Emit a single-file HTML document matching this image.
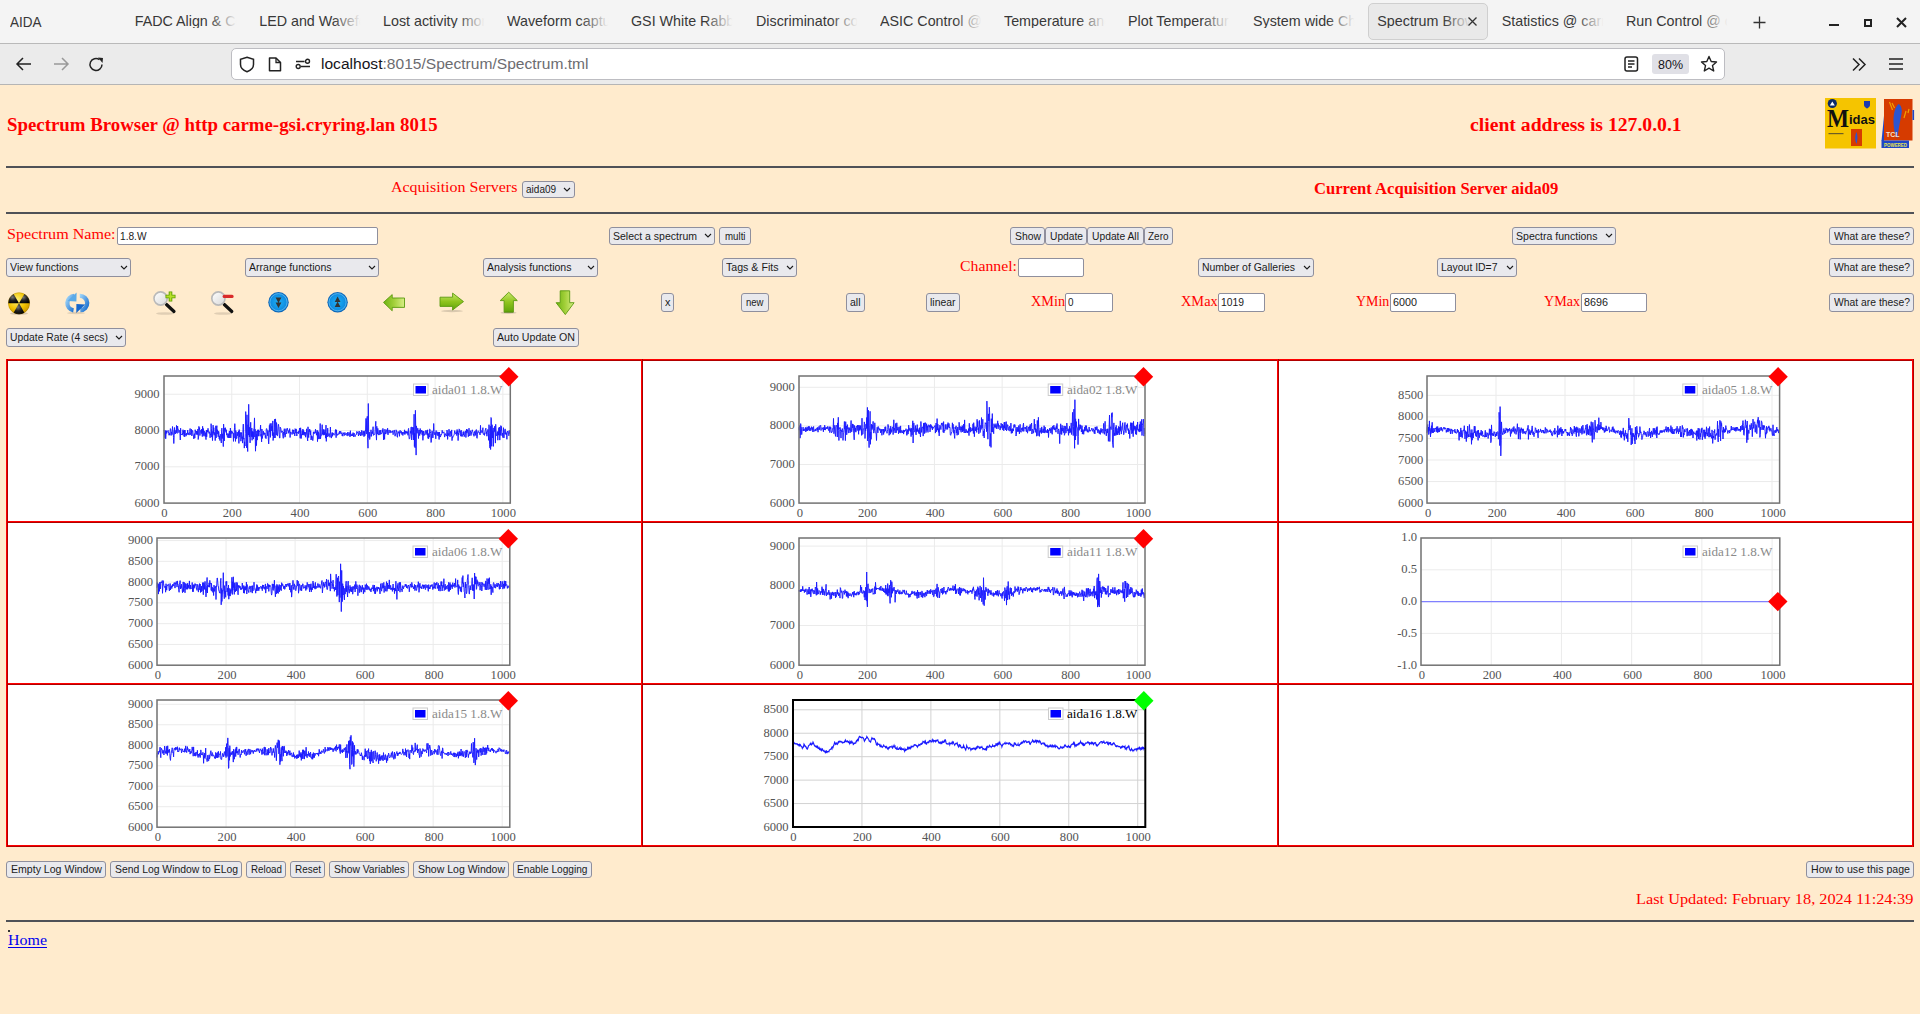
<!DOCTYPE html>
<html><head><meta charset="utf-8"><title>AIDA Spectrum Browser</title>
<style>
html,body{margin:0;padding:0;}
body{width:1920px;height:1014px;overflow:hidden;position:relative;background:#ffebcd;font-family:"Liberation Sans",sans-serif;}
.t{position:absolute;white-space:pre;transform-origin:0 0;}
.a{position:absolute;}
.btn{position:absolute;box-sizing:border-box;background:#e9e9ed;border:1px solid #8f8f9d;border-radius:3px;}
.inp{position:absolute;box-sizing:border-box;background:#fff;border:1px solid #8f8f9d;border-radius:2px;}
.hr{position:absolute;left:6px;width:1908px;height:2px;background:#4f5157;}
svg{position:absolute;overflow:visible;}
</style></head><body>
<div class="a" style="left:0;top:0;width:1920px;height:43px;background:#f4f4f4;"></div>
<div class="a" style="left:0;top:43px;width:1920px;height:1px;background:#b9b9b9;"></div>
<div class="a" style="left:0;top:44px;width:1920px;height:40px;background:#ebebeb;"></div>
<div class="a" style="left:0;top:84px;width:1920px;height:1px;background:#b5b5b5;"></div>
<div class="a" style="left:1368px;top:3px;width:120px;height:37px;box-sizing:border-box;background:#e9e9e9;border:1px solid #cfcfcf;border-radius:5px;"></div>
<div class="t" style="left:10.00px;top:15.39px;font:14.3px/14.3px 'Liberation Sans', sans-serif;color:#383838;transform:scaleX(0.9440);">AIDA</div>
<div class="t" style="left:134.7px;top:14.1px;width:104px;overflow:hidden;font:14.3px/14.3px 'Liberation Sans', sans-serif;color:#383838;">FADC Align &amp; Control</div>
<div class="a" style="left:208.7px;top:8px;width:30px;height:26px;background:linear-gradient(to right,rgba(0,0,0,0),#f4f4f4 92%);"></div>
<div class="t" style="left:259.2px;top:14.1px;width:104px;overflow:hidden;font:14.3px/14.3px 'Liberation Sans', sans-serif;color:#383838;">LED and Waveform</div>
<div class="a" style="left:333.2px;top:8px;width:30px;height:26px;background:linear-gradient(to right,rgba(0,0,0,0),#f4f4f4 92%);"></div>
<div class="t" style="left:383px;top:14.1px;width:104px;overflow:hidden;font:14.3px/14.3px 'Liberation Sans', sans-serif;color:#383838;">Lost activity monitor</div>
<div class="a" style="left:457px;top:8px;width:30px;height:26px;background:linear-gradient(to right,rgba(0,0,0,0),#f4f4f4 92%);"></div>
<div class="t" style="left:507px;top:14.1px;width:104px;overflow:hidden;font:14.3px/14.3px 'Liberation Sans', sans-serif;color:#383838;">Waveform capture</div>
<div class="a" style="left:581px;top:8px;width:30px;height:26px;background:linear-gradient(to right,rgba(0,0,0,0),#f4f4f4 92%);"></div>
<div class="t" style="left:631px;top:14.1px;width:104px;overflow:hidden;font:14.3px/14.3px 'Liberation Sans', sans-serif;color:#383838;">GSI White Rabbit</div>
<div class="a" style="left:705px;top:8px;width:30px;height:26px;background:linear-gradient(to right,rgba(0,0,0,0),#f4f4f4 92%);"></div>
<div class="t" style="left:756px;top:14.1px;width:104px;overflow:hidden;font:14.3px/14.3px 'Liberation Sans', sans-serif;color:#383838;">Discriminator control</div>
<div class="a" style="left:830px;top:8px;width:30px;height:26px;background:linear-gradient(to right,rgba(0,0,0,0),#f4f4f4 92%);"></div>
<div class="t" style="left:880px;top:14.1px;width:104px;overflow:hidden;font:14.3px/14.3px 'Liberation Sans', sans-serif;color:#383838;">ASIC Control @ carme</div>
<div class="a" style="left:954px;top:8px;width:30px;height:26px;background:linear-gradient(to right,rgba(0,0,0,0),#f4f4f4 92%);"></div>
<div class="t" style="left:1004px;top:14.1px;width:104px;overflow:hidden;font:14.3px/14.3px 'Liberation Sans', sans-serif;color:#383838;">Temperature and</div>
<div class="a" style="left:1078px;top:8px;width:30px;height:26px;background:linear-gradient(to right,rgba(0,0,0,0),#f4f4f4 92%);"></div>
<div class="t" style="left:1128px;top:14.1px;width:104px;overflow:hidden;font:14.3px/14.3px 'Liberation Sans', sans-serif;color:#383838;">Plot Temperature</div>
<div class="a" style="left:1202px;top:8px;width:30px;height:26px;background:linear-gradient(to right,rgba(0,0,0,0),#f4f4f4 92%);"></div>
<div class="t" style="left:1253px;top:14.1px;width:104px;overflow:hidden;font:14.3px/14.3px 'Liberation Sans', sans-serif;color:#383838;">System wide Checks</div>
<div class="a" style="left:1327px;top:8px;width:30px;height:26px;background:linear-gradient(to right,rgba(0,0,0,0),#f4f4f4 92%);"></div>
<div class="t" style="left:1377.3px;top:14.1px;width:96px;overflow:hidden;font:14.3px/14.3px 'Liberation Sans', sans-serif;color:#383838;">Spectrum Browser</div>
<div class="a" style="left:1443.3px;top:8px;width:30px;height:26px;background:linear-gradient(to right,rgba(0,0,0,0),#e9e9e9 92%);"></div>
<div class="t" style="left:1501.7px;top:14.1px;width:104px;overflow:hidden;font:14.3px/14.3px 'Liberation Sans', sans-serif;color:#383838;">Statistics @ carme</div>
<div class="a" style="left:1575.7px;top:8px;width:30px;height:26px;background:linear-gradient(to right,rgba(0,0,0,0),#f4f4f4 92%);"></div>
<div class="t" style="left:1626px;top:14.1px;width:104px;overflow:hidden;font:14.3px/14.3px 'Liberation Sans', sans-serif;color:#383838;">Run Control @ carme</div>
<div class="a" style="left:1700px;top:8px;width:30px;height:26px;background:linear-gradient(to right,rgba(0,0,0,0),#f4f4f4 92%);"></div>
<svg style="left:1467px;top:16px" width="11" height="11"><path d="M1.5 1.5L9.5 9.5M9.5 1.5L1.5 9.5" stroke="#333" stroke-width="1.3" fill="none"/></svg>
<svg style="left:1752px;top:15px" width="15" height="15"><path d="M7.5 1.5V13.5M1.5 7.5H13.5" stroke="#333" stroke-width="1.3" fill="none"/></svg>
<div class="a" style="left:1829px;top:24px;width:10px;height:2px;background:#222;"></div>
<div class="a" style="left:1864px;top:18.5px;width:8px;height:8px;box-sizing:border-box;border:2.4px solid #222;"></div>
<svg style="left:1896px;top:17px" width="11" height="11"><path d="M1 1L10 10M10 1L1 10" stroke="#222" stroke-width="2" fill="none"/></svg>
<svg style="left:15px;top:56px" width="18" height="16"><path d="M2 8H16M8 2L2 8L8 14" stroke="#222" stroke-width="1.5" fill="none"/></svg>
<svg style="left:52px;top:56px" width="18" height="16"><path d="M2 8H16M10 2L16 8L10 14" stroke="#999" stroke-width="1.5" fill="none"/></svg>
<svg style="left:88px;top:56px" width="17" height="17"><path d="M14 8.5A6 6 0 1 1 11.5 3.6" stroke="#222" stroke-width="1.5" fill="none"/><path d="M10 1.5L15 2L14.5 7Z" fill="#222"/></svg>
<div class="a" style="left:231px;top:48px;width:1494px;height:32px;box-sizing:border-box;background:#fff;border:1px solid #bdbdc2;border-radius:5px;"></div>
<svg style="left:239px;top:56px" width="16" height="17"><path d="M8 1.2L14.5 3.2V8.5C14.5 12 11.5 14.5 8 15.8C4.5 14.5 1.5 12 1.5 8.5V3.2Z" stroke="#222" stroke-width="1.5" fill="none"/></svg>
<svg style="left:268px;top:57px" width="14" height="15"><path d="M1.5 1H8L12.5 5.5V13.8H1.5Z" stroke="#222" stroke-width="1.5" fill="none" stroke-linejoin="round"/><path d="M8 1V5.5H12.5" stroke="#222" stroke-width="1.3" fill="none"/></svg>
<svg style="left:295px;top:58px" width="16" height="12"><path d="M6 8.5H15M1 3.5H9.5" stroke="#222" stroke-width="1.5"/><circle cx="3.2" cy="8.5" r="2" stroke="#222" stroke-width="1.4" fill="none"/><circle cx="12.5" cy="3.3" r="2" stroke="#222" stroke-width="1.4" fill="none"/></svg>
<div class="t" style="left:321.00px;top:55.88px;font:15.5px/15.5px 'Liberation Sans', sans-serif;color:#15141a;transform:scaleX(1.0049);">localhost<span style="color:#6c6c70">:8015/Spectrum/Spectrum.tml</span></div>
<svg style="left:1624px;top:56px" width="15" height="16"><rect x="1" y="1" width="12.5" height="14" rx="2" stroke="#222" stroke-width="1.5" fill="none"/><path d="M4 5H10.5M4 8H10.5M4 11H8" stroke="#222" stroke-width="1.3"/></svg>
<div class="a" style="left:1652px;top:54px;width:37px;height:20px;background:#e0e0e6;border-radius:3px;"></div>
<div class="t" style="left:1658.00px;top:57.99px;font:13px/13px 'Liberation Sans', sans-serif;color:#15141a;transform:scaleX(0.9608);">80%</div>
<svg style="left:1700px;top:55px" width="18" height="18"><path d="M9 1.5L11.2 6.5L16.5 7L12.5 10.6L13.7 16L9 13.2L4.3 16L5.5 10.6L1.5 7L6.8 6.5Z" stroke="#222" stroke-width="1.4" fill="none" stroke-linejoin="round"/></svg>
<svg style="left:1851px;top:57px" width="16" height="15"><path d="M2 1.5L8 7.5L2 13.5M8 1.5L14 7.5L8 13.5" stroke="#222" stroke-width="1.5" fill="none"/></svg>
<svg style="left:1888px;top:57px" width="16" height="14"><path d="M1 2H15M1 7H15M1 12H15" stroke="#222" stroke-width="1.5"/></svg>
<div class="t" style="left:7.00px;top:115.15px;font:bold 19.4px/19.4px 'Liberation Serif', serif;color:#f00;transform:scaleX(0.9715);">Spectrum Browser @ http carme-gsi.cryring.lan 8015</div>
<div class="t" style="left:1470.00px;top:115.15px;font:bold 19.4px/19.4px 'Liberation Serif', serif;color:#f00;transform:scaleX(1.0147);">client address is 127.0.0.1</div>
<div class="hr" style="top:166px"></div>
<div class="t" style="left:391.10px;top:180.26px;font:15.1px/15.1px 'Liberation Serif', serif;color:#f00;transform:scaleX(1.0580);">Acquisition Servers</div>
<div class="t" style="left:1313.70px;top:181.43px;font:bold 16.8px/16.8px 'Liberation Serif', serif;color:#f00;transform:scaleX(0.9898);">Current Acquisition Server aida09</div>
<div class="hr" style="top:212px"></div>
<div class="btn" style="left:522.1px;top:181.1px;width:52.69999999999993px;height:17.30000000000001px;"></div>
<svg style="left:563.3px;top:187.25px" width="8" height="5"><path d="M1 1L4 4L7 1" stroke="#1b1b1b" stroke-width="1.1" fill="none"/></svg>
<div class="t" style="left:526.40px;top:184.30px;font:11.2px/11.2px 'Liberation Sans', sans-serif;color:#1b1b1b;transform:scaleX(0.8960);">aida09</div>
<div class="t" style="left:7.00px;top:227.16px;font:15.1px/15.1px 'Liberation Serif', serif;color:#f00;transform:scaleX(1.0662);">Spectrum Name:</div>
<div class="inp" style="left:117px;top:227.3px;width:261px;height:17.299999999999983px;"></div>
<div class="t" style="left:120.00px;top:230.50px;font:11.2px/11.2px 'Liberation Sans', sans-serif;color:#1b1b1b;transform:scaleX(0.9069);">1.8.W</div>
<div class="btn" style="left:609px;top:227.3px;width:106px;height:17.299999999999983px;"></div>
<svg style="left:703.5px;top:233.45px" width="8" height="5"><path d="M1 1L4 4L7 1" stroke="#1b1b1b" stroke-width="1.1" fill="none"/></svg>
<div class="t" style="left:612.60px;top:230.50px;font:11.2px/11.2px 'Liberation Sans', sans-serif;color:#1b1b1b;transform:scaleX(0.9381);">Select a spectrum</div>
<div class="btn" style="left:719px;top:227.3px;width:32px;height:17.299999999999983px;"></div>
<div class="t" style="left:724.75px;top:230.50px;font:11.2px/11.2px 'Liberation Sans', sans-serif;color:#1b1b1b;transform:scaleX(0.8679);">multi</div>
<div class="btn" style="left:1010px;top:227.3px;width:35px;height:17.299999999999983px;"></div>
<div class="t" style="left:1014.50px;top:230.50px;font:11.2px/11.2px 'Liberation Sans', sans-serif;color:#1b1b1b;transform:scaleX(0.9291);">Show</div>
<div class="btn" style="left:1045px;top:227.3px;width:42px;height:17.299999999999983px;"></div>
<div class="t" style="left:1049.50px;top:230.50px;font:11.2px/11.2px 'Liberation Sans', sans-serif;color:#1b1b1b;transform:scaleX(0.9148);">Update</div>
<div class="btn" style="left:1087px;top:227.3px;width:57px;height:17.299999999999983px;"></div>
<div class="t" style="left:1091.75px;top:230.50px;font:11.2px/11.2px 'Liberation Sans', sans-serif;color:#1b1b1b;transform:scaleX(0.9202);">Update All</div>
<div class="btn" style="left:1144px;top:227.3px;width:29px;height:17.299999999999983px;"></div>
<div class="t" style="left:1148.25px;top:230.50px;font:11.2px/11.2px 'Liberation Sans', sans-serif;color:#1b1b1b;transform:scaleX(0.8912);">Zero</div>
<div class="btn" style="left:1512px;top:227.3px;width:104px;height:17.299999999999983px;"></div>
<svg style="left:1604.5px;top:233.45px" width="8" height="5"><path d="M1 1L4 4L7 1" stroke="#1b1b1b" stroke-width="1.1" fill="none"/></svg>
<div class="t" style="left:1515.60px;top:230.50px;font:11.2px/11.2px 'Liberation Sans', sans-serif;color:#1b1b1b;transform:scaleX(0.9428);">Spectra functions</div>
<div class="btn" style="left:1829px;top:227.3px;width:85px;height:17.299999999999983px;"></div>
<div class="t" style="left:1833.50px;top:230.50px;font:11.2px/11.2px 'Liberation Sans', sans-serif;color:#1b1b1b;transform:scaleX(0.9258);">What are these?</div>
<div class="btn" style="left:6px;top:258.3px;width:125px;height:18.399999999999977px;"></div>
<svg style="left:119.5px;top:265.0px" width="8" height="5"><path d="M1 1L4 4L7 1" stroke="#1b1b1b" stroke-width="1.1" fill="none"/></svg>
<div class="t" style="left:9.60px;top:262.05px;font:11.2px/11.2px 'Liberation Sans', sans-serif;color:#1b1b1b;transform:scaleX(0.9523);">View functions</div>
<div class="btn" style="left:245px;top:258.3px;width:134px;height:18.399999999999977px;"></div>
<svg style="left:367.5px;top:265.0px" width="8" height="5"><path d="M1 1L4 4L7 1" stroke="#1b1b1b" stroke-width="1.1" fill="none"/></svg>
<div class="t" style="left:248.60px;top:262.05px;font:11.2px/11.2px 'Liberation Sans', sans-serif;color:#1b1b1b;transform:scaleX(0.9409);">Arrange functions</div>
<div class="btn" style="left:483px;top:258.3px;width:115px;height:18.399999999999977px;"></div>
<svg style="left:586.5px;top:265.0px" width="8" height="5"><path d="M1 1L4 4L7 1" stroke="#1b1b1b" stroke-width="1.1" fill="none"/></svg>
<div class="t" style="left:486.60px;top:262.05px;font:11.2px/11.2px 'Liberation Sans', sans-serif;color:#1b1b1b;transform:scaleX(0.9437);">Analysis functions</div>
<div class="btn" style="left:722px;top:258.3px;width:75px;height:18.399999999999977px;"></div>
<svg style="left:785.5px;top:265.0px" width="8" height="5"><path d="M1 1L4 4L7 1" stroke="#1b1b1b" stroke-width="1.1" fill="none"/></svg>
<div class="t" style="left:725.60px;top:262.05px;font:11.2px/11.2px 'Liberation Sans', sans-serif;color:#1b1b1b;transform:scaleX(0.9489);">Tags &amp; Fits</div>
<div class="t" style="left:960.00px;top:259.16px;font:15.1px/15.1px 'Liberation Serif', serif;color:#f00;transform:scaleX(1.0460);">Channel:</div>
<div class="inp" style="left:1018px;top:258.3px;width:66px;height:18.399999999999977px;"></div>
<div class="btn" style="left:1198px;top:258.3px;width:116px;height:18.399999999999977px;"></div>
<svg style="left:1302.5px;top:265.0px" width="8" height="5"><path d="M1 1L4 4L7 1" stroke="#1b1b1b" stroke-width="1.1" fill="none"/></svg>
<div class="t" style="left:1201.60px;top:262.05px;font:11.2px/11.2px 'Liberation Sans', sans-serif;color:#1b1b1b;transform:scaleX(0.9349);">Number of Galleries</div>
<div class="btn" style="left:1437px;top:258.3px;width:80px;height:18.399999999999977px;"></div>
<svg style="left:1505.5px;top:265.0px" width="8" height="5"><path d="M1 1L4 4L7 1" stroke="#1b1b1b" stroke-width="1.1" fill="none"/></svg>
<div class="t" style="left:1440.60px;top:262.05px;font:11.2px/11.2px 'Liberation Sans', sans-serif;color:#1b1b1b;transform:scaleX(0.9317);">Layout ID=7</div>
<div class="btn" style="left:1829px;top:258.3px;width:85px;height:18.399999999999977px;"></div>
<div class="t" style="left:1833.50px;top:262.05px;font:11.2px/11.2px 'Liberation Sans', sans-serif;color:#1b1b1b;transform:scaleX(0.9258);">What are these?</div>
<div class="btn" style="left:661px;top:293.3px;width:13px;height:18.399999999999977px;"></div>
<div class="t" style="left:664.75px;top:297.05px;font:11.2px/11.2px 'Liberation Sans', sans-serif;color:#1b1b1b;transform:scaleX(0.9832);">x</div>
<div class="btn" style="left:741px;top:293.3px;width:28px;height:18.399999999999977px;"></div>
<div class="t" style="left:746.25px;top:297.05px;font:11.2px/11.2px 'Liberation Sans', sans-serif;color:#1b1b1b;transform:scaleX(0.8527);">new</div>
<div class="btn" style="left:846px;top:293.3px;width:19px;height:18.399999999999977px;"></div>
<div class="t" style="left:850.25px;top:297.05px;font:11.2px/11.2px 'Liberation Sans', sans-serif;color:#1b1b1b;transform:scaleX(0.9381);">all</div>
<div class="btn" style="left:926px;top:293.3px;width:34px;height:18.399999999999977px;"></div>
<div class="t" style="left:930.25px;top:297.05px;font:11.2px/11.2px 'Liberation Sans', sans-serif;color:#1b1b1b;transform:scaleX(0.9319);">linear</div>
<div class="t" style="left:1030.80px;top:293.66px;font:15.1px/15.1px 'Liberation Serif', serif;color:#f00;transform:scaleX(0.9428);">XMin</div>
<div class="inp" style="left:1065px;top:293.3px;width:48px;height:18.399999999999977px;"></div>
<div class="t" style="left:1068.00px;top:297.05px;font:11.2px/11.2px 'Liberation Sans', sans-serif;color:#1b1b1b;transform:scaleX(0.8840);">0</div>
<div class="t" style="left:1180.80px;top:293.66px;font:15.1px/15.1px 'Liberation Serif', serif;color:#f00;transform:scaleX(0.9516);">XMax</div>
<div class="inp" style="left:1218px;top:293.3px;width:47px;height:18.399999999999977px;"></div>
<div class="t" style="left:1221.00px;top:297.05px;font:11.2px/11.2px 'Liberation Sans', sans-serif;color:#1b1b1b;transform:scaleX(0.9241);">1019</div>
<div class="t" style="left:1356.40px;top:293.66px;font:15.1px/15.1px 'Liberation Serif', serif;color:#f00;transform:scaleX(0.9234);">YMin</div>
<div class="inp" style="left:1390px;top:293.3px;width:66px;height:18.399999999999977px;"></div>
<div class="t" style="left:1393.00px;top:297.05px;font:11.2px/11.2px 'Liberation Sans', sans-serif;color:#1b1b1b;transform:scaleX(0.9643);">6000</div>
<div class="t" style="left:1544.30px;top:293.66px;font:15.1px/15.1px 'Liberation Serif', serif;color:#f00;transform:scaleX(0.9386);">YMax</div>
<div class="inp" style="left:1581px;top:293.3px;width:66px;height:18.399999999999977px;"></div>
<div class="t" style="left:1584.00px;top:297.05px;font:11.2px/11.2px 'Liberation Sans', sans-serif;color:#1b1b1b;transform:scaleX(0.9643);">8696</div>
<div class="btn" style="left:1829px;top:293.3px;width:85px;height:18.399999999999977px;"></div>
<div class="t" style="left:1833.50px;top:297.05px;font:11.2px/11.2px 'Liberation Sans', sans-serif;color:#1b1b1b;transform:scaleX(0.9258);">What are these?</div>
<div class="btn" style="left:6px;top:328.3px;width:120px;height:18.30000000000001px;"></div>
<svg style="left:114.5px;top:334.95000000000005px" width="8" height="5"><path d="M1 1L4 4L7 1" stroke="#1b1b1b" stroke-width="1.1" fill="none"/></svg>
<div class="t" style="left:9.60px;top:332.00px;font:11.2px/11.2px 'Liberation Sans', sans-serif;color:#1b1b1b;transform:scaleX(0.9271);">Update Rate (4 secs)</div>
<div class="btn" style="left:493px;top:328.3px;width:86px;height:18.30000000000001px;"></div>
<div class="t" style="left:497.00px;top:332.00px;font:11.2px/11.2px 'Liberation Sans', sans-serif;color:#1b1b1b;transform:scaleX(0.9502);">Auto Update ON</div>
<div class="btn" style="left:6px;top:860.7px;width:100px;height:17.699999999999932px;"></div>
<div class="t" style="left:10.50px;top:864.10px;font:11.2px/11.2px 'Liberation Sans', sans-serif;color:#1b1b1b;transform:scaleX(0.9442);">Empty Log Window</div>
<div class="btn" style="left:110.3px;top:860.7px;width:131.7px;height:17.699999999999932px;"></div>
<div class="t" style="left:114.65px;top:864.10px;font:11.2px/11.2px 'Liberation Sans', sans-serif;color:#1b1b1b;transform:scaleX(0.9285);">Send Log Window to ELog</div>
<div class="btn" style="left:246.3px;top:860.7px;width:39.69999999999999px;height:17.699999999999932px;"></div>
<div class="t" style="left:250.65px;top:864.10px;font:11.2px/11.2px 'Liberation Sans', sans-serif;color:#1b1b1b;transform:scaleX(0.8744);">Reload</div>
<div class="btn" style="left:290.3px;top:860.7px;width:34.69999999999999px;height:17.699999999999932px;"></div>
<div class="t" style="left:294.65px;top:864.10px;font:11.2px/11.2px 'Liberation Sans', sans-serif;color:#1b1b1b;transform:scaleX(0.8896);">Reset</div>
<div class="btn" style="left:329.3px;top:860.7px;width:79.69999999999999px;height:17.699999999999932px;"></div>
<div class="t" style="left:333.65px;top:864.10px;font:11.2px/11.2px 'Liberation Sans', sans-serif;color:#1b1b1b;transform:scaleX(0.9233);">Show Variables</div>
<div class="btn" style="left:413.3px;top:860.7px;width:95.69999999999999px;height:17.699999999999932px;"></div>
<div class="t" style="left:417.65px;top:864.10px;font:11.2px/11.2px 'Liberation Sans', sans-serif;color:#1b1b1b;transform:scaleX(0.9389);">Show Log Window</div>
<div class="btn" style="left:513.3px;top:860.7px;width:78.70000000000005px;height:17.699999999999932px;"></div>
<div class="t" style="left:517.40px;top:864.10px;font:11.2px/11.2px 'Liberation Sans', sans-serif;color:#1b1b1b;transform:scaleX(0.9066);">Enable Logging</div>
<div class="btn" style="left:1806px;top:860.7px;width:108px;height:17.699999999999932px;"></div>
<div class="t" style="left:1810.50px;top:864.10px;font:11.2px/11.2px 'Liberation Sans', sans-serif;color:#1b1b1b;transform:scaleX(0.9476);">How to use this page</div>
<div class="t" style="left:1636.00px;top:892.36px;font:15.1px/15.1px 'Liberation Serif', serif;color:#f00;transform:scaleX(1.0797);">Last Updated: February 18, 2024 11:24:39</div>
<div class="hr" style="top:920px"></div>
<div class="a" style="left:8px;top:930px;width:1.5px;height:1.5px;background:#333;"></div>
<div class="t" style="left:8.00px;top:933.16px;font:15.1px/15.1px 'Liberation Serif', serif;color:#00e;transform:scaleX(1.0573);">Home</div>
<div class="a" style="left:8px;top:947px;width:39px;height:1px;background:#00e;"></div>
<div class="a" style="left:6px;top:359px;width:1908px;height:488px;background:#fff;"></div>
<svg style="left:118.5px;top:364.2px" width="416.3" height="167.10000000000002"><line x1="112.77" y1="12.0" x2="112.77" y2="139.10000000000002" stroke="#ebebeb" stroke-width="1"/><line x1="180.54" y1="12.0" x2="180.54" y2="139.10000000000002" stroke="#ebebeb" stroke-width="1"/><line x1="248.31" y1="12.0" x2="248.31" y2="139.10000000000002" stroke="#ebebeb" stroke-width="1"/><line x1="316.08" y1="12.0" x2="316.08" y2="139.10000000000002" stroke="#ebebeb" stroke-width="1"/><line x1="383.85" y1="12.0" x2="383.85" y2="139.10000000000002" stroke="#ebebeb" stroke-width="1"/><line x1="45.0" y1="102.81" x2="391.3" y2="102.81" stroke="#ebebeb" stroke-width="1"/><line x1="45.0" y1="66.51" x2="391.3" y2="66.51" stroke="#ebebeb" stroke-width="1"/><line x1="45.0" y1="30.22" x2="391.3" y2="30.22" stroke="#ebebeb" stroke-width="1"/><polyline points="45.0,66.0 45.3,67.6 45.7,71.2 46.0,73.9 46.4,66.5 46.7,74.8 47.0,70.1 47.4,66.7 47.7,69.4 48.0,67.8 48.4,67.6 48.7,67.5 49.1,66.4 49.4,67.3 49.7,69.5 50.1,71.3 50.4,69.4 50.8,70.9 51.1,67.3 51.4,64.6 51.8,65.6 52.1,71.5 52.5,67.8 52.8,68.6 53.1,70.6 53.5,62.5 53.8,65.7 54.1,66.9 54.5,73.5 54.8,79.5 55.2,71.6 55.5,63.5 55.8,69.5 56.2,68.7 56.5,69.8 56.9,66.3 57.2,68.6 57.5,61.4 57.9,69.0 58.2,69.4 58.6,62.0 58.9,65.2 59.2,65.2 59.6,66.0 59.9,68.7 60.2,67.4 60.6,66.4 60.9,68.1 61.3,76.0 61.6,64.2 61.9,69.9 62.3,70.5 62.6,70.0 63.0,71.0 63.3,71.0 63.6,68.7 64.0,65.7 64.3,69.5 64.7,66.9 65.0,72.4 65.3,66.1 65.7,72.8 66.0,66.1 66.3,70.6 66.7,70.0 67.0,72.2 67.4,71.4 67.7,69.1 68.0,70.6 68.4,69.1 68.7,66.1 69.1,70.6 69.4,69.5 69.7,68.9 70.1,71.1 70.4,68.8 70.8,67.8 71.1,64.5 71.4,70.7 71.8,69.3 72.1,69.2 72.4,65.2 72.8,71.9 73.1,68.2 73.5,66.4 73.8,66.9 74.1,71.0 74.5,72.1 74.8,74.9 75.2,70.6 75.5,69.7 75.8,74.1 76.2,65.7 76.5,68.3 76.9,69.7 77.2,70.7 77.5,67.1 77.9,69.9 78.2,67.2 78.5,70.6 78.9,65.0 79.2,75.5 79.6,73.0 79.9,62.4 80.2,65.6 80.6,63.7 80.9,71.5 81.3,66.6 81.6,66.2 81.9,66.5 82.3,69.6 82.6,65.2 83.0,68.1 83.3,72.6 83.6,62.3 84.0,68.8 84.3,64.5 84.6,71.3 85.0,72.3 85.3,67.1 85.7,67.2 86.0,71.8 86.3,68.6 86.7,73.3 87.0,75.6 87.4,66.1 87.7,72.8 88.0,67.5 88.4,66.1 88.7,68.1 89.0,64.3 89.4,68.2 89.7,68.4 90.1,69.5 90.4,67.7 90.7,67.9 91.1,73.8 91.4,69.8 91.8,70.9 92.1,59.7 92.4,64.3 92.8,73.1 93.1,67.4 93.5,76.6 93.8,69.5 94.1,61.1 94.5,69.4 94.8,63.7 95.1,71.2 95.5,68.5 95.8,68.7 96.2,76.6 96.5,72.7 96.8,61.8 97.2,73.9 97.5,64.2 97.9,61.7 98.2,70.1 98.5,65.8 98.9,68.2 99.2,72.8 99.6,67.2 99.9,68.0 100.2,74.8 100.6,72.1 100.9,76.5 101.2,71.6 101.6,70.3 101.9,74.8 102.3,79.0 102.6,66.9 102.9,64.1 103.3,74.5 103.6,69.8 104.0,73.4 104.3,82.6 104.6,60.1 105.0,68.8 105.3,76.9 105.7,64.2 106.0,66.8 106.3,63.7 106.7,66.8 107.0,68.4 107.3,65.7 107.7,71.1 108.0,69.3 108.4,73.4 108.7,73.4 109.0,69.8 109.4,69.8 109.7,74.0 110.1,69.4 110.4,67.0 110.7,74.0 111.1,71.4 111.4,64.0 111.8,73.9 112.1,68.1 112.4,66.8 112.8,69.7 113.1,69.6 113.4,67.6 113.8,69.0 114.1,69.6 114.5,77.4 114.8,69.2 115.1,74.1 115.5,63.2 115.8,59.7 116.2,65.3 116.5,77.4 116.8,66.6 117.2,69.9 117.5,74.7 117.9,74.4 118.2,68.1 118.5,71.7 118.9,70.5 119.2,70.1 119.5,67.1 119.9,79.4 120.2,65.6 120.6,73.1 120.9,71.7 121.2,68.4 121.6,69.0 121.9,77.2 122.3,68.4 122.6,70.7 122.9,74.6 123.3,72.7 123.6,79.1 124.0,65.6 124.3,60.1 124.6,75.2 125.0,74.2 125.3,84.1 125.6,77.8 126.0,82.0 126.3,69.8 126.7,47.6 127.0,56.4 127.3,56.3 127.7,83.9 128.0,50.8 128.4,79.4 128.7,87.5 129.0,60.7 129.4,71.1 129.7,40.3 130.1,67.9 130.4,73.0 130.7,63.2 131.1,78.9 131.4,64.3 131.7,58.3 132.1,70.7 132.4,72.7 132.8,64.0 133.1,76.3 133.4,67.4 133.8,73.0 134.1,67.7 134.5,75.1 134.8,65.0 135.1,65.0 135.5,53.9 135.8,73.0 136.1,65.2 136.5,87.2 136.8,77.3 137.2,67.0 137.5,81.6 137.8,70.3 138.2,76.1 138.5,66.2 138.9,65.7 139.2,72.1 139.5,65.9 139.9,72.2 140.2,68.8 140.6,66.8 140.9,66.6 141.2,66.4 141.6,61.1 141.9,72.3 142.2,70.0 142.6,77.9 142.9,65.0 143.3,74.5 143.6,72.0 143.9,71.6 144.3,67.1 144.6,70.4 145.0,70.4 145.3,68.7 145.6,70.4 146.0,69.1 146.3,73.6 146.7,71.4 147.0,74.7 147.3,64.8 147.7,64.5 148.0,65.6 148.3,67.2 148.7,71.8 149.0,66.6 149.4,76.0 149.7,79.9 150.0,74.0 150.4,61.4 150.7,67.7 151.1,59.6 151.4,73.4 151.7,62.5 152.1,59.3 152.4,62.0 152.8,66.9 153.1,62.1 153.4,71.6 153.8,56.9 154.1,76.5 154.4,74.1 154.8,68.5 155.1,74.0 155.5,55.3 155.8,63.4 156.1,74.0 156.5,54.9 156.8,59.7 157.2,71.0 157.5,58.6 157.8,60.7 158.2,71.8 158.5,71.8 158.9,66.8 159.2,62.5 159.5,60.3 159.9,63.3 160.2,70.2 160.5,73.9 160.9,74.1 161.2,63.1 161.6,64.4 161.9,64.4 162.2,68.5 162.6,68.2 162.9,66.9 163.3,67.0 163.6,68.3 163.9,72.2 164.3,74.3 164.6,68.1 165.0,69.0 165.3,64.7 165.6,71.3 166.0,73.2 166.3,72.9 166.6,68.6 167.0,64.7 167.3,69.2 167.7,69.9 168.0,67.7 168.3,64.2 168.7,65.7 169.0,66.6 169.4,66.6 169.7,69.3 170.0,68.4 170.4,67.8 170.7,64.6 171.1,73.5 171.4,69.9 171.7,67.8 172.1,69.1 172.4,68.9 172.7,69.2 173.1,70.5 173.4,67.6 173.8,65.6 174.1,69.6 174.4,67.4 174.8,66.0 175.1,70.1 175.5,68.9 175.8,72.0 176.1,64.7 176.5,65.1 176.8,69.2 177.1,64.9 177.5,67.3 177.8,72.0 178.2,68.0 178.5,68.4 178.8,67.9 179.2,67.7 179.5,69.7 179.9,66.9 180.2,68.3 180.5,64.0 180.9,69.2 181.2,74.3 181.6,63.8 181.9,67.4 182.2,74.5 182.6,70.3 182.9,70.8 183.2,66.7 183.6,71.1 183.9,65.0 184.3,70.7 184.6,66.4 184.9,70.5 185.3,71.4 185.6,67.9 186.0,69.8 186.3,68.3 186.6,73.2 187.0,71.2 187.3,70.1 187.7,64.8 188.0,68.4 188.3,74.0 188.7,76.9 189.0,62.8 189.3,68.3 189.7,73.6 190.0,66.6 190.4,67.5 190.7,65.0 191.0,69.0 191.4,71.0 191.7,66.6 192.1,76.0 192.4,71.7 192.7,74.4 193.1,72.3 193.4,75.1 193.8,76.6 194.1,75.0 194.4,67.8 194.8,69.6 195.1,70.0 195.4,68.2 195.8,67.8 196.1,68.9 196.5,65.2 196.8,69.1 197.1,68.8 197.5,71.2 197.8,67.3 198.2,66.2 198.5,77.6 198.8,66.8 199.2,75.1 199.5,68.3 199.9,69.6 200.2,74.9 200.5,74.7 200.9,71.0 201.2,59.5 201.5,74.9 201.9,72.0 202.2,71.4 202.6,71.4 202.9,64.8 203.2,60.7 203.6,70.3 203.9,68.8 204.3,71.2 204.6,65.4 204.9,70.3 205.3,67.8 205.6,70.8 206.0,65.6 206.3,70.5 206.6,74.2 207.0,61.1 207.3,77.4 207.6,69.5 208.0,71.7 208.3,72.9 208.7,64.1 209.0,69.2 209.3,71.3 209.7,72.3 210.0,69.4 210.4,70.3 210.7,71.2 211.0,73.3 211.4,63.0 211.7,69.6 212.1,70.9 212.4,74.1 212.7,71.8 213.1,68.6 213.4,72.3 213.7,68.8 214.1,70.6 214.4,69.5 214.8,69.6 215.1,71.2 215.4,70.9 215.8,70.5 216.1,69.0 216.5,65.5 216.8,68.2 217.1,73.7 217.5,65.8 217.8,70.5 218.1,71.5 218.5,70.1 218.8,70.4 219.2,69.7 219.5,70.4 219.8,70.3 220.2,68.0 220.5,67.3 220.9,70.1 221.2,67.2 221.5,68.4 221.9,67.6 222.2,69.7 222.6,69.8 222.9,68.8 223.2,71.9 223.6,70.1 223.9,72.2 224.2,68.6 224.6,69.8 224.9,69.1 225.3,70.7 225.6,71.5 225.9,68.4 226.3,70.9 226.6,70.5 227.0,70.0 227.3,69.2 227.6,69.9 228.0,71.9 228.3,71.9 228.7,68.2 229.0,70.5 229.3,70.4 229.7,71.5 230.0,68.3 230.3,69.1 230.7,70.9 231.0,72.9 231.4,66.7 231.7,70.9 232.0,71.9 232.4,70.7 232.7,71.8 233.1,69.8 233.4,70.8 233.7,71.9 234.1,68.6 234.4,71.2 234.8,73.0 235.1,69.1 235.4,70.6 235.8,71.6 236.1,72.6 236.4,70.9 236.8,70.7 237.1,70.4 237.5,70.5 237.8,67.3 238.1,67.7 238.5,69.0 238.8,68.5 239.2,70.3 239.5,72.0 239.8,68.5 240.2,67.0 240.5,70.6 240.9,70.6 241.2,70.6 241.5,71.9 241.9,68.0 242.2,71.5 242.5,66.5 242.9,66.3 243.2,69.1 243.6,69.3 243.9,71.4 244.2,66.9 244.6,69.0 244.9,72.7 245.3,72.2 245.6,67.3 245.9,71.7 246.3,66.2 246.6,66.9 247.0,54.4 247.3,70.1 247.6,56.3 248.0,54.4 248.3,52.3 248.6,73.2 249.0,84.2 249.3,39.5 249.7,70.9 250.0,73.9 250.3,68.1 250.7,75.5 251.0,73.0 251.4,70.5 251.7,69.8 252.0,65.8 252.4,72.4 252.7,69.4 253.1,67.8 253.4,69.7 253.7,66.6 254.1,62.7 254.4,71.4 254.7,70.9 255.1,70.2 255.4,70.6 255.8,70.3 256.1,67.1 256.4,62.3 256.8,57.3 257.1,69.0 257.5,76.1 257.8,62.3 258.1,68.5 258.5,70.2 258.8,64.4 259.2,69.0 259.5,69.5 259.8,71.1 260.2,66.3 260.5,66.5 260.8,70.8 261.2,69.9 261.5,66.2 261.9,70.2 262.2,69.5 262.5,70.0 262.9,69.2 263.2,65.8 263.6,68.3 263.9,64.4 264.2,65.8 264.6,75.9 264.9,68.6 265.2,68.6 265.6,75.3 265.9,65.2 266.3,68.7 266.6,70.1 266.9,67.0 267.3,65.7 267.6,66.7 268.0,69.5 268.3,68.6 268.6,64.2 269.0,70.9 269.3,68.4 269.7,68.5 270.0,65.9 270.3,67.4 270.7,68.2 271.0,69.1 271.3,66.4 271.7,68.4 272.0,68.7 272.4,68.3 272.7,67.4 273.0,68.5 273.4,68.1 273.7,66.7 274.1,70.7 274.4,69.3 274.7,68.4 275.1,66.1 275.4,66.2 275.8,70.2 276.1,72.2 276.4,70.0 276.8,70.4 277.1,65.8 277.4,66.7 277.8,68.5 278.1,72.5 278.5,73.3 278.8,68.4 279.1,67.4 279.5,68.0 279.8,69.3 280.2,67.8 280.5,72.3 280.8,66.9 281.2,66.3 281.5,68.6 281.9,68.5 282.2,69.3 282.5,67.4 282.9,70.6 283.2,70.0 283.5,68.3 283.9,71.5 284.2,68.2 284.6,68.3 284.9,69.1 285.2,70.0 285.6,65.8 285.9,70.6 286.3,68.8 286.6,67.2 286.9,69.2 287.3,67.3 287.6,69.2 288.0,68.8 288.3,69.3 288.6,67.6 289.0,71.3 289.3,65.6 289.6,64.4 290.0,73.2 290.3,75.1 290.7,74.5 291.0,72.6 291.3,67.1 291.7,69.3 292.0,63.1 292.4,63.0 292.7,76.0 293.0,71.1 293.4,70.8 293.7,63.2 294.1,65.5 294.4,63.6 294.7,76.0 295.1,50.2 295.4,82.5 295.7,69.3 296.1,83.8 296.4,46.3 296.8,65.9 297.1,91.1 297.4,61.9 297.8,64.6 298.1,69.3 298.5,65.0 298.8,64.2 299.1,65.4 299.5,74.5 299.8,67.4 300.2,66.0 300.5,71.4 300.8,71.6 301.2,64.5 301.5,68.0 301.8,69.6 302.2,66.2 302.5,67.7 302.9,66.3 303.2,71.1 303.5,67.3 303.9,76.3 304.2,71.7 304.6,67.0 304.9,71.8 305.2,70.4 305.6,70.8 305.9,69.2 306.2,67.4 306.6,66.5 306.9,70.5 307.3,69.5 307.6,68.0 307.9,66.3 308.3,71.2 308.6,65.8 309.0,74.4 309.3,69.5 309.6,74.7 310.0,71.6 310.3,73.1 310.7,65.1 311.0,65.4 311.3,67.5 311.7,69.5 312.0,78.5 312.3,78.2 312.7,69.4 313.0,66.8 313.4,67.9 313.7,73.8 314.0,74.0 314.4,67.7 314.7,59.5 315.1,67.4 315.4,70.5 315.7,70.8 316.1,68.3 316.4,68.8 316.8,74.8 317.1,66.5 317.4,69.1 317.8,69.2 318.1,71.3 318.4,68.2 318.8,67.9 319.1,72.0 319.5,68.3 319.8,71.9 320.1,75.5 320.5,68.0 320.8,73.2 321.2,72.0 321.5,73.0 321.8,70.4 322.2,71.2 322.5,69.9 322.9,69.3 323.2,66.3 323.5,69.0 323.9,68.9 324.2,69.0 324.5,68.3 324.9,67.8 325.2,69.4 325.6,73.1 325.9,72.3 326.2,69.5 326.6,70.9 326.9,71.3 327.3,71.4 327.6,72.1 327.9,66.0 328.3,66.7 328.6,75.4 329.0,69.2 329.3,70.1 329.6,71.6 330.0,65.2 330.3,68.9 330.6,69.8 331.0,72.8 331.3,67.2 331.7,69.3 332.0,69.3 332.3,72.0 332.7,65.9 333.0,76.6 333.4,72.6 333.7,73.6 334.0,72.8 334.4,72.4 334.7,71.5 335.1,70.9 335.4,69.2 335.7,66.6 336.1,68.4 336.4,69.3 336.7,70.1 337.1,68.8 337.4,67.7 337.8,71.6 338.1,65.5 338.4,69.6 338.8,67.1 339.1,76.6 339.5,69.0 339.8,70.8 340.1,64.9 340.5,65.3 340.8,68.4 341.2,66.9 341.5,70.6 341.8,72.2 342.2,66.2 342.5,72.2 342.8,70.6 343.2,72.5 343.5,71.1 343.9,70.0 344.2,67.7 344.5,71.1 344.9,67.6 345.2,72.7 345.6,70.8 345.9,70.7 346.2,68.0 346.6,66.8 346.9,73.5 347.3,68.9 347.6,65.0 347.9,69.0 348.3,65.6 348.6,67.0 348.9,68.4 349.3,72.7 349.6,70.5 350.0,64.2 350.3,71.2 350.6,71.9 351.0,70.0 351.3,66.6 351.7,68.7 352.0,71.6 352.3,70.3 352.7,67.5 353.0,66.5 353.3,65.8 353.7,67.8 354.0,67.9 354.4,71.0 354.7,70.2 355.0,72.3 355.4,69.1 355.7,67.3 356.1,68.6 356.4,71.4 356.7,66.8 357.1,65.7 357.4,65.6 357.8,73.9 358.1,74.3 358.4,70.8 358.8,67.5 359.1,66.7 359.4,67.3 359.8,68.5 360.1,68.1 360.5,69.1 360.8,70.1 361.1,71.0 361.5,61.3 361.8,69.2 362.2,66.8 362.5,66.8 362.8,66.6 363.2,68.7 363.5,66.7 363.9,63.7 364.2,70.2 364.5,70.0 364.9,70.6 365.2,69.3 365.5,71.4 365.9,67.7 366.2,66.6 366.6,64.8 366.9,64.1 367.2,69.9 367.6,67.7 367.9,72.2 368.3,68.2 368.6,68.0 368.9,65.4 369.3,68.9 369.6,76.3 370.0,60.7 370.3,69.7 370.6,80.6 371.0,84.1 371.3,62.2 371.6,85.5 372.0,53.5 372.3,54.2 372.7,82.3 373.0,60.7 373.3,63.3 373.7,74.0 374.0,66.7 374.4,82.4 374.7,64.0 375.0,64.1 375.4,67.6 375.7,62.2 376.1,69.6 376.4,79.1 376.7,60.3 377.1,68.2 377.4,71.8 377.7,71.3 378.1,70.7 378.4,67.5 378.8,76.2 379.1,68.0 379.4,71.1 379.8,63.7 380.1,71.3 380.5,63.0 380.8,76.1 381.1,66.0 381.5,71.3 381.8,61.6 382.2,66.4 382.5,62.5 382.8,71.4 383.2,71.8 383.5,69.1 383.8,73.5 384.2,70.1 384.5,63.7 384.9,74.0 385.2,70.8 385.5,68.8 385.9,65.7 386.2,64.9 386.6,70.3 386.9,70.3 387.2,68.5 387.6,71.2 387.9,75.3 388.3,67.1 388.6,68.1 388.9,68.2 389.3,67.6 389.6,68.6 389.9,71.8 390.3,66.3 390.6,69.5 391.0,68.7" fill="none" stroke="#1a1aff" stroke-width="0.95" stroke-linejoin="miter"/><rect x="45.0" y="12.0" width="346.3" height="127.10000000000002" fill="none" stroke="#727272" stroke-width="1.5"/><rect x="294.50" y="20.00" width="14.5" height="11.5" fill="#fff" stroke="#ccc" stroke-width="1"/><rect x="296.50" y="22.00" width="10.5" height="7.5" fill="#00f"/><path d="M389.80 3.00L399.50 12.70L389.80 22.40L380.10 12.70Z" fill="#f00"/></svg>
<div class="t" style="left:134.41px;top:496.65px;font:12.6px/12.6px 'Liberation Serif', serif;color:#545454;">6000</div>
<div class="t" style="left:134.41px;top:460.36px;font:12.6px/12.6px 'Liberation Serif', serif;color:#545454;">7000</div>
<div class="t" style="left:134.41px;top:424.06px;font:12.6px/12.6px 'Liberation Serif', serif;color:#545454;">8000</div>
<div class="t" style="left:134.41px;top:387.77px;font:12.6px/12.6px 'Liberation Serif', serif;color:#545454;">9000</div>
<div class="t" style="left:161.35px;top:506.95px;font:12.6px/12.6px 'Liberation Serif', serif;color:#545454;">0</div>
<div class="t" style="left:222.82px;top:506.95px;font:12.6px/12.6px 'Liberation Serif', serif;color:#545454;">200</div>
<div class="t" style="left:290.59px;top:506.95px;font:12.6px/12.6px 'Liberation Serif', serif;color:#545454;">400</div>
<div class="t" style="left:358.36px;top:506.95px;font:12.6px/12.6px 'Liberation Serif', serif;color:#545454;">600</div>
<div class="t" style="left:426.13px;top:506.95px;font:12.6px/12.6px 'Liberation Serif', serif;color:#545454;">800</div>
<div class="t" style="left:490.75px;top:506.95px;font:12.6px/12.6px 'Liberation Serif', serif;color:#545454;">1000</div>
<div class="t" style="left:431.50px;top:383.80px;font:12.3px/12.3px 'Liberation Serif', serif;color:#8a8a8a;transform:scaleX(1.0697);">aida01 1.8.W</div>
<svg style="left:753.8px;top:364.2px" width="416.0" height="167.10000000000002"><line x1="112.71" y1="12.0" x2="112.71" y2="139.10000000000002" stroke="#ebebeb" stroke-width="1"/><line x1="180.42" y1="12.0" x2="180.42" y2="139.10000000000002" stroke="#ebebeb" stroke-width="1"/><line x1="248.13" y1="12.0" x2="248.13" y2="139.10000000000002" stroke="#ebebeb" stroke-width="1"/><line x1="315.84" y1="12.0" x2="315.84" y2="139.10000000000002" stroke="#ebebeb" stroke-width="1"/><line x1="383.55" y1="12.0" x2="383.55" y2="139.10000000000002" stroke="#ebebeb" stroke-width="1"/><line x1="45.0" y1="100.49" x2="391.0" y2="100.49" stroke="#ebebeb" stroke-width="1"/><line x1="45.0" y1="61.88" x2="391.0" y2="61.88" stroke="#ebebeb" stroke-width="1"/><line x1="45.0" y1="23.27" x2="391.0" y2="23.27" stroke="#ebebeb" stroke-width="1"/><polyline points="45.0,63.3 45.3,66.2 45.7,61.5 46.0,74.2 46.4,71.4 46.7,59.6 47.0,63.9 47.4,63.4 47.7,70.6 48.0,67.5 48.4,66.5 48.7,65.8 49.1,63.1 49.4,66.8 49.7,65.2 50.1,67.0 50.4,65.9 50.8,64.7 51.1,64.6 51.4,63.4 51.8,68.0 52.1,63.9 52.4,64.5 52.8,67.0 53.1,62.8 53.5,66.8 53.8,66.1 54.1,64.3 54.5,62.5 54.8,66.2 55.2,62.3 55.5,64.4 55.8,66.9 56.2,63.8 56.5,65.2 56.8,66.7 57.2,65.6 57.5,62.7 57.9,64.5 58.2,65.7 58.5,63.6 58.9,68.0 59.2,63.9 59.6,62.5 59.9,67.5 60.2,67.4 60.6,66.9 60.9,65.6 61.3,66.6 61.6,65.2 61.9,67.1 62.3,64.5 62.6,63.9 62.9,64.2 63.3,66.2 63.6,63.4 64.0,68.2 64.3,66.4 64.6,65.2 65.0,62.4 65.3,65.8 65.7,63.8 66.0,61.7 66.3,61.0 66.7,61.5 67.0,66.5 67.3,64.4 67.7,63.9 68.0,63.5 68.4,63.9 68.7,65.2 69.0,64.8 69.4,67.8 69.7,63.3 70.1,64.2 70.4,66.0 70.7,61.2 71.1,64.8 71.4,66.1 71.7,63.6 72.1,63.9 72.4,63.5 72.8,64.9 73.1,63.2 73.4,64.5 73.8,62.3 74.1,64.1 74.5,66.3 74.8,66.7 75.1,63.5 75.5,62.8 75.8,68.6 76.1,62.7 76.5,64.9 76.8,63.5 77.2,67.4 77.5,68.8 77.8,67.6 78.2,67.8 78.5,66.4 78.9,64.0 79.2,64.3 79.5,54.4 79.9,69.7 80.2,67.0 80.5,64.0 80.9,61.2 81.2,70.2 81.6,72.4 81.9,63.2 82.2,62.6 82.6,61.5 82.9,61.1 83.3,73.0 83.6,58.9 83.9,65.3 84.3,53.3 84.6,66.8 84.9,76.5 85.3,65.4 85.6,63.7 86.0,63.2 86.3,63.6 86.6,67.7 87.0,74.1 87.3,65.8 87.7,66.6 88.0,68.0 88.3,64.5 88.7,66.3 89.0,76.4 89.4,68.9 89.7,68.6 90.0,66.1 90.4,57.5 90.7,65.1 91.0,62.2 91.4,76.6 91.7,57.7 92.1,68.1 92.4,62.0 92.7,70.8 93.1,65.2 93.4,60.6 93.8,65.2 94.1,63.7 94.4,69.1 94.8,68.7 95.1,63.5 95.4,66.1 95.8,64.4 96.1,68.8 96.5,67.3 96.8,60.9 97.1,56.5 97.5,67.7 97.8,67.9 98.2,64.7 98.5,59.9 98.8,63.9 99.2,60.4 99.5,66.1 99.8,69.8 100.2,75.8 100.5,61.5 100.9,64.4 101.2,67.4 101.5,64.2 101.9,68.2 102.2,62.4 102.6,62.3 102.9,61.9 103.2,66.6 103.6,61.1 103.9,63.0 104.2,61.2 104.6,70.3 104.9,62.5 105.3,61.3 105.6,66.4 105.9,62.6 106.3,65.1 106.6,61.5 107.0,66.2 107.3,65.3 107.6,71.4 108.0,54.2 108.3,70.0 108.6,70.4 109.0,70.0 109.3,65.1 109.7,65.2 110.0,63.7 110.3,57.9 110.7,60.2 111.0,74.5 111.4,64.3 111.7,66.8 112.0,60.1 112.4,64.5 112.7,53.5 113.0,64.2 113.4,43.4 113.7,76.9 114.1,50.1 114.4,46.2 114.7,75.5 115.1,83.6 115.4,74.2 115.8,61.2 116.1,47.3 116.4,80.3 116.8,68.0 117.1,75.3 117.5,60.2 117.8,64.6 118.1,65.5 118.5,60.9 118.8,64.3 119.1,57.4 119.5,67.4 119.8,69.1 120.2,65.8 120.5,66.0 120.8,58.8 121.2,68.0 121.5,68.7 121.9,69.4 122.2,70.0 122.5,76.5 122.9,65.2 123.2,63.2 123.5,65.0 123.9,68.9 124.2,62.5 124.6,63.4 124.9,65.2 125.2,64.5 125.6,66.3 125.9,65.2 126.3,65.0 126.6,68.9 126.9,67.3 127.3,67.7 127.6,65.3 127.9,71.3 128.3,65.4 128.6,66.2 129.0,66.7 129.3,65.0 129.6,70.5 130.0,65.4 130.3,68.4 130.7,68.0 131.0,62.9 131.3,67.1 131.7,62.7 132.0,66.4 132.3,67.2 132.7,67.4 133.0,69.3 133.4,67.4 133.7,65.8 134.0,60.4 134.4,63.0 134.7,62.7 135.1,71.3 135.4,69.6 135.7,64.8 136.1,64.4 136.4,70.2 136.7,62.2 137.1,68.6 137.4,65.7 137.8,67.6 138.1,64.5 138.4,63.7 138.8,62.8 139.1,70.6 139.5,65.8 139.8,55.8 140.1,66.4 140.5,64.2 140.8,66.0 141.1,68.9 141.5,59.5 141.8,60.5 142.2,68.8 142.5,64.3 142.8,58.8 143.2,64.8 143.5,66.3 143.9,63.2 144.2,63.7 144.5,69.8 144.9,68.5 145.2,62.7 145.5,68.4 145.9,66.8 146.2,68.4 146.6,61.9 146.9,69.1 147.2,66.3 147.6,67.4 147.9,67.2 148.3,69.0 148.6,68.1 148.9,66.9 149.3,65.9 149.6,70.1 150.0,66.2 150.3,68.1 150.6,66.4 151.0,67.2 151.3,66.6 151.6,66.9 152.0,64.7 152.3,66.1 152.7,71.2 153.0,71.4 153.3,69.0 153.7,65.5 154.0,70.1 154.4,68.6 154.7,61.2 155.0,66.7 155.4,66.4 155.7,65.0 156.0,63.8 156.4,67.7 156.7,65.3 157.1,72.6 157.4,64.6 157.7,64.1 158.1,70.9 158.4,61.9 158.8,56.8 159.1,79.0 159.4,66.4 159.8,58.9 160.1,62.8 160.4,67.9 160.8,67.8 161.1,67.4 161.5,61.6 161.8,69.9 162.1,70.9 162.5,64.7 162.8,67.8 163.2,60.6 163.5,67.3 163.8,64.4 164.2,65.5 164.5,68.7 164.8,66.2 165.2,70.0 165.5,63.7 165.9,68.5 166.2,70.1 166.5,73.0 166.9,57.5 167.2,62.5 167.6,68.4 167.9,65.2 168.2,62.8 168.6,63.0 168.9,64.6 169.2,72.1 169.6,59.2 169.9,64.9 170.3,58.9 170.6,69.6 170.9,60.7 171.3,58.6 171.6,60.1 172.0,68.6 172.3,64.9 172.6,59.7 173.0,66.4 173.3,61.8 173.6,64.6 174.0,68.4 174.3,61.1 174.7,60.7 175.0,61.9 175.3,63.2 175.7,61.4 176.0,67.9 176.4,63.9 176.7,60.3 177.0,62.8 177.4,61.5 177.7,64.2 178.1,63.0 178.4,66.0 178.7,62.5 179.1,63.0 179.4,64.3 179.7,63.5 180.1,63.3 180.4,63.0 180.8,61.9 181.1,61.4 181.4,69.1 181.8,62.7 182.1,59.0 182.5,67.7 182.8,64.3 183.1,54.6 183.5,66.1 183.8,60.1 184.1,62.8 184.5,68.3 184.8,64.6 185.2,71.9 185.5,65.0 185.8,61.2 186.2,61.8 186.5,62.8 186.9,65.6 187.2,61.5 187.5,59.1 187.9,60.7 188.2,58.8 188.5,61.9 188.9,61.8 189.2,68.3 189.6,57.6 189.9,68.8 190.2,67.2 190.6,66.1 190.9,66.6 191.3,60.4 191.6,64.9 191.9,65.3 192.3,65.3 192.6,64.2 192.9,60.8 193.3,60.1 193.6,65.4 194.0,58.6 194.3,62.5 194.6,63.3 195.0,59.5 195.3,63.9 195.7,62.9 196.0,63.7 196.3,70.5 196.7,71.3 197.0,70.0 197.3,69.7 197.7,68.0 198.0,67.6 198.4,58.8 198.7,64.5 199.0,60.1 199.4,62.8 199.7,69.2 200.1,66.0 200.4,71.7 200.7,74.4 201.1,63.1 201.4,65.0 201.7,64.6 202.1,61.8 202.4,69.0 202.8,65.4 203.1,71.3 203.4,67.3 203.8,63.0 204.1,70.7 204.5,70.5 204.8,66.5 205.1,58.3 205.5,61.9 205.8,66.0 206.2,62.5 206.5,64.8 206.8,67.3 207.2,68.3 207.5,63.0 207.8,66.0 208.2,61.6 208.5,67.8 208.9,62.5 209.2,67.2 209.5,60.1 209.9,60.9 210.2,69.0 210.6,55.9 210.9,64.0 211.2,68.1 211.6,69.0 211.9,65.3 212.2,65.3 212.6,67.9 212.9,68.6 213.3,66.8 213.6,68.9 213.9,67.7 214.3,67.9 214.6,64.6 215.0,71.6 215.3,59.3 215.6,66.8 216.0,65.7 216.3,68.2 216.6,63.3 217.0,65.8 217.3,66.2 217.7,67.2 218.0,64.1 218.3,64.3 218.7,66.6 219.0,59.8 219.4,69.5 219.7,58.7 220.0,64.3 220.4,72.7 220.7,66.2 221.0,62.6 221.4,67.0 221.7,64.6 222.1,65.4 222.4,63.0 222.7,68.4 223.1,55.3 223.4,63.1 223.8,57.4 224.1,65.9 224.4,63.7 224.8,69.8 225.1,64.5 225.4,56.4 225.8,62.9 226.1,68.6 226.5,67.6 226.8,61.3 227.1,65.4 227.5,53.6 227.8,63.2 228.2,64.2 228.5,60.3 228.8,55.3 229.2,72.1 229.5,66.9 229.8,67.2 230.2,74.0 230.5,65.0 230.9,64.6 231.2,58.7 231.5,59.6 231.9,59.0 232.2,58.9 232.6,67.7 232.9,37.1 233.2,46.9 233.6,67.7 233.9,75.2 234.3,57.4 234.6,49.9 234.9,57.0 235.3,43.2 235.6,48.3 235.9,82.2 236.3,76.0 236.6,69.5 237.0,83.4 237.3,54.7 237.6,68.0 238.0,62.1 238.3,49.6 238.7,68.1 239.0,63.2 239.3,66.3 239.7,69.7 240.0,59.7 240.3,63.3 240.7,63.2 241.0,60.8 241.4,63.5 241.7,61.5 242.0,59.6 242.4,64.8 242.7,61.6 243.1,62.4 243.4,60.0 243.7,56.8 244.1,64.8 244.4,59.6 244.7,62.4 245.1,61.3 245.4,61.8 245.8,62.9 246.1,66.1 246.4,62.5 246.8,64.4 247.1,59.2 247.5,61.3 247.8,63.8 248.1,63.2 248.5,60.1 248.8,65.9 249.1,61.7 249.5,61.7 249.8,66.8 250.2,58.3 250.5,64.2 250.8,58.0 251.2,61.6 251.5,65.9 251.9,63.2 252.2,57.6 252.5,66.9 252.9,65.9 253.2,63.2 253.5,60.7 253.9,60.9 254.2,65.9 254.6,66.4 254.9,63.3 255.2,63.6 255.6,62.3 255.9,67.2 256.3,64.4 256.6,66.5 256.9,59.1 257.3,69.4 257.6,66.4 257.9,65.0 258.3,69.1 258.6,64.6 259.0,65.5 259.3,67.1 259.6,64.5 260.0,60.6 260.3,63.3 260.7,60.6 261.0,60.6 261.3,63.3 261.7,64.6 262.0,72.0 262.4,70.5 262.7,63.2 263.0,63.6 263.4,63.2 263.7,67.7 264.0,65.1 264.4,67.5 264.7,61.6 265.1,63.7 265.4,69.9 265.7,65.7 266.1,60.3 266.4,67.7 266.8,67.5 267.1,68.3 267.4,66.6 267.8,63.9 268.1,65.2 268.4,63.7 268.8,67.3 269.1,61.5 269.5,59.1 269.8,67.4 270.1,63.6 270.5,63.5 270.8,64.0 271.2,64.8 271.5,63.2 271.8,65.4 272.2,67.4 272.5,67.8 272.8,61.9 273.2,66.3 273.5,69.2 273.9,65.9 274.2,65.9 274.5,63.0 274.9,63.0 275.2,67.2 275.6,62.3 275.9,64.0 276.2,60.4 276.6,66.8 276.9,62.5 277.2,61.7 277.6,59.0 277.9,70.0 278.3,65.4 278.6,65.0 278.9,66.1 279.3,69.2 279.6,66.6 280.0,65.1 280.3,55.1 280.6,65.3 281.0,60.0 281.3,68.4 281.6,64.4 282.0,65.8 282.3,65.3 282.7,72.2 283.0,65.7 283.3,56.4 283.7,65.7 284.0,71.7 284.4,53.3 284.7,63.3 285.0,64.0 285.4,72.4 285.7,66.7 286.0,66.5 286.4,66.2 286.7,68.4 287.1,63.9 287.4,69.5 287.7,62.9 288.1,65.7 288.4,66.5 288.8,68.7 289.1,64.9 289.4,64.9 289.8,68.8 290.1,61.7 290.5,66.3 290.8,69.1 291.1,63.0 291.5,67.8 291.8,67.4 292.1,68.5 292.5,67.6 292.8,66.4 293.2,69.0 293.5,65.0 293.8,68.7 294.2,66.0 294.5,73.5 294.9,67.0 295.2,65.9 295.5,64.3 295.9,66.8 296.2,65.4 296.5,64.7 296.9,69.1 297.2,63.4 297.6,64.8 297.9,68.3 298.2,70.3 298.6,62.1 298.9,62.1 299.3,65.2 299.6,62.3 299.9,61.2 300.3,66.1 300.6,63.8 300.9,63.3 301.3,63.7 301.6,66.5 302.0,68.2 302.3,61.8 302.6,64.8 303.0,59.5 303.3,64.1 303.7,65.5 304.0,69.8 304.3,66.2 304.7,64.9 305.0,66.3 305.3,68.6 305.7,79.6 306.0,70.0 306.4,65.2 306.7,59.8 307.0,70.2 307.4,63.9 307.7,70.5 308.1,61.3 308.4,67.1 308.7,65.8 309.1,64.1 309.4,68.7 309.7,68.6 310.1,61.9 310.4,71.3 310.8,69.8 311.1,62.0 311.4,62.4 311.8,69.1 312.1,68.9 312.5,65.4 312.8,59.0 313.1,61.4 313.5,66.7 313.8,66.9 314.1,66.0 314.5,71.3 314.8,64.8 315.2,67.0 315.5,62.3 315.8,69.1 316.2,64.5 316.5,68.1 316.9,68.1 317.2,58.9 317.5,70.5 317.9,66.6 318.2,63.0 318.5,48.4 318.9,62.6 319.2,71.6 319.6,62.3 319.9,45.2 320.2,57.7 320.6,84.3 320.9,35.7 321.3,76.0 321.6,54.8 321.9,72.1 322.3,57.6 322.6,63.0 323.0,62.7 323.3,64.5 323.6,64.3 324.0,80.6 324.3,72.4 324.6,54.9 325.0,65.2 325.3,66.3 325.7,62.5 326.0,60.6 326.3,64.7 326.7,61.0 327.0,63.2 327.4,68.0 327.7,64.9 328.0,61.7 328.4,70.1 328.7,65.5 329.0,68.6 329.4,66.6 329.7,70.3 330.1,65.5 330.4,67.2 330.7,63.1 331.1,66.4 331.4,61.6 331.8,63.4 332.1,67.2 332.4,61.6 332.8,65.5 333.1,64.9 333.4,68.2 333.8,65.9 334.1,67.0 334.5,68.3 334.8,67.9 335.1,63.0 335.5,66.8 335.8,65.8 336.2,67.3 336.5,66.6 336.8,66.8 337.2,66.0 337.5,65.7 337.8,64.0 338.2,65.9 338.5,66.0 338.9,67.5 339.2,64.6 339.5,64.9 339.9,66.4 340.2,69.4 340.6,66.0 340.9,69.9 341.2,62.9 341.6,65.7 341.9,63.3 342.2,66.2 342.6,64.1 342.9,62.5 343.3,64.2 343.6,67.9 343.9,68.9 344.3,66.9 344.6,65.5 345.0,68.2 345.3,69.7 345.6,67.2 346.0,66.3 346.3,70.4 346.6,66.4 347.0,64.3 347.3,68.5 347.7,65.7 348.0,66.3 348.3,65.4 348.7,65.4 349.0,69.3 349.4,64.4 349.7,59.4 350.0,65.0 350.4,70.3 350.7,67.3 351.1,57.3 351.4,67.0 351.7,65.7 352.1,71.2 352.4,71.9 352.7,66.6 353.1,64.9 353.4,68.9 353.8,64.8 354.1,68.5 354.4,77.3 354.8,68.1 355.1,63.0 355.5,51.0 355.8,77.5 356.1,64.2 356.5,63.8 356.8,62.7 357.1,65.6 357.5,49.5 357.8,53.2 358.2,48.6 358.5,78.1 358.8,80.8 359.2,83.6 359.5,65.5 359.9,58.9 360.2,71.7 360.5,68.9 360.9,71.5 361.2,65.4 361.5,63.3 361.9,71.4 362.2,61.4 362.6,70.6 362.9,65.7 363.2,64.5 363.6,70.9 363.9,67.1 364.3,69.2 364.6,62.4 364.9,66.3 365.3,70.9 365.6,63.1 365.9,67.5 366.3,56.9 366.6,66.5 367.0,62.5 367.3,70.1 367.6,66.9 368.0,66.7 368.3,61.0 368.7,58.7 369.0,65.3 369.3,66.6 369.7,70.7 370.0,69.5 370.3,66.5 370.7,60.0 371.0,58.4 371.4,66.1 371.7,67.5 372.0,68.7 372.4,62.6 372.7,60.9 373.1,63.2 373.4,59.6 373.7,65.2 374.1,66.6 374.4,64.7 374.7,70.0 375.1,66.3 375.4,67.8 375.8,74.5 376.1,65.3 376.4,62.4 376.8,58.6 377.1,66.2 377.5,59.2 377.8,69.8 378.1,58.8 378.5,68.8 378.8,65.9 379.2,72.7 379.5,57.4 379.8,66.7 380.2,61.8 380.5,65.3 380.8,64.3 381.2,62.2 381.5,70.2 381.9,63.3 382.2,67.0 382.5,70.6 382.9,60.8 383.2,65.7 383.6,58.0 383.9,64.4 384.2,66.6 384.6,67.2 384.9,64.9 385.2,67.7 385.6,60.5 385.9,68.1 386.3,57.5 386.6,66.9 386.9,65.2 387.3,67.0 387.6,55.4 388.0,71.5 388.3,61.6 388.6,59.6 389.0,58.5 389.3,55.1 389.6,58.0 390.0,72.1 390.3,64.0 390.7,70.0" fill="none" stroke="#1a1aff" stroke-width="0.95" stroke-linejoin="miter"/><rect x="45.0" y="12.0" width="346.0" height="127.10000000000002" fill="none" stroke="#727272" stroke-width="1.5"/><rect x="294.20" y="20.00" width="14.5" height="11.5" fill="#fff" stroke="#ccc" stroke-width="1"/><rect x="296.20" y="22.00" width="10.5" height="7.5" fill="#00f"/><path d="M389.50 3.00L399.20 12.70L389.50 22.40L379.80 12.70Z" fill="#f00"/></svg>
<div class="t" style="left:769.71px;top:496.65px;font:12.6px/12.6px 'Liberation Serif', serif;color:#545454;">6000</div>
<div class="t" style="left:769.71px;top:458.04px;font:12.6px/12.6px 'Liberation Serif', serif;color:#545454;">7000</div>
<div class="t" style="left:769.71px;top:419.43px;font:12.6px/12.6px 'Liberation Serif', serif;color:#545454;">8000</div>
<div class="t" style="left:769.71px;top:380.82px;font:12.6px/12.6px 'Liberation Serif', serif;color:#545454;">9000</div>
<div class="t" style="left:796.65px;top:506.95px;font:12.6px/12.6px 'Liberation Serif', serif;color:#545454;">0</div>
<div class="t" style="left:858.07px;top:506.95px;font:12.6px/12.6px 'Liberation Serif', serif;color:#545454;">200</div>
<div class="t" style="left:925.78px;top:506.95px;font:12.6px/12.6px 'Liberation Serif', serif;color:#545454;">400</div>
<div class="t" style="left:993.49px;top:506.95px;font:12.6px/12.6px 'Liberation Serif', serif;color:#545454;">600</div>
<div class="t" style="left:1061.20px;top:506.95px;font:12.6px/12.6px 'Liberation Serif', serif;color:#545454;">800</div>
<div class="t" style="left:1125.76px;top:506.95px;font:12.6px/12.6px 'Liberation Serif', serif;color:#545454;">1000</div>
<div class="t" style="left:1066.50px;top:383.80px;font:12.3px/12.3px 'Liberation Serif', serif;color:#8a8a8a;transform:scaleX(1.0697);">aida02 1.8.W</div>
<svg style="left:1382.2px;top:364.2px" width="422.5999999999999" height="167.10000000000002"><line x1="114.00" y1="12.0" x2="114.00" y2="139.10000000000002" stroke="#ebebeb" stroke-width="1"/><line x1="183.00" y1="12.0" x2="183.00" y2="139.10000000000002" stroke="#ebebeb" stroke-width="1"/><line x1="252.01" y1="12.0" x2="252.01" y2="139.10000000000002" stroke="#ebebeb" stroke-width="1"/><line x1="321.01" y1="12.0" x2="321.01" y2="139.10000000000002" stroke="#ebebeb" stroke-width="1"/><line x1="390.01" y1="12.0" x2="390.01" y2="139.10000000000002" stroke="#ebebeb" stroke-width="1"/><line x1="45.0" y1="117.55" x2="397.5999999999999" y2="117.55" stroke="#ebebeb" stroke-width="1"/><line x1="45.0" y1="96.00" x2="397.5999999999999" y2="96.00" stroke="#ebebeb" stroke-width="1"/><line x1="45.0" y1="74.45" x2="397.5999999999999" y2="74.45" stroke="#ebebeb" stroke-width="1"/><line x1="45.0" y1="52.90" x2="397.5999999999999" y2="52.90" stroke="#ebebeb" stroke-width="1"/><line x1="45.0" y1="31.35" x2="397.5999999999999" y2="31.35" stroke="#ebebeb" stroke-width="1"/><polyline points="45.0,68.9 45.3,63.4 45.7,60.5 46.0,67.5 46.4,63.0 46.7,70.5 47.1,68.8 47.4,56.9 47.8,66.6 48.1,64.4 48.5,73.0 48.8,66.3 49.1,69.4 49.5,61.7 49.8,67.9 50.2,58.3 50.5,68.7 50.9,65.4 51.2,69.0 51.6,66.5 51.9,64.0 52.2,66.0 52.6,67.8 52.9,65.0 53.3,64.2 53.6,65.0 54.0,63.8 54.3,67.8 54.7,62.7 55.0,64.4 55.4,68.6 55.7,62.5 56.0,66.0 56.4,64.5 56.7,68.2 57.1,66.1 57.4,67.9 57.8,63.8 58.1,65.4 58.5,66.4 58.8,65.6 59.1,63.0 59.5,66.2 59.8,64.0 60.2,66.6 60.5,67.3 60.9,65.4 61.2,65.1 61.6,64.4 61.9,63.1 62.3,65.2 62.6,65.2 62.9,63.6 63.3,64.1 63.6,65.0 64.0,64.6 64.3,68.4 64.7,66.0 65.0,67.7 65.4,65.9 65.7,64.0 66.0,68.1 66.4,64.2 66.7,66.5 67.1,66.1 67.4,66.6 67.8,64.6 68.1,67.0 68.5,69.9 68.8,65.5 69.2,66.6 69.5,65.0 69.8,65.2 70.2,69.8 70.5,66.1 70.9,66.4 71.2,67.0 71.6,66.7 71.9,66.2 72.3,68.3 72.6,67.6 72.9,65.1 73.3,69.0 73.6,67.6 74.0,69.2 74.3,69.4 74.7,68.4 75.0,67.5 75.4,65.1 75.7,68.4 76.1,66.1 76.4,67.0 76.7,68.0 77.1,76.4 77.4,68.1 77.8,68.3 78.1,73.0 78.5,68.2 78.8,63.9 79.2,72.8 79.5,70.6 79.8,66.4 80.2,73.7 80.5,71.7 80.9,68.2 81.2,66.3 81.6,65.8 81.9,66.9 82.3,61.7 82.6,67.9 83.0,74.9 83.3,70.3 83.6,66.7 84.0,67.9 84.3,77.6 84.7,67.9 85.0,73.8 85.4,70.7 85.7,62.0 86.1,70.6 86.4,73.1 86.7,70.4 87.1,73.0 87.4,60.5 87.8,66.2 88.1,65.9 88.5,73.2 88.8,73.1 89.2,69.0 89.5,80.3 89.9,65.5 90.2,76.2 90.5,69.9 90.9,68.8 91.2,74.0 91.6,68.9 91.9,67.4 92.3,62.1 92.6,68.9 93.0,62.3 93.3,68.6 93.6,71.6 94.0,67.3 94.3,72.8 94.7,70.3 95.0,68.5 95.4,66.6 95.7,70.0 96.1,76.4 96.4,66.0 96.8,70.5 97.1,72.1 97.4,73.8 97.8,68.9 98.1,69.7 98.5,68.7 98.8,71.3 99.2,66.1 99.5,71.5 99.9,69.4 100.2,70.0 100.5,67.4 100.9,72.7 101.2,71.5 101.6,71.1 101.9,72.3 102.3,72.4 102.6,73.2 103.0,68.5 103.3,66.3 103.7,73.1 104.0,68.4 104.3,73.0 104.7,71.9 105.0,70.8 105.4,69.7 105.7,68.8 106.1,74.5 106.4,72.7 106.8,69.7 107.1,70.3 107.4,64.8 107.8,70.4 108.1,71.3 108.5,65.4 108.8,78.7 109.2,77.3 109.5,60.9 109.9,70.9 110.2,69.2 110.6,69.9 110.9,71.8 111.2,69.7 111.6,71.8 111.9,67.5 112.3,67.9 112.6,68.0 113.0,70.8 113.3,72.8 113.7,70.0 114.0,71.0 114.3,68.2 114.7,72.0 115.0,70.6 115.4,68.4 115.7,67.6 116.1,68.3 116.4,75.2 116.8,73.9 117.1,48.3 117.5,55.7 117.8,81.6 118.1,42.6 118.5,70.6 118.8,91.9 119.2,76.9 119.5,57.9 119.9,67.7 120.2,68.5 120.6,70.5 120.9,70.9 121.2,67.5 121.6,68.0 121.9,64.5 122.3,69.8 122.6,68.7 123.0,66.1 123.3,66.4 123.7,69.1 124.0,63.9 124.4,66.0 124.7,65.0 125.0,66.6 125.4,64.8 125.7,68.4 126.1,67.8 126.4,65.1 126.8,66.5 127.1,66.5 127.5,64.2 127.8,66.7 128.1,66.1 128.5,72.5 128.8,68.3 129.2,64.8 129.5,69.4 129.9,67.7 130.2,66.2 130.6,67.4 130.9,63.7 131.3,64.8 131.6,67.5 131.9,62.5 132.3,68.3 132.6,69.4 133.0,65.5 133.3,64.6 133.7,67.4 134.0,70.4 134.4,68.8 134.7,66.0 135.0,64.2 135.4,59.7 135.7,67.6 136.1,67.9 136.4,75.1 136.8,63.1 137.1,63.8 137.5,67.1 137.8,69.3 138.2,75.4 138.5,65.4 138.8,68.9 139.2,63.7 139.5,65.8 139.9,64.8 140.2,67.5 140.6,65.1 140.9,69.7 141.3,64.8 141.6,67.4 141.9,69.2 142.3,68.1 142.6,69.3 143.0,67.0 143.3,68.7 143.7,70.2 144.0,68.2 144.4,68.1 144.7,67.1 145.1,66.1 145.4,64.3 145.7,66.3 146.1,61.3 146.4,75.4 146.8,67.8 147.1,65.4 147.5,70.3 147.8,68.1 148.2,67.4 148.5,70.9 148.8,69.1 149.2,66.2 149.5,68.5 149.9,63.8 150.2,61.9 150.6,67.8 150.9,70.7 151.3,67.7 151.6,69.1 152.0,72.7 152.3,69.0 152.6,69.5 153.0,69.0 153.3,63.7 153.7,64.1 154.0,65.9 154.4,68.7 154.7,66.0 155.1,67.3 155.4,66.7 155.7,69.8 156.1,73.9 156.4,65.2 156.8,68.7 157.1,68.1 157.5,67.3 157.8,67.3 158.2,67.7 158.5,64.9 158.9,67.0 159.2,66.7 159.5,68.7 159.9,67.3 160.2,66.0 160.6,67.2 160.9,66.4 161.3,69.0 161.6,66.3 162.0,69.3 162.3,68.1 162.6,69.2 163.0,66.3 163.3,63.4 163.7,66.0 164.0,69.3 164.4,66.5 164.7,64.8 165.1,65.5 165.4,66.0 165.8,68.4 166.1,67.6 166.4,67.9 166.8,67.6 167.1,66.4 167.5,66.9 167.8,68.0 168.2,65.6 168.5,68.5 168.9,67.9 169.2,66.9 169.5,70.8 169.9,69.7 170.2,72.1 170.6,70.7 170.9,67.9 171.3,67.8 171.6,66.8 172.0,66.9 172.3,70.4 172.7,64.1 173.0,64.6 173.3,70.2 173.7,69.1 174.0,68.8 174.4,67.4 174.7,66.8 175.1,67.9 175.4,73.3 175.8,61.7 176.1,66.2 176.4,65.8 176.8,71.0 177.1,67.8 177.5,64.5 177.8,70.2 178.2,65.1 178.5,68.1 178.9,63.3 179.2,68.3 179.6,65.5 179.9,72.0 180.2,65.1 180.6,67.7 180.9,69.5 181.3,67.1 181.6,69.2 182.0,67.6 182.3,67.4 182.7,66.8 183.0,65.2 183.3,66.8 183.7,65.1 184.0,67.7 184.4,68.5 184.7,68.0 185.1,68.7 185.4,71.7 185.8,68.1 186.1,71.3 186.5,69.2 186.8,69.4 187.1,70.0 187.5,72.0 187.8,68.0 188.2,68.4 188.5,63.0 188.9,65.6 189.2,64.4 189.6,70.0 189.9,69.1 190.2,71.8 190.6,70.9 190.9,65.5 191.3,68.4 191.6,68.3 192.0,69.5 192.3,62.0 192.7,67.9 193.0,63.3 193.4,67.8 193.7,64.4 194.0,70.6 194.4,72.7 194.7,62.8 195.1,68.7 195.4,66.2 195.8,63.6 196.1,64.3 196.5,66.1 196.8,72.3 197.1,69.8 197.5,67.0 197.8,64.3 198.2,65.1 198.5,65.9 198.9,69.1 199.2,66.9 199.6,62.5 199.9,70.4 200.3,69.0 200.6,63.2 200.9,61.1 201.3,65.2 201.6,66.5 202.0,69.5 202.3,66.8 202.7,68.9 203.0,66.0 203.4,64.2 203.7,64.8 204.0,61.0 204.4,70.4 204.7,71.3 205.1,60.2 205.4,61.5 205.8,70.2 206.1,65.3 206.5,70.9 206.8,66.0 207.2,64.5 207.5,61.7 207.8,70.0 208.2,71.6 208.5,62.7 208.9,67.5 209.2,57.7 209.6,71.4 209.9,68.9 210.3,78.4 210.6,59.8 210.9,58.3 211.3,63.1 211.6,66.9 212.0,75.4 212.3,72.0 212.7,67.8 213.0,56.1 213.4,61.0 213.7,67.9 214.1,63.2 214.4,62.7 214.7,62.9 215.1,68.7 215.4,66.7 215.8,60.4 216.1,61.6 216.5,66.2 216.8,53.7 217.2,63.5 217.5,66.1 217.8,61.0 218.2,62.0 218.5,65.2 218.9,58.1 219.2,61.5 219.6,64.8 219.9,63.0 220.3,63.3 220.6,65.9 221.0,63.5 221.3,66.4 221.6,65.8 222.0,63.7 222.3,68.5 222.7,66.3 223.0,68.1 223.4,64.2 223.7,67.0 224.1,61.8 224.4,63.0 224.8,67.1 225.1,65.7 225.4,66.6 225.8,66.1 226.1,65.0 226.5,63.8 226.8,62.8 227.2,63.4 227.5,68.4 227.9,67.2 228.2,66.8 228.5,67.1 228.9,66.4 229.2,65.7 229.6,67.5 229.9,67.8 230.3,63.3 230.6,65.6 231.0,62.6 231.3,68.2 231.7,64.8 232.0,64.6 232.3,65.2 232.7,68.6 233.0,66.5 233.4,68.8 233.7,69.4 234.1,67.6 234.4,66.8 234.8,68.1 235.1,68.0 235.4,66.7 235.8,69.2 236.1,67.2 236.5,66.5 236.8,66.8 237.2,67.0 237.5,70.7 237.9,69.0 238.2,69.6 238.6,66.6 238.9,73.4 239.2,68.3 239.6,73.5 239.9,67.0 240.3,70.3 240.6,68.8 241.0,66.2 241.3,63.9 241.7,72.2 242.0,68.8 242.3,76.3 242.7,70.1 243.0,72.3 243.4,66.3 243.7,70.0 244.1,69.1 244.4,74.2 244.8,71.1 245.1,74.7 245.5,69.7 245.8,77.9 246.1,68.7 246.5,64.3 246.8,54.1 247.2,61.1 247.5,62.8 247.9,66.0 248.2,61.3 248.6,70.6 248.9,68.4 249.2,80.9 249.6,73.4 249.9,64.3 250.3,79.8 250.6,69.2 251.0,71.1 251.3,72.8 251.7,69.3 252.0,71.0 252.4,76.6 252.7,71.4 253.0,80.0 253.4,63.1 253.7,71.0 254.1,66.0 254.4,75.6 254.8,62.2 255.1,65.9 255.5,69.1 255.8,69.7 256.1,69.1 256.5,73.3 256.8,71.2 257.2,71.5 257.5,68.5 257.9,62.6 258.2,65.2 258.6,69.1 258.9,67.8 259.3,71.1 259.6,71.7 259.9,75.6 260.3,74.2 260.6,73.4 261.0,70.1 261.3,70.3 261.7,68.7 262.0,66.8 262.4,68.0 262.7,70.1 263.0,71.1 263.4,70.4 263.7,68.2 264.1,71.8 264.4,72.7 264.8,69.8 265.1,67.8 265.5,67.5 265.8,68.3 266.2,72.7 266.5,69.6 266.8,67.8 267.2,66.4 267.5,64.1 267.9,71.8 268.2,68.0 268.6,74.0 268.9,69.6 269.3,70.2 269.6,66.9 269.9,68.4 270.3,72.9 270.6,68.9 271.0,67.5 271.3,64.2 271.7,70.5 272.0,70.6 272.4,70.3 272.7,64.3 273.1,69.3 273.4,67.8 273.7,66.2 274.1,71.3 274.4,63.5 274.8,74.0 275.1,62.6 275.5,69.8 275.8,70.0 276.2,69.7 276.5,70.6 276.8,69.6 277.2,69.4 277.5,70.4 277.9,67.6 278.2,66.5 278.6,68.5 278.9,66.6 279.3,68.6 279.6,66.5 280.0,67.4 280.3,68.5 280.6,66.6 281.0,66.9 281.3,67.7 281.7,66.6 282.0,65.7 282.4,68.3 282.7,67.1 283.1,65.3 283.4,66.2 283.7,64.7 284.1,62.5 284.4,68.1 284.8,65.4 285.1,66.6 285.5,63.4 285.8,64.8 286.2,68.3 286.5,63.2 286.9,65.6 287.2,66.5 287.5,65.7 287.9,65.3 288.2,67.8 288.6,67.0 288.9,61.6 289.3,69.1 289.6,67.9 290.0,63.3 290.3,69.9 290.6,66.9 291.0,65.0 291.3,69.7 291.7,67.5 292.0,70.0 292.4,67.2 292.7,65.2 293.1,66.4 293.4,65.6 293.8,65.4 294.1,64.4 294.4,69.4 294.8,66.3 295.1,62.2 295.5,67.4 295.8,67.5 296.2,66.8 296.5,69.8 296.9,64.6 297.2,67.0 297.5,67.7 297.9,64.0 298.2,62.1 298.6,72.9 298.9,69.2 299.3,68.3 299.6,73.0 300.0,65.1 300.3,61.4 300.7,64.7 301.0,63.6 301.3,73.4 301.7,69.0 302.0,71.1 302.4,65.4 302.7,68.0 303.1,68.1 303.4,66.7 303.8,66.2 304.1,64.6 304.4,65.4 304.8,65.9 305.1,72.2 305.5,64.4 305.8,67.8 306.2,71.6 306.5,67.8 306.9,68.6 307.2,68.4 307.6,66.1 307.9,71.8 308.2,66.7 308.6,65.5 308.9,71.2 309.3,64.9 309.6,70.4 310.0,71.1 310.3,65.7 310.7,68.7 311.0,74.0 311.3,70.1 311.7,67.6 312.0,69.6 312.4,69.6 312.7,68.9 313.1,69.0 313.4,70.6 313.8,71.1 314.1,68.0 314.5,66.7 314.8,76.5 315.1,68.0 315.5,66.7 315.8,72.5 316.2,64.1 316.5,75.1 316.9,66.0 317.2,64.5 317.6,65.8 317.9,75.6 318.2,69.4 318.6,72.8 318.9,68.5 319.3,64.7 319.6,68.5 320.0,63.8 320.3,75.8 320.7,72.5 321.0,71.7 321.4,67.5 321.7,65.8 322.0,72.5 322.4,73.2 322.7,65.8 323.1,74.7 323.4,68.0 323.8,72.3 324.1,69.6 324.5,62.8 324.8,70.1 325.1,69.0 325.5,72.1 325.8,67.3 326.2,64.3 326.5,67.2 326.9,73.2 327.2,67.6 327.6,62.6 327.9,73.1 328.3,69.2 328.6,72.2 328.9,71.0 329.3,72.8 329.6,74.3 330.0,65.9 330.3,68.5 330.7,79.4 331.0,73.4 331.4,72.0 331.7,74.1 332.0,67.0 332.4,68.9 332.7,65.5 333.1,75.7 333.4,72.1 333.8,70.2 334.1,69.7 334.5,69.5 334.8,71.5 335.2,68.0 335.5,57.1 335.8,71.9 336.2,77.9 336.5,65.2 336.9,72.9 337.2,61.8 337.6,60.3 337.9,56.3 338.3,65.8 338.6,76.9 338.9,57.4 339.3,62.1 339.6,59.4 340.0,66.2 340.3,68.2 340.7,66.5 341.0,75.0 341.4,63.0 341.7,68.3 342.1,68.2 342.4,65.6 342.7,68.5 343.1,64.5 343.4,67.9 343.8,61.6 344.1,63.9 344.5,65.0 344.8,65.7 345.2,66.2 345.5,67.1 345.8,69.5 346.2,67.1 346.5,67.5 346.9,67.0 347.2,66.0 347.6,69.1 347.9,68.1 348.3,67.1 348.6,66.8 349.0,64.6 349.3,62.0 349.6,66.2 350.0,65.0 350.3,65.9 350.7,65.5 351.0,63.2 351.4,65.6 351.7,65.0 352.1,65.7 352.4,66.7 352.7,63.7 353.1,66.0 353.4,63.5 353.8,67.4 354.1,65.0 354.5,63.1 354.8,66.6 355.2,65.1 355.5,63.3 355.9,64.9 356.2,66.7 356.5,66.0 356.9,64.9 357.2,66.3 357.6,66.3 357.9,65.0 358.3,67.6 358.6,62.1 359.0,66.4 359.3,65.1 359.6,64.8 360.0,61.3 360.3,66.0 360.7,58.3 361.0,56.6 361.4,61.6 361.7,70.7 362.1,71.3 362.4,66.0 362.8,63.0 363.1,60.8 363.4,55.8 363.8,61.2 364.1,64.0 364.5,61.5 364.8,78.7 365.2,57.0 365.5,73.2 365.9,75.8 366.2,67.8 366.5,66.2 366.9,69.5 367.2,64.9 367.6,63.6 367.9,60.8 368.3,62.1 368.6,66.0 369.0,63.5 369.3,59.3 369.7,64.7 370.0,64.2 370.3,72.7 370.7,62.4 371.0,55.1 371.4,60.5 371.7,64.4 372.1,58.3 372.4,58.2 372.8,57.8 373.1,68.2 373.4,68.2 373.8,60.5 374.1,61.4 374.5,61.7 374.8,69.7 375.2,60.4 375.5,55.8 375.9,58.8 376.2,53.2 376.6,61.9 376.9,63.5 377.2,56.4 377.6,59.9 377.9,73.4 378.3,70.4 378.6,63.0 379.0,65.9 379.3,56.8 379.7,57.7 380.0,59.0 380.3,65.6 380.7,65.3 381.0,61.1 381.4,65.8 381.7,61.8 382.1,63.3 382.4,61.6 382.8,64.2 383.1,67.4 383.5,74.2 383.8,68.8 384.1,70.2 384.5,62.3 384.8,69.2 385.2,66.4 385.5,63.8 385.9,63.6 386.2,62.8 386.6,64.1 386.9,61.8 387.2,66.2 387.6,63.5 387.9,67.4 388.3,66.0 388.6,64.6 389.0,64.2 389.3,66.1 389.7,67.1 390.0,68.6 390.4,71.5 390.7,71.5 391.0,60.8 391.4,71.1 391.7,70.1 392.1,72.0 392.4,66.7 392.8,66.7 393.1,67.1 393.5,68.7 393.8,65.9 394.1,68.5 394.5,65.0 394.8,63.1 395.2,67.2 395.5,65.2 395.9,66.8 396.2,66.5 396.6,69.1 396.9,65.5 397.3,65.7" fill="none" stroke="#1a1aff" stroke-width="0.95" stroke-linejoin="miter"/><rect x="45.0" y="12.0" width="352.5999999999999" height="127.10000000000002" fill="none" stroke="#727272" stroke-width="1.5"/><rect x="300.80" y="20.00" width="14.5" height="11.5" fill="#fff" stroke="#ccc" stroke-width="1"/><rect x="302.80" y="22.00" width="10.5" height="7.5" fill="#00f"/><path d="M396.10 3.00L405.80 12.70L396.10 22.40L386.40 12.70Z" fill="#f00"/></svg>
<div class="t" style="left:1398.11px;top:496.65px;font:12.6px/12.6px 'Liberation Serif', serif;color:#545454;">6000</div>
<div class="t" style="left:1398.11px;top:475.10px;font:12.6px/12.6px 'Liberation Serif', serif;color:#545454;">6500</div>
<div class="t" style="left:1398.11px;top:453.55px;font:12.6px/12.6px 'Liberation Serif', serif;color:#545454;">7000</div>
<div class="t" style="left:1398.11px;top:432.00px;font:12.6px/12.6px 'Liberation Serif', serif;color:#545454;">7500</div>
<div class="t" style="left:1398.11px;top:410.45px;font:12.6px/12.6px 'Liberation Serif', serif;color:#545454;">8000</div>
<div class="t" style="left:1398.11px;top:388.90px;font:12.6px/12.6px 'Liberation Serif', serif;color:#545454;">8500</div>
<div class="t" style="left:1425.05px;top:506.95px;font:12.6px/12.6px 'Liberation Serif', serif;color:#545454;">0</div>
<div class="t" style="left:1487.76px;top:506.95px;font:12.6px/12.6px 'Liberation Serif', serif;color:#545454;">200</div>
<div class="t" style="left:1556.76px;top:506.95px;font:12.6px/12.6px 'Liberation Serif', serif;color:#545454;">400</div>
<div class="t" style="left:1625.76px;top:506.95px;font:12.6px/12.6px 'Liberation Serif', serif;color:#545454;">600</div>
<div class="t" style="left:1694.76px;top:506.95px;font:12.6px/12.6px 'Liberation Serif', serif;color:#545454;">800</div>
<div class="t" style="left:1760.62px;top:506.95px;font:12.6px/12.6px 'Liberation Serif', serif;color:#545454;">1000</div>
<div class="t" style="left:1701.50px;top:383.80px;font:12.3px/12.3px 'Liberation Serif', serif;color:#8a8a8a;transform:scaleX(1.0697);">aida05 1.8.W</div>
<svg style="left:112.0px;top:526.1px" width="422.8" height="167.19999999999993"><line x1="114.04" y1="12.0" x2="114.04" y2="139.19999999999993" stroke="#ebebeb" stroke-width="1"/><line x1="183.08" y1="12.0" x2="183.08" y2="139.19999999999993" stroke="#ebebeb" stroke-width="1"/><line x1="252.12" y1="12.0" x2="252.12" y2="139.19999999999993" stroke="#ebebeb" stroke-width="1"/><line x1="321.16" y1="12.0" x2="321.16" y2="139.19999999999993" stroke="#ebebeb" stroke-width="1"/><line x1="390.21" y1="12.0" x2="390.21" y2="139.19999999999993" stroke="#ebebeb" stroke-width="1"/><line x1="45.0" y1="118.43" x2="397.8" y2="118.43" stroke="#ebebeb" stroke-width="1"/><line x1="45.0" y1="97.66" x2="397.8" y2="97.66" stroke="#ebebeb" stroke-width="1"/><line x1="45.0" y1="76.89" x2="397.8" y2="76.89" stroke="#ebebeb" stroke-width="1"/><line x1="45.0" y1="56.12" x2="397.8" y2="56.12" stroke="#ebebeb" stroke-width="1"/><line x1="45.0" y1="35.35" x2="397.8" y2="35.35" stroke="#ebebeb" stroke-width="1"/><line x1="45.0" y1="14.58" x2="397.8" y2="14.58" stroke="#ebebeb" stroke-width="1"/><polyline points="45.0,61.9 45.3,56.6 45.7,60.6 46.0,58.5 46.4,68.1 46.7,57.7 47.1,58.8 47.4,65.4 47.8,56.1 48.1,61.1 48.5,62.8 48.8,56.0 49.1,55.8 49.5,56.6 49.8,57.0 50.2,54.6 50.5,67.3 50.9,60.2 51.2,54.6 51.6,57.8 51.9,59.3 52.2,60.6 52.6,60.8 52.9,61.6 53.3,60.0 53.6,66.2 54.0,57.7 54.3,59.8 54.7,64.2 55.0,59.8 55.4,59.5 55.7,60.0 56.0,58.2 56.4,58.1 56.7,58.7 57.1,63.1 57.4,64.9 57.8,61.6 58.1,57.5 58.5,64.0 58.8,60.9 59.2,61.1 59.5,60.2 59.8,62.6 60.2,59.0 60.5,60.6 60.9,58.0 61.2,59.7 61.6,60.1 61.9,57.2 62.3,56.5 62.6,58.4 63.0,62.1 63.3,59.1 63.6,56.7 64.0,57.6 64.3,55.5 64.7,56.6 65.0,61.1 65.4,54.9 65.7,58.6 66.1,58.3 66.4,59.6 66.7,63.7 67.1,66.3 67.4,58.2 67.8,56.9 68.1,54.6 68.5,63.0 68.8,60.5 69.2,61.6 69.5,58.2 69.9,62.7 70.2,63.4 70.5,66.7 70.9,61.1 71.2,55.9 71.6,65.7 71.9,62.2 72.3,56.4 72.6,62.8 73.0,66.8 73.3,64.2 73.7,57.4 74.0,60.3 74.3,63.3 74.7,62.1 75.0,57.9 75.4,63.3 75.7,57.2 76.1,61.4 76.4,59.2 76.8,62.3 77.1,62.6 77.4,54.9 77.8,60.9 78.1,63.2 78.5,59.1 78.8,62.5 79.2,63.0 79.5,62.7 79.9,62.0 80.2,56.5 80.6,65.6 80.9,59.4 81.2,65.8 81.6,58.7 81.9,62.5 82.3,58.7 82.6,61.5 83.0,57.5 83.3,58.3 83.7,59.4 84.0,58.0 84.4,62.9 84.7,62.5 85.0,64.4 85.4,58.4 85.7,59.3 86.1,61.7 86.4,66.1 86.8,61.4 87.1,58.9 87.5,57.6 87.8,63.9 88.2,58.0 88.5,66.5 88.8,63.2 89.2,65.9 89.5,60.2 89.9,65.2 90.2,64.6 90.6,56.7 90.9,56.7 91.3,68.7 91.6,56.6 91.9,57.6 92.3,57.3 92.6,63.4 93.0,55.4 93.3,58.8 93.7,67.5 94.0,70.9 94.4,66.0 94.7,59.6 95.1,51.5 95.4,67.0 95.7,59.2 96.1,60.9 96.4,60.9 96.8,58.7 97.1,56.8 97.5,61.2 97.8,54.3 98.2,58.1 98.5,57.3 98.9,57.8 99.2,64.4 99.5,57.3 99.9,65.2 100.2,61.2 100.6,62.8 100.9,66.4 101.3,62.3 101.6,69.5 102.0,59.1 102.3,62.5 102.6,65.4 103.0,61.0 103.3,60.2 103.7,62.9 104.0,73.5 104.4,59.7 104.7,60.7 105.1,52.0 105.4,52.0 105.8,56.8 106.1,59.5 106.4,60.1 106.8,64.6 107.1,64.4 107.5,67.0 107.8,66.7 108.2,67.3 108.5,54.8 108.9,52.3 109.2,78.8 109.6,62.5 109.9,75.5 110.2,71.3 110.6,63.9 110.9,64.4 111.3,46.7 111.6,62.1 112.0,68.4 112.3,72.7 112.7,59.6 113.0,67.7 113.4,65.3 113.7,71.3 114.0,55.5 114.4,59.8 114.7,55.3 115.1,66.0 115.4,62.2 115.8,65.2 116.1,69.5 116.5,59.0 116.8,73.2 117.1,66.3 117.5,69.8 117.8,62.3 118.2,70.1 118.5,63.6 118.9,67.4 119.2,65.1 119.6,65.1 119.9,51.3 120.3,68.5 120.6,55.8 120.9,64.3 121.3,50.8 121.6,61.6 122.0,58.4 122.3,68.4 122.7,56.7 123.0,62.8 123.4,65.8 123.7,62.3 124.1,56.4 124.4,64.9 124.7,61.4 125.1,56.5 125.4,57.2 125.8,66.5 126.1,68.8 126.5,59.4 126.8,61.0 127.2,60.3 127.5,59.7 127.8,62.1 128.2,60.3 128.5,63.6 128.9,62.8 129.2,61.9 129.6,63.6 129.9,62.7 130.3,57.0 130.6,62.5 131.0,59.5 131.3,61.2 131.6,67.0 132.0,59.7 132.3,67.3 132.7,61.2 133.0,62.5 133.4,64.2 133.7,60.4 134.1,63.2 134.4,56.1 134.8,68.0 135.1,58.5 135.4,59.8 135.8,60.9 136.1,65.2 136.5,64.9 136.8,66.6 137.2,61.6 137.5,62.7 137.9,59.9 138.2,61.5 138.6,60.6 138.9,66.2 139.2,61.6 139.6,61.1 139.9,59.8 140.3,67.1 140.6,59.7 141.0,64.9 141.3,61.8 141.7,61.5 142.0,56.2 142.3,60.4 142.7,61.6 143.0,64.3 143.4,64.6 143.7,67.2 144.1,62.6 144.4,65.0 144.8,58.5 145.1,65.0 145.5,59.5 145.8,62.2 146.1,63.7 146.5,61.5 146.8,64.8 147.2,61.1 147.5,61.8 147.9,62.6 148.2,61.2 148.6,60.8 148.9,60.1 149.3,61.5 149.6,62.5 149.9,60.8 150.3,64.7 150.6,58.9 151.0,62.2 151.3,60.8 151.7,59.0 152.0,62.8 152.4,62.3 152.7,61.1 153.0,63.5 153.4,57.9 153.7,67.1 154.1,62.7 154.4,60.5 154.8,60.7 155.1,63.0 155.5,57.4 155.8,57.6 156.2,61.3 156.5,58.7 156.8,65.4 157.2,58.8 157.5,60.8 157.9,59.1 158.2,59.6 158.6,60.6 158.9,61.5 159.3,67.4 159.6,69.1 160.0,66.9 160.3,57.8 160.6,60.7 161.0,64.0 161.3,64.4 161.7,58.1 162.0,61.7 162.4,54.2 162.7,63.1 163.1,65.9 163.4,70.8 163.8,64.9 164.1,59.6 164.4,67.9 164.8,58.3 165.1,58.4 165.5,66.8 165.8,59.4 166.2,67.5 166.5,60.7 166.9,63.4 167.2,58.5 167.5,65.7 167.9,62.1 168.2,59.1 168.6,63.5 168.9,63.0 169.3,64.7 169.6,56.7 170.0,60.2 170.3,57.9 170.7,57.9 171.0,59.9 171.3,59.9 171.7,62.7 172.0,61.1 172.4,59.9 172.7,63.4 173.1,62.6 173.4,59.7 173.8,58.1 174.1,60.0 174.5,60.8 174.8,58.1 175.1,58.9 175.5,57.7 175.8,59.1 176.2,60.4 176.5,59.1 176.9,57.3 177.2,58.5 177.6,63.9 177.9,57.0 178.2,62.1 178.6,64.7 178.9,66.3 179.3,59.3 179.6,71.1 180.0,66.4 180.3,60.2 180.7,58.1 181.0,54.3 181.4,60.7 181.7,63.4 182.0,63.7 182.4,57.8 182.7,60.4 183.1,59.5 183.4,64.0 183.8,64.7 184.1,63.7 184.5,59.9 184.8,59.2 185.2,54.1 185.5,57.8 185.8,60.1 186.2,55.2 186.5,67.2 186.9,64.0 187.2,58.2 187.6,57.9 187.9,60.3 188.3,64.4 188.6,63.9 189.0,59.9 189.3,59.1 189.6,64.9 190.0,61.3 190.3,60.6 190.7,57.8 191.0,57.8 191.4,61.6 191.7,62.4 192.1,60.9 192.4,61.8 192.7,61.8 193.1,59.3 193.4,60.3 193.8,64.5 194.1,60.4 194.5,59.5 194.8,63.3 195.2,56.4 195.5,59.5 195.9,60.2 196.2,61.3 196.5,58.3 196.9,58.1 197.2,61.9 197.6,65.9 197.9,58.1 198.3,60.5 198.6,63.6 199.0,57.7 199.3,65.9 199.7,61.7 200.0,63.7 200.3,64.0 200.7,60.1 201.0,55.1 201.4,62.0 201.7,57.3 202.1,61.9 202.4,62.1 202.8,59.9 203.1,63.2 203.4,56.4 203.8,62.0 204.1,62.6 204.5,60.3 204.8,60.7 205.2,61.7 205.5,59.3 205.9,57.4 206.2,60.4 206.6,61.4 206.9,58.4 207.2,58.2 207.6,61.3 207.9,60.3 208.3,61.3 208.6,62.3 209.0,58.5 209.3,58.6 209.7,56.0 210.0,54.5 210.4,66.9 210.7,63.5 211.0,60.3 211.4,56.3 211.7,59.8 212.1,58.3 212.4,61.4 212.8,57.2 213.1,56.2 213.5,56.0 213.8,57.1 214.2,60.8 214.5,53.1 214.8,62.8 215.2,63.7 215.5,63.3 215.9,59.1 216.2,53.8 216.6,59.5 216.9,57.3 217.3,60.1 217.6,56.7 217.9,59.1 218.3,65.1 218.6,47.9 219.0,56.3 219.3,55.7 219.7,57.3 220.0,62.7 220.4,60.5 220.7,56.7 221.1,54.1 221.4,57.8 221.7,62.9 222.1,61.2 222.4,65.3 222.8,62.2 223.1,61.3 223.5,63.8 223.8,58.4 224.2,48.2 224.5,64.2 224.9,70.5 225.2,65.4 225.5,51.9 225.9,69.2 226.2,51.3 226.6,50.0 226.9,63.5 227.3,76.1 227.6,55.7 228.0,71.6 228.3,60.2 228.6,37.8 229.0,57.3 229.3,85.6 229.7,44.4 230.0,75.5 230.4,75.5 230.7,57.6 231.1,69.0 231.4,60.2 231.8,63.8 232.1,71.5 232.4,73.9 232.8,62.3 233.1,68.1 233.5,63.9 233.8,57.7 234.2,55.2 234.5,65.7 234.9,59.8 235.2,66.3 235.6,71.0 235.9,57.1 236.2,55.1 236.6,64.1 236.9,65.9 237.3,67.2 237.6,62.6 238.0,59.4 238.3,60.7 238.7,65.4 239.0,61.1 239.4,66.0 239.7,62.5 240.0,60.7 240.4,60.7 240.7,68.2 241.1,64.8 241.4,62.5 241.8,60.3 242.1,63.3 242.5,60.7 242.8,58.6 243.1,66.0 243.5,61.3 243.8,55.4 244.2,61.4 244.5,62.7 244.9,58.6 245.2,59.6 245.6,61.7 245.9,69.7 246.3,62.5 246.6,61.6 246.9,61.1 247.3,58.8 247.6,66.6 248.0,65.3 248.3,62.4 248.7,59.7 249.0,64.7 249.4,66.1 249.7,61.5 250.1,62.5 250.4,59.2 250.7,63.5 251.1,61.9 251.4,67.8 251.8,61.6 252.1,62.0 252.5,63.7 252.8,66.2 253.2,58.7 253.5,60.4 253.8,63.5 254.2,60.4 254.5,57.7 254.9,63.8 255.2,59.2 255.6,61.2 255.9,63.6 256.3,63.4 256.6,60.5 257.0,60.6 257.3,61.5 257.6,64.3 258.0,63.7 258.3,62.8 258.7,65.4 259.0,66.0 259.4,64.3 259.7,61.8 260.1,61.6 260.4,62.8 260.8,61.3 261.1,58.9 261.4,65.2 261.8,60.7 262.1,63.6 262.5,59.0 262.8,67.7 263.2,61.8 263.5,67.7 263.9,62.6 264.2,62.9 264.6,63.4 264.9,60.8 265.2,65.4 265.6,63.0 265.9,61.1 266.3,63.1 266.6,61.1 267.0,62.5 267.3,61.8 267.7,65.0 268.0,67.9 268.3,64.3 268.7,57.7 269.0,60.6 269.4,64.1 269.7,65.2 270.1,57.2 270.4,59.2 270.8,62.4 271.1,59.4 271.5,61.8 271.8,56.4 272.1,66.5 272.5,61.3 272.8,59.8 273.2,60.2 273.5,65.2 273.9,64.5 274.2,58.7 274.6,55.6 274.9,65.4 275.3,63.0 275.6,57.0 275.9,62.9 276.3,59.9 276.6,59.0 277.0,62.7 277.3,53.9 277.7,61.7 278.0,63.1 278.4,59.7 278.7,59.3 279.0,63.9 279.4,62.0 279.7,63.1 280.1,61.8 280.4,65.4 280.8,61.0 281.1,58.0 281.5,63.7 281.8,62.6 282.2,62.3 282.5,67.6 282.8,62.0 283.2,63.8 283.5,65.1 283.9,55.2 284.2,64.2 284.6,63.9 284.9,73.4 285.3,59.5 285.6,62.4 286.0,57.3 286.3,65.0 286.6,62.3 287.0,62.1 287.3,56.3 287.7,59.4 288.0,66.2 288.4,56.3 288.7,59.2 289.1,62.4 289.4,63.7 289.8,62.9 290.1,65.8 290.4,62.6 290.8,59.6 291.1,61.7 291.5,62.9 291.8,60.7 292.2,60.7 292.5,61.0 292.9,60.3 293.2,58.3 293.5,60.2 293.9,58.1 294.2,58.8 294.6,61.9 294.9,59.3 295.3,61.4 295.6,62.4 296.0,60.3 296.3,60.2 296.7,59.0 297.0,60.7 297.3,65.8 297.7,61.1 298.0,60.2 298.4,57.9 298.7,59.6 299.1,61.5 299.4,61.3 299.8,56.4 300.1,57.8 300.5,61.1 300.8,59.9 301.1,60.6 301.5,62.9 301.8,61.3 302.2,62.5 302.5,58.4 302.9,64.6 303.2,62.6 303.6,59.1 303.9,59.6 304.2,64.4 304.6,64.4 304.9,62.3 305.3,59.7 305.6,58.8 306.0,61.3 306.3,55.7 306.7,58.9 307.0,66.3 307.4,62.0 307.7,57.8 308.0,57.2 308.4,62.1 308.7,61.6 309.1,61.3 309.4,60.7 309.8,63.0 310.1,60.5 310.5,58.7 310.8,60.4 311.2,59.0 311.5,62.6 311.8,58.8 312.2,61.8 312.5,59.2 312.9,58.9 313.2,63.4 313.6,63.5 313.9,58.5 314.3,59.4 314.6,60.0 315.0,62.0 315.3,59.3 315.6,59.2 316.0,63.1 316.3,65.3 316.7,58.6 317.0,60.3 317.4,62.9 317.7,61.5 318.1,62.7 318.4,59.6 318.7,60.6 319.1,58.9 319.4,60.1 319.8,60.3 320.1,58.4 320.5,60.9 320.8,63.6 321.2,60.9 321.5,62.3 321.9,59.1 322.2,56.5 322.5,61.7 322.9,61.0 323.2,62.8 323.6,57.2 323.9,57.5 324.3,59.1 324.6,56.6 325.0,56.2 325.3,62.5 325.7,60.9 326.0,61.1 326.3,57.3 326.7,64.8 327.0,63.3 327.4,59.2 327.7,62.3 328.1,65.2 328.4,63.7 328.8,58.3 329.1,55.5 329.4,60.1 329.8,55.7 330.1,65.0 330.5,60.3 330.8,59.3 331.2,61.5 331.5,60.7 331.9,52.7 332.2,64.6 332.6,63.7 332.9,59.9 333.2,58.2 333.6,63.6 333.9,62.0 334.3,60.9 334.6,60.2 335.0,63.1 335.3,59.1 335.7,59.3 336.0,60.9 336.4,65.4 336.7,56.3 337.0,60.6 337.4,65.4 337.7,57.8 338.1,56.6 338.4,64.0 338.8,58.4 339.1,61.1 339.5,60.0 339.8,58.9 340.2,62.8 340.5,58.8 340.8,56.7 341.2,60.5 341.5,58.8 341.9,60.4 342.2,60.2 342.6,57.0 342.9,61.6 343.3,60.5 343.6,52.6 343.9,60.4 344.3,60.1 344.6,60.1 345.0,61.2 345.3,60.7 345.7,53.9 346.0,65.4 346.4,68.5 346.7,58.6 347.1,62.5 347.4,61.9 347.7,60.4 348.1,61.3 348.4,65.4 348.8,61.0 349.1,61.5 349.5,66.1 349.8,59.4 350.2,51.5 350.5,57.3 350.9,49.6 351.2,61.0 351.5,56.7 351.9,60.3 352.2,65.6 352.6,66.4 352.9,72.0 353.3,56.0 353.6,61.9 354.0,58.2 354.3,67.0 354.6,67.7 355.0,64.9 355.3,54.1 355.7,51.1 356.0,48.5 356.4,58.6 356.7,59.6 357.1,67.2 357.4,68.1 357.8,61.5 358.1,59.6 358.4,60.1 358.8,64.0 359.1,60.2 359.5,58.5 359.8,58.2 360.2,51.8 360.5,64.5 360.9,58.4 361.2,62.9 361.6,64.9 361.9,58.7 362.2,73.0 362.6,47.0 362.9,58.1 363.3,50.6 363.6,58.2 364.0,50.8 364.3,63.4 364.7,62.2 365.0,53.7 365.4,57.7 365.7,55.3 366.0,59.4 366.4,60.2 366.7,59.7 367.1,56.1 367.4,58.0 367.8,59.5 368.1,64.2 368.5,58.3 368.8,57.2 369.1,56.1 369.5,59.7 369.8,65.0 370.2,61.5 370.5,56.6 370.9,58.2 371.2,57.8 371.6,59.1 371.9,60.6 372.3,60.6 372.6,59.8 372.9,57.7 373.3,63.8 373.6,54.9 374.0,55.5 374.3,62.9 374.7,63.9 375.0,52.5 375.4,55.6 375.7,60.9 376.1,63.7 376.4,52.7 376.7,55.9 377.1,58.0 377.4,51.7 377.8,63.2 378.1,61.7 378.5,62.6 378.8,58.3 379.2,68.8 379.5,59.9 379.8,62.4 380.2,61.1 380.5,63.1 380.9,66.6 381.2,57.9 381.6,56.5 381.9,57.0 382.3,61.7 382.6,59.4 383.0,58.3 383.3,60.4 383.6,62.2 384.0,58.7 384.3,59.1 384.7,60.4 385.0,57.0 385.4,60.9 385.7,58.8 386.1,59.4 386.4,57.2 386.8,59.1 387.1,61.7 387.4,63.3 387.8,58.3 388.1,63.0 388.5,55.0 388.8,57.1 389.2,59.5 389.5,60.8 389.9,60.3 390.2,55.3 390.6,58.5 390.9,63.1 391.2,61.2 391.6,57.9 391.9,61.6 392.3,54.8 392.6,62.4 393.0,57.1 393.3,60.2 393.7,55.0 394.0,57.7 394.3,59.2 394.7,58.7 395.0,60.1 395.4,62.4 395.7,60.0 396.1,60.4 396.4,59.8 396.8,60.9 397.1,62.1 397.5,59.4" fill="none" stroke="#1a1aff" stroke-width="0.95" stroke-linejoin="miter"/><rect x="45.0" y="12.0" width="352.8" height="127.19999999999993" fill="none" stroke="#727272" stroke-width="1.5"/><rect x="301.00" y="20.00" width="14.5" height="11.5" fill="#fff" stroke="#ccc" stroke-width="1"/><rect x="303.00" y="22.00" width="10.5" height="7.5" fill="#00f"/><path d="M396.30 3.00L406.00 12.70L396.30 22.40L386.60 12.70Z" fill="#f00"/></svg>
<div class="t" style="left:127.91px;top:658.65px;font:12.6px/12.6px 'Liberation Serif', serif;color:#545454;">6000</div>
<div class="t" style="left:127.91px;top:637.88px;font:12.6px/12.6px 'Liberation Serif', serif;color:#545454;">6500</div>
<div class="t" style="left:127.91px;top:617.11px;font:12.6px/12.6px 'Liberation Serif', serif;color:#545454;">7000</div>
<div class="t" style="left:127.91px;top:596.34px;font:12.6px/12.6px 'Liberation Serif', serif;color:#545454;">7500</div>
<div class="t" style="left:127.91px;top:575.57px;font:12.6px/12.6px 'Liberation Serif', serif;color:#545454;">8000</div>
<div class="t" style="left:127.91px;top:554.80px;font:12.6px/12.6px 'Liberation Serif', serif;color:#545454;">8500</div>
<div class="t" style="left:127.91px;top:534.02px;font:12.6px/12.6px 'Liberation Serif', serif;color:#545454;">9000</div>
<div class="t" style="left:154.85px;top:668.95px;font:12.6px/12.6px 'Liberation Serif', serif;color:#545454;">0</div>
<div class="t" style="left:217.60px;top:668.95px;font:12.6px/12.6px 'Liberation Serif', serif;color:#545454;">200</div>
<div class="t" style="left:286.64px;top:668.95px;font:12.6px/12.6px 'Liberation Serif', serif;color:#545454;">400</div>
<div class="t" style="left:355.68px;top:668.95px;font:12.6px/12.6px 'Liberation Serif', serif;color:#545454;">600</div>
<div class="t" style="left:424.72px;top:668.95px;font:12.6px/12.6px 'Liberation Serif', serif;color:#545454;">800</div>
<div class="t" style="left:490.61px;top:668.95px;font:12.6px/12.6px 'Liberation Serif', serif;color:#545454;">1000</div>
<div class="t" style="left:431.50px;top:545.70px;font:12.3px/12.3px 'Liberation Serif', serif;color:#8a8a8a;transform:scaleX(1.0697);">aida06 1.8.W</div>
<svg style="left:753.8px;top:526.1px" width="416.0" height="167.19999999999993"><line x1="112.71" y1="12.0" x2="112.71" y2="139.19999999999993" stroke="#ebebeb" stroke-width="1"/><line x1="180.42" y1="12.0" x2="180.42" y2="139.19999999999993" stroke="#ebebeb" stroke-width="1"/><line x1="248.13" y1="12.0" x2="248.13" y2="139.19999999999993" stroke="#ebebeb" stroke-width="1"/><line x1="315.84" y1="12.0" x2="315.84" y2="139.19999999999993" stroke="#ebebeb" stroke-width="1"/><line x1="383.55" y1="12.0" x2="383.55" y2="139.19999999999993" stroke="#ebebeb" stroke-width="1"/><line x1="45.0" y1="99.50" x2="391.0" y2="99.50" stroke="#ebebeb" stroke-width="1"/><line x1="45.0" y1="59.80" x2="391.0" y2="59.80" stroke="#ebebeb" stroke-width="1"/><line x1="45.0" y1="20.10" x2="391.0" y2="20.10" stroke="#ebebeb" stroke-width="1"/><polyline points="45.0,64.2 45.3,65.5 45.7,64.3 46.0,64.2 46.4,64.2 46.7,66.0 47.0,63.1 47.4,65.3 47.7,63.7 48.0,63.5 48.4,64.8 48.7,60.3 49.1,64.3 49.4,63.8 49.7,64.9 50.1,64.1 50.4,66.6 50.8,63.6 51.1,65.2 51.4,65.8 51.8,62.9 52.1,62.8 52.4,65.7 52.8,66.8 53.1,68.6 53.5,66.6 53.8,63.6 54.1,63.2 54.5,68.1 54.8,64.7 55.2,61.0 55.5,67.7 55.8,66.7 56.2,68.4 56.5,63.6 56.8,70.9 57.2,65.5 57.5,63.3 57.9,65.3 58.2,62.7 58.5,63.5 58.9,66.4 59.2,67.5 59.6,67.8 59.9,64.0 60.2,65.6 60.6,65.0 60.9,68.0 61.3,61.1 61.6,62.2 61.9,62.9 62.3,69.3 62.6,56.0 62.9,63.0 63.3,68.5 63.6,62.5 64.0,66.0 64.3,67.9 64.6,67.9 65.0,64.4 65.3,65.0 65.7,65.4 66.0,66.5 66.3,68.7 66.7,65.4 67.0,66.7 67.3,66.6 67.7,64.4 68.0,60.7 68.4,68.5 68.7,62.7 69.0,69.0 69.4,63.2 69.7,64.0 70.1,66.3 70.4,65.6 70.7,69.4 71.1,67.7 71.4,63.1 71.7,63.8 72.1,58.3 72.4,70.0 72.8,68.5 73.1,66.5 73.4,66.6 73.8,68.8 74.1,68.5 74.5,67.3 74.8,64.2 75.1,67.4 75.5,69.1 75.8,66.4 76.1,73.4 76.5,69.5 76.8,69.1 77.2,66.5 77.5,72.6 77.8,67.7 78.2,69.1 78.5,66.0 78.9,66.0 79.2,68.5 79.5,66.8 79.9,69.9 80.2,67.3 80.5,67.3 80.9,66.3 81.2,68.3 81.6,71.9 81.9,66.0 82.2,70.7 82.6,69.3 82.9,68.9 83.3,63.6 83.6,68.0 83.9,66.0 84.3,67.8 84.6,69.9 84.9,67.3 85.3,67.2 85.6,69.1 86.0,72.1 86.3,61.6 86.6,62.0 87.0,66.6 87.3,66.4 87.7,64.7 88.0,66.0 88.3,72.5 88.7,72.2 89.0,66.2 89.4,64.9 89.7,65.8 90.0,66.3 90.4,68.4 90.7,66.0 91.0,63.7 91.4,66.9 91.7,65.5 92.1,65.6 92.4,70.3 92.7,65.2 93.1,70.7 93.4,70.4 93.8,65.8 94.1,72.2 94.4,69.0 94.8,67.0 95.1,68.0 95.4,69.2 95.8,70.0 96.1,67.9 96.5,67.7 96.8,68.6 97.1,70.2 97.5,70.4 97.8,68.2 98.2,68.2 98.5,66.4 98.8,68.4 99.2,66.0 99.5,70.2 99.8,71.2 100.2,65.1 100.5,68.3 100.9,69.1 101.2,67.5 101.5,68.9 101.9,67.6 102.2,69.3 102.6,66.6 102.9,67.6 103.2,66.8 103.6,66.6 103.9,65.7 104.2,69.1 104.6,66.0 104.9,66.9 105.3,68.3 105.6,66.6 105.9,64.9 106.3,64.6 106.6,59.2 107.0,66.7 107.3,65.3 107.6,61.1 108.0,67.0 108.3,67.5 108.6,66.7 109.0,67.0 109.3,65.2 109.7,64.5 110.0,68.5 110.3,71.3 110.7,65.1 111.0,74.0 111.4,71.5 111.7,61.2 112.0,65.3 112.4,74.7 112.7,46.0 113.0,74.8 113.4,80.9 113.7,59.0 114.1,57.8 114.4,61.8 114.7,61.9 115.1,67.1 115.4,63.2 115.8,63.8 116.1,63.8 116.4,65.7 116.8,66.9 117.1,63.2 117.5,63.1 117.8,65.8 118.1,64.3 118.5,63.9 118.8,62.5 119.1,68.3 119.5,67.3 119.8,67.8 120.2,68.2 120.5,67.7 120.8,60.6 121.2,67.9 121.5,56.3 121.9,62.8 122.2,61.8 122.5,63.7 122.9,62.0 123.2,63.0 123.5,62.2 123.9,62.7 124.2,62.5 124.6,62.9 124.9,62.0 125.2,63.4 125.6,64.1 125.9,61.2 126.3,64.3 126.6,62.6 126.9,60.0 127.3,64.2 127.6,63.7 127.9,64.3 128.3,65.0 128.6,61.8 129.0,63.6 129.3,62.9 129.6,65.9 130.0,62.5 130.3,64.4 130.7,66.5 131.0,64.7 131.3,67.1 131.7,59.1 132.0,68.5 132.3,62.5 132.7,68.0 133.0,67.2 133.4,69.5 133.7,57.6 134.0,70.2 134.4,67.7 134.7,62.7 135.1,66.8 135.4,59.2 135.7,69.8 136.1,77.4 136.4,60.6 136.7,54.2 137.1,60.3 137.4,71.3 137.8,55.7 138.1,59.7 138.4,67.3 138.8,62.3 139.1,65.2 139.5,64.4 139.8,61.6 140.1,61.0 140.5,64.9 140.8,65.0 141.1,76.3 141.5,68.7 141.8,64.0 142.2,67.9 142.5,64.8 142.8,66.1 143.2,65.7 143.5,65.7 143.9,63.5 144.2,65.2 144.5,66.0 144.9,67.8 145.2,65.7 145.5,68.2 145.9,64.4 146.2,67.5 146.6,67.5 146.9,66.7 147.2,68.2 147.6,65.8 147.9,66.2 148.3,67.7 148.6,67.6 148.9,63.9 149.3,64.4 149.6,65.7 150.0,66.4 150.3,63.9 150.6,67.7 151.0,67.4 151.3,67.3 151.6,68.6 152.0,68.4 152.3,64.7 152.7,67.0 153.0,68.6 153.3,67.7 153.7,68.3 154.0,68.5 154.4,67.6 154.7,71.3 155.0,71.5 155.4,68.0 155.7,68.3 156.0,71.1 156.4,68.0 156.7,69.0 157.1,67.4 157.4,68.3 157.7,65.8 158.1,64.9 158.4,66.2 158.8,68.0 159.1,66.0 159.4,66.3 159.8,66.6 160.1,65.5 160.4,69.3 160.8,65.7 161.1,66.5 161.5,66.9 161.8,69.0 162.1,69.9 162.5,66.4 162.8,70.4 163.2,72.5 163.5,64.1 163.8,66.3 164.2,70.1 164.5,66.0 164.8,71.9 165.2,67.0 165.5,66.5 165.9,67.5 166.2,68.9 166.5,65.9 166.9,66.8 167.2,71.1 167.6,70.2 167.9,64.9 168.2,65.6 168.6,71.6 168.9,71.6 169.2,66.9 169.6,69.7 169.9,69.4 170.3,68.8 170.6,67.3 170.9,71.2 171.3,66.4 171.6,68.3 172.0,65.9 172.3,70.1 172.6,69.6 173.0,66.0 173.3,64.0 173.6,67.4 174.0,68.0 174.3,64.8 174.7,65.3 175.0,66.6 175.3,67.6 175.7,64.4 176.0,65.0 176.4,67.8 176.7,63.3 177.0,64.1 177.4,66.2 177.7,65.4 178.1,64.8 178.4,67.7 178.7,68.8 179.1,63.9 179.4,70.7 179.7,70.6 180.1,70.4 180.4,65.2 180.8,64.0 181.1,68.0 181.4,63.3 181.8,63.0 182.1,62.6 182.5,70.4 182.8,61.7 183.1,57.9 183.5,69.1 183.8,71.8 184.1,61.2 184.5,63.9 184.8,65.9 185.2,65.9 185.5,71.9 185.8,68.7 186.2,64.9 186.5,64.1 186.9,63.0 187.2,63.0 187.5,66.9 187.9,65.6 188.2,62.0 188.5,68.4 188.9,64.1 189.2,67.5 189.6,64.8 189.9,61.0 190.2,64.4 190.6,66.1 190.9,66.3 191.3,67.2 191.6,65.0 191.9,68.3 192.3,65.0 192.6,64.6 192.9,66.1 193.3,66.0 193.6,62.7 194.0,62.2 194.3,61.0 194.6,62.5 195.0,63.9 195.3,64.8 195.7,62.6 196.0,63.5 196.3,64.1 196.7,61.9 197.0,64.5 197.3,63.9 197.7,62.5 198.0,63.5 198.4,64.1 198.7,62.3 199.0,59.6 199.4,64.9 199.7,62.9 200.1,63.4 200.4,63.9 200.7,60.2 201.1,64.6 201.4,58.2 201.7,68.0 202.1,64.0 202.4,67.4 202.8,63.2 203.1,62.7 203.4,63.6 203.8,64.2 204.1,65.2 204.5,68.0 204.8,62.5 205.1,64.6 205.5,61.1 205.8,69.3 206.2,65.4 206.5,69.4 206.8,61.8 207.2,66.9 207.5,66.9 207.8,62.6 208.2,65.1 208.5,64.3 208.9,65.2 209.2,62.4 209.5,64.4 209.9,64.6 210.2,65.1 210.6,63.0 210.9,63.1 211.2,65.6 211.6,64.0 211.9,67.2 212.2,66.3 212.6,65.9 212.9,66.5 213.3,64.2 213.6,67.8 213.9,68.3 214.3,65.1 214.6,66.5 215.0,65.3 215.3,65.3 215.6,66.3 216.0,66.0 216.3,64.1 216.6,65.5 217.0,65.4 217.3,64.5 217.7,66.7 218.0,67.7 218.3,66.2 218.7,62.7 219.0,64.5 219.4,60.8 219.7,63.5 220.0,63.6 220.4,67.4 220.7,71.7 221.0,73.5 221.4,65.2 221.7,69.7 222.1,70.1 222.4,63.7 222.7,64.7 223.1,70.6 223.4,64.9 223.8,60.7 224.1,62.4 224.4,68.6 224.8,62.2 225.1,74.3 225.4,67.3 225.8,68.1 226.1,59.9 226.5,72.0 226.8,71.7 227.1,68.2 227.5,61.4 227.8,75.8 228.2,64.2 228.5,69.3 228.8,70.3 229.2,78.4 229.5,51.7 229.8,64.7 230.2,79.7 230.5,64.5 230.9,67.3 231.2,73.6 231.5,66.4 231.9,61.2 232.2,65.6 232.6,63.9 232.9,62.7 233.2,65.2 233.6,67.5 233.9,69.8 234.3,62.8 234.6,67.1 234.9,67.2 235.3,66.4 235.6,64.3 235.9,64.5 236.3,68.6 236.6,67.0 237.0,64.3 237.3,68.4 237.6,66.8 238.0,68.7 238.3,69.5 238.7,68.7 239.0,66.7 239.3,66.6 239.7,70.5 240.0,67.4 240.3,67.3 240.7,69.1 241.0,67.2 241.4,68.2 241.7,65.2 242.0,68.7 242.4,65.4 242.7,69.2 243.1,69.5 243.4,64.1 243.7,69.0 244.1,68.3 244.4,70.3 244.7,67.0 245.1,64.5 245.4,68.0 245.8,68.1 246.1,67.4 246.4,69.2 246.8,70.2 247.1,67.4 247.5,68.1 247.8,71.0 248.1,72.5 248.5,66.5 248.8,69.8 249.1,66.5 249.5,65.4 249.8,67.4 250.2,68.7 250.5,74.8 250.8,61.6 251.2,63.4 251.5,70.4 251.9,72.2 252.2,63.9 252.5,79.1 252.9,61.8 253.2,60.3 253.5,74.0 253.9,73.1 254.2,55.5 254.6,68.7 254.9,65.4 255.2,67.5 255.6,73.3 255.9,62.9 256.3,61.6 256.6,67.3 256.9,67.9 257.3,62.1 257.6,69.8 257.9,66.5 258.3,68.1 258.6,68.6 259.0,66.5 259.3,70.6 259.6,67.6 260.0,65.1 260.3,66.5 260.7,67.1 261.0,60.5 261.3,63.7 261.7,65.7 262.0,62.9 262.4,63.2 262.7,64.3 263.0,62.6 263.4,65.4 263.7,65.7 264.0,60.5 264.4,64.2 264.7,61.2 265.1,68.7 265.4,66.3 265.7,66.8 266.1,63.8 266.4,64.3 266.8,61.1 267.1,62.5 267.4,64.1 267.8,62.8 268.1,62.8 268.4,63.6 268.8,67.3 269.1,64.6 269.5,63.1 269.8,64.5 270.1,62.0 270.5,64.6 270.8,63.8 271.2,65.1 271.5,64.0 271.8,62.0 272.2,61.0 272.5,62.4 272.8,62.6 273.2,63.5 273.5,65.8 273.9,62.5 274.2,64.5 274.5,63.2 274.9,63.7 275.2,62.4 275.6,64.5 275.9,62.5 276.2,63.5 276.6,61.3 276.9,63.6 277.2,63.6 277.6,66.0 277.9,62.2 278.3,63.3 278.6,66.3 278.9,62.7 279.3,62.6 279.6,63.7 280.0,61.5 280.3,63.4 280.6,63.4 281.0,62.7 281.3,64.7 281.6,62.4 282.0,64.5 282.3,62.8 282.7,61.7 283.0,63.8 283.3,64.2 283.7,61.1 284.0,63.3 284.4,62.0 284.7,62.5 285.0,62.8 285.4,60.8 285.7,63.7 286.0,66.5 286.4,64.1 286.7,64.8 287.1,66.0 287.4,64.5 287.7,63.3 288.1,63.1 288.4,63.8 288.8,64.2 289.1,63.9 289.4,64.7 289.8,65.3 290.1,64.1 290.5,63.0 290.8,65.2 291.1,64.3 291.5,63.4 291.8,65.8 292.1,63.9 292.5,64.3 292.8,63.1 293.2,65.9 293.5,65.3 293.8,62.4 294.2,60.9 294.5,63.5 294.9,61.5 295.2,65.9 295.5,63.1 295.9,64.4 296.2,64.0 296.5,66.8 296.9,64.8 297.2,63.9 297.6,63.3 297.9,64.2 298.2,64.2 298.6,63.0 298.9,61.1 299.3,68.7 299.6,69.1 299.9,65.4 300.3,62.4 300.6,61.6 300.9,64.3 301.3,67.2 301.6,64.9 302.0,66.7 302.3,64.7 302.6,66.3 303.0,62.5 303.3,67.6 303.7,64.2 304.0,67.6 304.3,65.3 304.7,66.0 305.0,68.3 305.3,69.8 305.7,66.9 306.0,67.2 306.4,67.8 306.7,65.3 307.0,66.2 307.4,65.6 307.7,69.6 308.1,67.5 308.4,67.6 308.7,63.4 309.1,62.5 309.4,68.7 309.7,67.4 310.1,73.0 310.4,60.9 310.8,66.6 311.1,66.7 311.4,67.3 311.8,68.1 312.1,70.9 312.5,69.7 312.8,69.7 313.1,68.5 313.5,70.5 313.8,67.8 314.1,67.3 314.5,68.0 314.8,68.1 315.2,64.4 315.5,69.9 315.8,69.9 316.2,66.6 316.5,69.3 316.9,64.4 317.2,69.6 317.5,68.5 317.9,65.4 318.2,71.3 318.5,66.5 318.9,68.0 319.2,68.1 319.6,66.1 319.9,69.2 320.2,67.4 320.6,69.1 320.9,66.6 321.3,70.0 321.6,68.3 321.9,69.0 322.3,69.7 322.6,66.8 323.0,68.7 323.3,67.4 323.6,71.3 324.0,69.6 324.3,69.4 324.6,67.5 325.0,70.8 325.3,67.4 325.7,65.7 326.0,67.7 326.3,67.5 326.7,69.1 327.0,70.8 327.4,68.0 327.7,67.0 328.0,63.8 328.4,67.1 328.7,70.4 329.0,64.7 329.4,71.5 329.7,74.9 330.1,68.5 330.4,69.7 330.7,65.6 331.1,67.8 331.4,71.1 331.8,69.6 332.1,68.9 332.4,62.4 332.8,70.9 333.1,71.3 333.4,63.4 333.8,62.4 334.1,68.5 334.5,62.1 334.8,67.5 335.1,70.5 335.5,67.4 335.8,63.8 336.2,62.9 336.5,67.5 336.8,70.1 337.2,66.1 337.5,68.1 337.8,68.4 338.2,65.4 338.5,65.9 338.9,70.3 339.2,68.6 339.5,62.8 339.9,66.8 340.2,60.0 340.6,72.1 340.9,67.9 341.2,65.8 341.6,69.1 341.9,65.2 342.2,65.3 342.6,73.4 342.9,54.3 343.3,51.6 343.6,81.1 343.9,68.3 344.3,79.3 344.6,47.9 345.0,69.9 345.3,81.0 345.6,55.0 346.0,55.8 346.3,67.0 346.6,62.4 347.0,61.3 347.3,71.6 347.7,64.2 348.0,68.1 348.3,60.7 348.7,60.5 349.0,63.2 349.4,60.8 349.7,64.8 350.0,65.9 350.4,61.3 350.7,64.3 351.1,63.3 351.4,68.3 351.7,62.1 352.1,64.7 352.4,64.9 352.7,68.5 353.1,67.0 353.4,66.0 353.8,63.9 354.1,59.8 354.4,71.1 354.8,69.8 355.1,68.1 355.5,67.3 355.8,67.8 356.1,68.8 356.5,66.7 356.8,63.2 357.1,65.7 357.5,66.5 357.8,63.6 358.2,64.5 358.5,67.1 358.8,61.4 359.2,66.7 359.5,67.3 359.9,64.2 360.2,66.6 360.5,67.7 360.9,61.3 361.2,66.0 361.5,67.4 361.9,64.7 362.2,65.3 362.6,69.2 362.9,66.1 363.2,63.9 363.6,66.4 363.9,64.0 364.3,68.4 364.6,63.0 364.9,66.4 365.3,67.2 365.6,67.9 365.9,63.5 366.3,65.5 366.6,66.3 367.0,64.7 367.3,65.9 367.6,66.5 368.0,64.5 368.3,67.2 368.7,62.2 369.0,56.4 369.3,72.2 369.7,65.7 370.0,67.6 370.3,63.0 370.7,75.7 371.0,55.0 371.4,62.1 371.7,55.4 372.0,59.9 372.4,72.0 372.7,67.1 373.1,56.9 373.4,59.7 373.7,71.0 374.1,64.7 374.4,57.9 374.7,58.6 375.1,68.7 375.4,64.0 375.8,63.3 376.1,67.8 376.4,68.0 376.8,61.1 377.1,66.7 377.5,67.1 377.8,61.8 378.1,62.6 378.5,64.7 378.8,68.4 379.2,70.0 379.5,71.2 379.8,69.1 380.2,66.0 380.5,71.2 380.8,69.8 381.2,70.3 381.5,66.7 381.9,68.3 382.2,63.7 382.5,64.3 382.9,67.3 383.2,67.8 383.6,65.2 383.9,69.4 384.2,65.7 384.6,69.9 384.9,68.2 385.2,67.0 385.6,67.4 385.9,69.8 386.3,68.8 386.6,67.3 386.9,70.7 387.3,63.6 387.6,69.2 388.0,67.2 388.3,62.5 388.6,68.1 389.0,66.8 389.3,66.3 389.6,67.9 390.0,70.4 390.3,72.1 390.7,66.9" fill="none" stroke="#1a1aff" stroke-width="0.95" stroke-linejoin="miter"/><rect x="45.0" y="12.0" width="346.0" height="127.19999999999993" fill="none" stroke="#727272" stroke-width="1.5"/><rect x="294.20" y="20.00" width="14.5" height="11.5" fill="#fff" stroke="#ccc" stroke-width="1"/><rect x="296.20" y="22.00" width="10.5" height="7.5" fill="#00f"/><path d="M389.50 3.00L399.20 12.70L389.50 22.40L379.80 12.70Z" fill="#f00"/></svg>
<div class="t" style="left:769.71px;top:658.65px;font:12.6px/12.6px 'Liberation Serif', serif;color:#545454;">6000</div>
<div class="t" style="left:769.71px;top:618.95px;font:12.6px/12.6px 'Liberation Serif', serif;color:#545454;">7000</div>
<div class="t" style="left:769.71px;top:579.25px;font:12.6px/12.6px 'Liberation Serif', serif;color:#545454;">8000</div>
<div class="t" style="left:769.71px;top:539.55px;font:12.6px/12.6px 'Liberation Serif', serif;color:#545454;">9000</div>
<div class="t" style="left:796.65px;top:668.95px;font:12.6px/12.6px 'Liberation Serif', serif;color:#545454;">0</div>
<div class="t" style="left:858.07px;top:668.95px;font:12.6px/12.6px 'Liberation Serif', serif;color:#545454;">200</div>
<div class="t" style="left:925.78px;top:668.95px;font:12.6px/12.6px 'Liberation Serif', serif;color:#545454;">400</div>
<div class="t" style="left:993.49px;top:668.95px;font:12.6px/12.6px 'Liberation Serif', serif;color:#545454;">600</div>
<div class="t" style="left:1061.20px;top:668.95px;font:12.6px/12.6px 'Liberation Serif', serif;color:#545454;">800</div>
<div class="t" style="left:1125.76px;top:668.95px;font:12.6px/12.6px 'Liberation Serif', serif;color:#545454;">1000</div>
<div class="t" style="left:1066.50px;top:545.70px;font:12.3px/12.3px 'Liberation Serif', serif;color:#8a8a8a;transform:scaleX(1.0772);">aida11 1.8.W</div>
<svg style="left:1376.0px;top:526.1px" width="428.79999999999995" height="167.19999999999993"><line x1="115.22" y1="12.0" x2="115.22" y2="139.19999999999993" stroke="#ebebeb" stroke-width="1"/><line x1="185.43" y1="12.0" x2="185.43" y2="139.19999999999993" stroke="#ebebeb" stroke-width="1"/><line x1="255.65" y1="12.0" x2="255.65" y2="139.19999999999993" stroke="#ebebeb" stroke-width="1"/><line x1="325.86" y1="12.0" x2="325.86" y2="139.19999999999993" stroke="#ebebeb" stroke-width="1"/><line x1="396.08" y1="12.0" x2="396.08" y2="139.19999999999993" stroke="#ebebeb" stroke-width="1"/><line x1="45.0" y1="107.40" x2="403.79999999999995" y2="107.40" stroke="#ebebeb" stroke-width="1"/><line x1="45.0" y1="75.60" x2="403.79999999999995" y2="75.60" stroke="#ebebeb" stroke-width="1"/><line x1="45.0" y1="43.80" x2="403.79999999999995" y2="43.80" stroke="#ebebeb" stroke-width="1"/><line x1="45.0" y1="75.60" x2="403.79999999999995" y2="75.60" stroke="#8080ff" stroke-width="1.2"/><rect x="45.0" y="12.0" width="358.79999999999995" height="127.19999999999993" fill="none" stroke="#727272" stroke-width="1.5"/><rect x="307.00" y="20.00" width="14.5" height="11.5" fill="#fff" stroke="#ccc" stroke-width="1"/><rect x="309.00" y="22.00" width="10.5" height="7.5" fill="#00f"/><path d="M401.80 65.90L411.50 75.60L401.80 85.30L392.10 75.60Z" fill="#f00"/></svg>
<div class="t" style="left:1397.16px;top:658.65px;font:12.6px/12.6px 'Liberation Serif', serif;color:#545454;">-1.0</div>
<div class="t" style="left:1397.16px;top:626.85px;font:12.6px/12.6px 'Liberation Serif', serif;color:#545454;">-0.5</div>
<div class="t" style="left:1401.36px;top:595.05px;font:12.6px/12.6px 'Liberation Serif', serif;color:#545454;">0.0</div>
<div class="t" style="left:1401.36px;top:563.25px;font:12.6px/12.6px 'Liberation Serif', serif;color:#545454;">0.5</div>
<div class="t" style="left:1401.36px;top:531.45px;font:12.6px/12.6px 'Liberation Serif', serif;color:#545454;">1.0</div>
<div class="t" style="left:1418.85px;top:668.95px;font:12.6px/12.6px 'Liberation Serif', serif;color:#545454;">0</div>
<div class="t" style="left:1482.77px;top:668.95px;font:12.6px/12.6px 'Liberation Serif', serif;color:#545454;">200</div>
<div class="t" style="left:1552.99px;top:668.95px;font:12.6px/12.6px 'Liberation Serif', serif;color:#545454;">400</div>
<div class="t" style="left:1623.20px;top:668.95px;font:12.6px/12.6px 'Liberation Serif', serif;color:#545454;">600</div>
<div class="t" style="left:1693.42px;top:668.95px;font:12.6px/12.6px 'Liberation Serif', serif;color:#545454;">800</div>
<div class="t" style="left:1760.48px;top:668.95px;font:12.6px/12.6px 'Liberation Serif', serif;color:#545454;">1000</div>
<div class="t" style="left:1701.50px;top:545.70px;font:12.3px/12.3px 'Liberation Serif', serif;color:#8a8a8a;transform:scaleX(1.0697);">aida12 1.8.W</div>
<svg style="left:112.0px;top:688.1px" width="422.8" height="167.19999999999993"><line x1="114.04" y1="12.0" x2="114.04" y2="139.19999999999993" stroke="#ebebeb" stroke-width="1"/><line x1="183.08" y1="12.0" x2="183.08" y2="139.19999999999993" stroke="#ebebeb" stroke-width="1"/><line x1="252.12" y1="12.0" x2="252.12" y2="139.19999999999993" stroke="#ebebeb" stroke-width="1"/><line x1="321.16" y1="12.0" x2="321.16" y2="139.19999999999993" stroke="#ebebeb" stroke-width="1"/><line x1="390.21" y1="12.0" x2="390.21" y2="139.19999999999993" stroke="#ebebeb" stroke-width="1"/><line x1="45.0" y1="118.72" x2="397.8" y2="118.72" stroke="#ebebeb" stroke-width="1"/><line x1="45.0" y1="98.23" x2="397.8" y2="98.23" stroke="#ebebeb" stroke-width="1"/><line x1="45.0" y1="77.75" x2="397.8" y2="77.75" stroke="#ebebeb" stroke-width="1"/><line x1="45.0" y1="57.27" x2="397.8" y2="57.27" stroke="#ebebeb" stroke-width="1"/><line x1="45.0" y1="36.78" x2="397.8" y2="36.78" stroke="#ebebeb" stroke-width="1"/><line x1="45.0" y1="16.30" x2="397.8" y2="16.30" stroke="#ebebeb" stroke-width="1"/><polyline points="45.0,69.5 45.3,65.0 45.7,64.5 46.0,63.3 46.4,66.3 46.7,64.7 47.1,63.3 47.4,64.2 47.8,61.2 48.1,59.1 48.5,66.9 48.8,69.7 49.1,62.4 49.5,60.3 49.8,61.6 50.2,61.7 50.5,65.3 50.9,65.1 51.2,62.3 51.6,65.2 51.9,67.0 52.2,65.6 52.6,58.0 52.9,59.3 53.3,65.1 53.6,65.3 54.0,62.7 54.3,65.7 54.7,58.3 55.0,63.4 55.4,67.4 55.7,57.8 56.0,65.1 56.4,61.9 56.7,62.8 57.1,64.1 57.4,61.2 57.8,65.4 58.1,70.1 58.5,72.4 58.8,67.8 59.2,65.6 59.5,62.3 59.8,61.9 60.2,59.8 60.5,61.5 60.9,64.8 61.2,64.3 61.6,68.9 61.9,62.2 62.3,60.2 62.6,60.1 63.0,62.1 63.3,62.2 63.6,59.3 64.0,61.8 64.3,59.5 64.7,60.0 65.0,61.3 65.4,58.7 65.7,63.7 66.1,63.0 66.4,64.0 66.7,63.7 67.1,59.8 67.4,59.7 67.8,62.3 68.1,61.6 68.5,60.9 68.8,61.4 69.2,60.7 69.5,64.8 69.9,63.5 70.2,62.1 70.5,60.9 70.9,62.6 71.2,63.9 71.6,63.3 71.9,63.8 72.3,64.2 72.6,60.7 73.0,64.1 73.3,63.0 73.7,57.9 74.0,60.1 74.3,62.3 74.7,64.6 75.0,62.3 75.4,58.6 75.7,61.5 76.1,60.7 76.4,63.3 76.8,62.4 77.1,63.9 77.4,62.9 77.8,61.1 78.1,66.1 78.5,63.9 78.8,63.3 79.2,65.2 79.5,64.6 79.9,61.9 80.2,58.9 80.6,62.2 80.9,63.4 81.2,68.2 81.6,58.9 81.9,64.3 82.3,64.7 82.6,67.8 83.0,65.0 83.3,68.2 83.7,64.8 84.0,64.0 84.4,65.1 84.7,64.7 85.0,67.6 85.4,62.3 85.7,67.3 86.1,69.5 86.4,66.0 86.8,67.4 87.1,68.4 87.5,67.0 87.8,65.2 88.2,69.6 88.5,66.6 88.8,61.9 89.2,64.4 89.5,66.9 89.9,66.2 90.2,67.0 90.6,66.9 90.9,64.3 91.3,67.3 91.6,75.3 91.9,67.2 92.3,70.3 92.6,65.1 93.0,69.5 93.3,67.0 93.7,60.1 94.0,71.2 94.4,70.9 94.7,71.1 95.1,73.6 95.4,72.7 95.7,67.2 96.1,69.7 96.4,73.1 96.8,72.3 97.1,66.8 97.5,70.9 97.8,69.5 98.2,67.2 98.5,64.1 98.9,62.7 99.2,65.3 99.5,67.8 99.9,67.7 100.2,64.5 100.6,65.6 100.9,68.3 101.3,66.9 101.6,67.1 102.0,67.5 102.3,68.7 102.6,70.2 103.0,68.6 103.3,70.7 103.7,64.4 104.0,66.6 104.4,69.7 104.7,65.2 105.1,65.7 105.4,69.9 105.8,64.4 106.1,65.6 106.4,63.3 106.8,69.4 107.1,65.9 107.5,66.0 107.8,66.5 108.2,66.4 108.5,63.5 108.9,71.2 109.2,71.0 109.6,71.5 109.9,68.6 110.2,68.7 110.6,65.3 110.9,65.6 111.3,66.4 111.6,68.9 112.0,67.8 112.3,63.7 112.7,63.8 113.0,65.9 113.4,67.5 113.7,59.2 114.0,69.6 114.4,61.3 114.7,55.6 115.1,68.5 115.4,57.4 115.8,49.9 116.1,55.5 116.5,80.4 116.8,79.7 117.1,60.2 117.5,72.3 117.8,57.7 118.2,68.5 118.5,66.2 118.9,64.5 119.2,66.4 119.6,64.7 119.9,66.9 120.3,63.1 120.6,65.3 120.9,64.6 121.3,74.1 121.6,61.2 122.0,65.0 122.3,71.2 122.7,64.7 123.0,63.4 123.4,61.3 123.7,68.6 124.1,59.5 124.4,65.2 124.7,58.9 125.1,65.0 125.4,63.3 125.8,65.4 126.1,66.8 126.5,62.4 126.8,62.4 127.2,60.9 127.5,62.0 127.8,65.9 128.2,69.5 128.5,66.5 128.9,66.5 129.2,67.0 129.6,62.1 129.9,63.1 130.3,64.7 130.6,63.7 131.0,64.3 131.3,63.5 131.6,62.5 132.0,62.2 132.3,65.0 132.7,66.3 133.0,61.3 133.4,63.5 133.7,61.2 134.1,67.8 134.4,64.7 134.8,63.6 135.1,66.8 135.4,64.7 135.8,61.9 136.1,61.6 136.5,60.9 136.8,65.3 137.2,66.7 137.5,62.3 137.9,61.1 138.2,63.0 138.6,66.2 138.9,62.1 139.2,62.2 139.6,62.4 139.9,64.2 140.3,62.9 140.6,62.3 141.0,64.0 141.3,65.6 141.7,62.8 142.0,62.6 142.3,63.2 142.7,62.1 143.0,63.9 143.4,63.2 143.7,63.5 144.1,62.4 144.4,61.1 144.8,63.4 145.1,60.4 145.5,61.1 145.8,62.0 146.1,62.2 146.5,60.7 146.8,63.2 147.2,63.1 147.5,65.0 147.9,61.8 148.2,60.8 148.6,61.8 148.9,61.8 149.3,63.2 149.6,62.4 149.9,66.6 150.3,60.6 150.6,63.5 151.0,66.2 151.3,64.6 151.7,65.0 152.0,59.6 152.4,58.9 152.7,67.2 153.0,59.3 153.4,59.5 153.7,64.3 154.1,67.3 154.4,65.0 154.8,64.5 155.1,61.3 155.5,63.3 155.8,67.2 156.2,61.7 156.5,66.5 156.8,60.1 157.2,64.7 157.5,64.4 157.9,65.1 158.2,64.0 158.6,59.0 158.9,59.9 159.3,60.4 159.6,61.0 160.0,67.4 160.3,63.8 160.6,63.9 161.0,64.5 161.3,60.4 161.7,64.2 162.0,63.8 162.4,65.4 162.7,69.5 163.1,59.7 163.4,57.4 163.8,61.1 164.1,65.7 164.4,72.7 164.8,61.0 165.1,54.7 165.5,59.7 165.8,55.4 166.2,51.8 166.5,53.0 166.9,65.9 167.2,52.5 167.5,55.1 167.9,76.7 168.2,66.2 168.6,73.5 168.9,63.6 169.3,59.4 169.6,69.2 170.0,73.1 170.3,58.0 170.7,62.1 171.0,58.5 171.3,68.3 171.7,60.6 172.0,58.2 172.4,58.3 172.7,64.9 173.1,63.8 173.4,64.9 173.8,62.7 174.1,62.8 174.5,64.8 174.8,68.0 175.1,63.7 175.5,66.4 175.8,64.5 176.2,65.2 176.5,62.2 176.9,63.3 177.2,67.1 177.6,65.4 177.9,62.7 178.2,67.3 178.6,65.9 178.9,65.1 179.3,64.9 179.6,66.3 180.0,68.8 180.3,68.9 180.7,67.1 181.0,67.1 181.4,64.5 181.7,68.9 182.0,66.5 182.4,67.1 182.7,70.4 183.1,69.8 183.4,68.0 183.8,69.3 184.1,68.6 184.5,67.0 184.8,70.8 185.2,66.6 185.5,70.1 185.8,69.7 186.2,66.5 186.5,69.8 186.9,67.2 187.2,62.6 187.6,68.0 187.9,68.6 188.3,65.5 188.6,69.3 189.0,64.3 189.3,72.4 189.6,65.8 190.0,69.7 190.3,70.6 190.7,61.8 191.0,70.8 191.4,61.8 191.7,65.6 192.1,62.8 192.4,71.1 192.7,63.6 193.1,62.7 193.4,68.1 193.8,68.1 194.1,59.2 194.5,67.0 194.8,69.1 195.2,69.8 195.5,66.0 195.9,66.5 196.2,67.0 196.5,63.5 196.9,68.2 197.2,66.7 197.6,65.4 197.9,69.0 198.3,65.5 198.6,64.1 199.0,69.7 199.3,68.9 199.7,69.3 200.0,71.2 200.3,66.1 200.7,71.2 201.0,65.9 201.4,64.6 201.7,69.7 202.1,67.3 202.4,69.5 202.8,65.1 203.1,67.5 203.4,66.4 203.8,65.9 204.1,65.1 204.5,66.1 204.8,65.5 205.2,66.1 205.5,65.1 205.9,66.6 206.2,64.9 206.6,68.2 206.9,65.7 207.2,61.3 207.6,64.3 207.9,66.0 208.3,63.8 208.6,65.3 209.0,66.0 209.3,64.8 209.7,62.7 210.0,63.0 210.4,63.5 210.7,64.4 211.0,64.5 211.4,61.3 211.7,62.5 212.1,63.9 212.4,65.4 212.8,64.3 213.1,59.1 213.5,63.7 213.8,62.1 214.2,61.6 214.5,62.0 214.8,62.0 215.2,63.2 215.5,62.7 215.9,59.1 216.2,62.0 216.6,59.9 216.9,62.9 217.3,61.0 217.6,60.2 217.9,59.2 218.3,62.0 218.6,59.8 219.0,60.0 219.3,61.6 219.7,59.9 220.0,61.7 220.4,61.5 220.7,60.6 221.1,63.8 221.4,60.7 221.7,61.8 222.1,62.4 222.4,61.1 222.8,59.6 223.1,61.3 223.5,58.4 223.8,62.9 224.2,63.3 224.5,56.7 224.9,59.9 225.2,59.1 225.5,61.9 225.9,59.1 226.2,59.9 226.6,58.8 226.9,60.5 227.3,56.4 227.6,62.8 228.0,63.8 228.3,65.6 228.6,56.6 229.0,62.9 229.3,64.1 229.7,63.4 230.0,61.9 230.4,64.9 230.7,61.5 231.1,62.7 231.4,62.5 231.8,63.9 232.1,60.4 232.4,62.2 232.8,60.1 233.1,59.6 233.5,59.3 233.8,69.9 234.2,63.0 234.5,64.4 234.9,56.4 235.2,69.8 235.6,65.4 235.9,63.0 236.2,63.7 236.6,53.2 236.9,65.3 237.3,52.4 237.6,76.6 238.0,81.2 238.3,48.9 238.7,57.4 239.0,47.3 239.4,61.2 239.7,76.5 240.0,75.8 240.4,53.4 240.7,68.3 241.1,54.6 241.4,62.8 241.8,78.6 242.1,72.7 242.5,57.3 242.8,64.9 243.1,66.4 243.5,63.3 243.8,66.2 244.2,66.3 244.5,64.6 244.9,64.7 245.2,61.4 245.6,65.3 245.9,61.4 246.3,62.4 246.6,62.7 246.9,64.5 247.3,66.0 247.6,66.1 248.0,66.7 248.3,67.9 248.7,66.9 249.0,68.0 249.4,64.7 249.7,66.2 250.1,68.4 250.4,71.8 250.7,67.9 251.1,68.7 251.4,69.8 251.8,70.0 252.1,72.2 252.5,67.3 252.8,68.6 253.2,60.7 253.5,68.5 253.8,68.9 254.2,62.9 254.5,68.1 254.9,68.0 255.2,69.9 255.6,70.8 255.9,62.4 256.3,64.4 256.6,60.6 257.0,70.4 257.3,68.5 257.6,73.1 258.0,64.0 258.3,75.9 258.7,66.0 259.0,63.6 259.4,61.9 259.7,73.3 260.1,63.7 260.4,72.3 260.8,72.4 261.1,75.0 261.4,64.1 261.8,63.2 262.1,70.9 262.5,71.4 262.8,70.0 263.2,62.7 263.5,66.5 263.9,70.3 264.2,73.3 264.6,71.1 264.9,66.2 265.2,64.5 265.6,69.9 265.9,71.3 266.3,70.8 266.6,75.7 267.0,66.7 267.3,72.4 267.7,66.4 268.0,72.8 268.3,72.6 268.7,68.6 269.0,71.1 269.4,67.6 269.7,69.4 270.1,72.2 270.4,67.7 270.8,67.5 271.1,72.8 271.5,64.6 271.8,67.9 272.1,67.5 272.5,71.7 272.8,69.7 273.2,69.2 273.5,66.6 273.9,71.6 274.2,70.4 274.6,74.7 274.9,69.1 275.3,67.5 275.6,72.6 275.9,69.8 276.3,67.0 276.6,65.1 277.0,66.7 277.3,68.6 277.7,69.9 278.0,69.4 278.4,68.8 278.7,67.4 279.0,67.7 279.4,64.7 279.7,67.0 280.1,69.5 280.4,63.5 280.8,65.1 281.1,66.9 281.5,68.8 281.8,71.3 282.2,69.6 282.5,64.0 282.8,69.2 283.2,70.5 283.5,66.2 283.9,66.1 284.2,65.3 284.6,65.2 284.9,63.5 285.3,67.8 285.6,65.1 286.0,67.6 286.3,65.2 286.6,65.9 287.0,65.6 287.3,64.4 287.7,65.9 288.0,63.9 288.4,64.5 288.7,65.4 289.1,66.2 289.4,66.5 289.8,66.1 290.1,65.6 290.4,65.2 290.8,60.9 291.1,63.6 291.5,63.4 291.8,67.2 292.2,66.4 292.5,65.4 292.9,64.0 293.2,67.4 293.5,60.6 293.9,65.2 294.2,62.2 294.6,69.0 294.9,64.0 295.3,62.9 295.6,63.1 296.0,61.6 296.3,62.7 296.7,63.0 297.0,69.9 297.3,65.8 297.7,71.1 298.0,62.0 298.4,62.4 298.7,63.4 299.1,64.8 299.4,64.7 299.8,56.9 300.1,57.6 300.5,62.7 300.8,59.6 301.1,65.6 301.5,66.6 301.8,63.3 302.2,64.1 302.5,63.2 302.9,61.4 303.2,54.9 303.6,63.4 303.9,61.5 304.2,61.0 304.6,61.8 304.9,59.2 305.3,56.7 305.6,64.9 306.0,61.5 306.3,62.7 306.7,61.2 307.0,66.4 307.4,67.3 307.7,69.8 308.0,60.5 308.4,61.6 308.7,62.1 309.1,68.7 309.4,63.4 309.8,64.3 310.1,66.1 310.5,64.9 310.8,60.6 311.2,61.2 311.5,62.7 311.8,61.8 312.2,63.7 312.5,62.6 312.9,62.7 313.2,61.6 313.6,63.1 313.9,63.4 314.3,63.3 314.6,64.9 315.0,55.4 315.3,61.4 315.6,61.7 316.0,55.4 316.3,58.5 316.7,68.4 317.0,61.1 317.4,60.5 317.7,57.0 318.1,59.0 318.4,60.9 318.7,67.6 319.1,66.3 319.4,62.8 319.8,62.0 320.1,67.0 320.5,65.1 320.8,64.9 321.2,63.7 321.5,63.2 321.9,64.5 322.2,66.2 322.5,62.0 322.9,61.0 323.2,64.4 323.6,62.3 323.9,63.3 324.3,62.6 324.6,63.1 325.0,66.5 325.3,62.6 325.7,61.2 326.0,66.8 326.3,57.8 326.7,57.4 327.0,58.4 327.4,58.2 327.7,62.2 328.1,65.9 328.4,66.9 328.8,67.7 329.1,64.6 329.4,65.1 329.8,62.8 330.1,70.5 330.5,59.9 330.8,60.1 331.2,65.2 331.5,64.2 331.9,64.6 332.2,64.9 332.6,65.7 332.9,65.6 333.2,66.5 333.6,65.3 333.9,65.6 334.3,65.2 334.6,66.9 335.0,65.6 335.3,65.6 335.7,64.4 336.0,68.0 336.4,65.3 336.7,64.0 337.0,64.9 337.4,66.6 337.7,67.0 338.1,66.4 338.4,64.9 338.8,63.4 339.1,66.3 339.5,67.0 339.8,65.4 340.2,65.8 340.5,67.5 340.8,67.3 341.2,66.3 341.5,64.8 341.9,69.0 342.2,68.5 342.6,64.8 342.9,69.1 343.3,65.8 343.6,65.3 343.9,66.4 344.3,69.1 344.6,66.3 345.0,67.1 345.3,65.3 345.7,67.9 346.0,63.8 346.4,70.3 346.7,66.6 347.1,66.1 347.4,63.5 347.7,68.1 348.1,64.5 348.4,67.6 348.8,63.9 349.1,61.0 349.5,67.2 349.8,65.0 350.2,68.3 350.5,63.7 350.9,62.9 351.2,66.0 351.5,68.7 351.9,65.2 352.2,63.9 352.6,63.7 352.9,64.4 353.3,69.8 353.6,67.7 354.0,62.1 354.3,69.1 354.6,63.2 355.0,61.9 355.3,63.7 355.7,62.9 356.0,67.2 356.4,69.6 356.7,66.2 357.1,66.5 357.4,65.8 357.8,63.6 358.1,66.0 358.4,64.8 358.8,63.9 359.1,65.2 359.5,55.5 359.8,62.8 360.2,64.4 360.5,66.2 360.9,69.4 361.2,54.1 361.6,63.3 361.9,74.9 362.2,70.0 362.6,50.2 362.9,68.2 363.3,77.1 363.6,74.1 364.0,60.2 364.3,62.8 364.7,71.6 365.0,63.4 365.4,64.0 365.7,61.6 366.0,65.1 366.4,62.3 366.7,68.9 367.1,65.6 367.4,61.4 367.8,60.7 368.1,62.9 368.5,64.4 368.8,60.1 369.1,67.6 369.5,64.7 369.8,60.8 370.2,60.5 370.5,64.8 370.9,67.0 371.2,58.8 371.6,61.6 371.9,63.8 372.3,61.7 372.6,60.0 372.9,67.0 373.3,59.6 373.6,60.2 374.0,66.5 374.3,60.2 374.7,65.2 375.0,59.4 375.4,60.9 375.7,57.0 376.1,62.8 376.4,61.9 376.7,59.8 377.1,63.2 377.4,63.3 377.8,62.7 378.1,62.1 378.5,63.8 378.8,61.3 379.2,61.3 379.5,62.0 379.8,60.0 380.2,62.6 380.5,60.5 380.9,62.9 381.2,61.2 381.6,64.7 381.9,61.9 382.3,62.6 382.6,63.1 383.0,63.3 383.3,62.9 383.6,63.3 384.0,65.2 384.3,63.2 384.7,63.1 385.0,63.1 385.4,64.1 385.7,62.7 386.1,60.9 386.4,63.1 386.8,63.6 387.1,59.7 387.4,60.6 387.8,60.8 388.1,60.4 388.5,63.2 388.8,62.9 389.2,61.1 389.5,63.5 389.9,62.9 390.2,62.2 390.6,62.3 390.9,63.6 391.2,61.7 391.6,63.5 391.9,62.4 392.3,62.0 392.6,62.1 393.0,62.6 393.3,65.4 393.7,66.0 394.0,64.9 394.3,63.1 394.7,62.2 395.0,66.1 395.4,63.8 395.7,65.8 396.1,65.7 396.4,65.1 396.8,63.6 397.1,64.4 397.5,63.0" fill="none" stroke="#1a1aff" stroke-width="0.95" stroke-linejoin="miter"/><rect x="45.0" y="12.0" width="352.8" height="127.19999999999993" fill="none" stroke="#727272" stroke-width="1.5"/><rect x="301.00" y="20.00" width="14.5" height="11.5" fill="#fff" stroke="#ccc" stroke-width="1"/><rect x="303.00" y="22.00" width="10.5" height="7.5" fill="#00f"/><path d="M396.30 3.00L406.00 12.70L396.30 22.40L386.60 12.70Z" fill="#f00"/></svg>
<div class="t" style="left:127.91px;top:820.65px;font:12.6px/12.6px 'Liberation Serif', serif;color:#545454;">6000</div>
<div class="t" style="left:127.91px;top:800.17px;font:12.6px/12.6px 'Liberation Serif', serif;color:#545454;">6500</div>
<div class="t" style="left:127.91px;top:779.68px;font:12.6px/12.6px 'Liberation Serif', serif;color:#545454;">7000</div>
<div class="t" style="left:127.91px;top:759.20px;font:12.6px/12.6px 'Liberation Serif', serif;color:#545454;">7500</div>
<div class="t" style="left:127.91px;top:738.72px;font:12.6px/12.6px 'Liberation Serif', serif;color:#545454;">8000</div>
<div class="t" style="left:127.91px;top:718.23px;font:12.6px/12.6px 'Liberation Serif', serif;color:#545454;">8500</div>
<div class="t" style="left:127.91px;top:697.75px;font:12.6px/12.6px 'Liberation Serif', serif;color:#545454;">9000</div>
<div class="t" style="left:154.85px;top:830.95px;font:12.6px/12.6px 'Liberation Serif', serif;color:#545454;">0</div>
<div class="t" style="left:217.60px;top:830.95px;font:12.6px/12.6px 'Liberation Serif', serif;color:#545454;">200</div>
<div class="t" style="left:286.64px;top:830.95px;font:12.6px/12.6px 'Liberation Serif', serif;color:#545454;">400</div>
<div class="t" style="left:355.68px;top:830.95px;font:12.6px/12.6px 'Liberation Serif', serif;color:#545454;">600</div>
<div class="t" style="left:424.72px;top:830.95px;font:12.6px/12.6px 'Liberation Serif', serif;color:#545454;">800</div>
<div class="t" style="left:490.61px;top:830.95px;font:12.6px/12.6px 'Liberation Serif', serif;color:#545454;">1000</div>
<div class="t" style="left:431.50px;top:707.70px;font:12.3px/12.3px 'Liberation Serif', serif;color:#8a8a8a;transform:scaleX(1.0697);">aida15 1.8.W</div>
<svg style="left:747.5px;top:688.3px" width="422.29999999999995" height="167.0"><line x1="113.94" y1="12.0" x2="113.94" y2="139.0" stroke="#d2d2d2" stroke-width="1"/><line x1="182.89" y1="12.0" x2="182.89" y2="139.0" stroke="#d2d2d2" stroke-width="1"/><line x1="251.83" y1="12.0" x2="251.83" y2="139.0" stroke="#d2d2d2" stroke-width="1"/><line x1="320.77" y1="12.0" x2="320.77" y2="139.0" stroke="#d2d2d2" stroke-width="1"/><line x1="389.72" y1="12.0" x2="389.72" y2="139.0" stroke="#d2d2d2" stroke-width="1"/><line x1="45.0" y1="115.56" x2="397.29999999999995" y2="115.56" stroke="#d2d2d2" stroke-width="1"/><line x1="45.0" y1="92.12" x2="397.29999999999995" y2="92.12" stroke="#d2d2d2" stroke-width="1"/><line x1="45.0" y1="68.68" x2="397.29999999999995" y2="68.68" stroke="#d2d2d2" stroke-width="1"/><line x1="45.0" y1="45.24" x2="397.29999999999995" y2="45.24" stroke="#d2d2d2" stroke-width="1"/><line x1="45.0" y1="21.80" x2="397.29999999999995" y2="21.80" stroke="#d2d2d2" stroke-width="1"/><polyline points="45.0,54.2 45.3,54.7 45.7,54.2 46.0,54.4 46.4,55.6 46.7,55.5 47.1,55.7 47.4,55.9 47.8,55.6 48.1,55.9 48.4,55.9 48.8,55.7 49.1,56.3 49.5,56.1 49.8,56.5 50.2,57.4 50.5,56.8 50.9,56.5 51.2,56.3 51.5,57.5 51.9,56.7 52.2,56.6 52.6,57.9 52.9,57.9 53.3,58.1 53.6,58.6 54.0,59.0 54.3,60.2 54.7,59.3 55.0,59.6 55.3,59.3 55.7,58.0 56.0,56.1 56.4,56.8 56.7,57.8 57.1,58.3 57.4,58.0 57.8,58.3 58.1,59.2 58.4,60.1 58.8,60.8 59.1,60.6 59.5,61.0 59.8,59.8 60.2,59.1 60.5,57.7 60.9,57.5 61.2,57.2 61.5,56.9 61.9,56.7 62.2,55.8 62.6,56.2 62.9,55.4 63.3,56.7 63.6,56.0 64.0,56.2 64.3,55.8 64.6,55.5 65.0,54.1 65.3,54.8 65.7,55.9 66.0,56.4 66.4,57.5 66.7,57.5 67.1,58.6 67.4,58.7 67.8,58.3 68.1,58.8 68.4,58.2 68.8,58.3 69.1,59.6 69.5,59.8 69.8,58.6 70.2,59.6 70.5,60.4 70.9,60.5 71.2,59.9 71.5,61.3 71.9,60.9 72.2,61.7 72.6,61.9 72.9,61.1 73.3,62.7 73.6,62.9 74.0,61.6 74.3,60.4 74.6,61.7 75.0,62.2 75.3,62.6 75.7,63.0 76.0,62.6 76.4,63.6 76.7,63.5 77.1,63.3 77.4,64.7 77.7,64.8 78.1,64.4 78.4,62.4 78.8,63.6 79.1,64.3 79.5,63.6 79.8,63.5 80.2,63.5 80.5,63.8 80.9,63.9 81.2,62.5 81.5,61.9 81.9,61.7 82.2,61.6 82.6,61.1 82.9,61.1 83.3,60.6 83.6,59.9 84.0,60.7 84.3,59.0 84.6,59.2 85.0,59.5 85.3,58.2 85.7,57.6 86.0,56.8 86.4,55.2 86.7,54.3 87.1,55.1 87.4,55.8 87.7,56.5 88.1,56.3 88.4,55.1 88.8,55.7 89.1,55.7 89.5,56.2 89.8,55.0 90.2,54.1 90.5,53.7 90.8,54.5 91.2,53.8 91.5,53.9 91.9,53.0 92.2,53.2 92.6,53.8 92.9,53.8 93.3,53.5 93.6,54.0 93.9,54.4 94.3,54.1 94.6,55.0 95.0,54.8 95.3,54.6 95.7,54.5 96.0,54.0 96.4,53.6 96.7,54.0 97.1,52.6 97.4,52.1 97.7,53.4 98.1,53.6 98.4,53.6 98.8,53.7 99.1,52.7 99.5,52.9 99.8,53.7 100.2,54.1 100.5,53.8 100.8,54.5 101.2,54.4 101.5,55.4 101.9,53.7 102.2,54.6 102.6,55.1 102.9,54.1 103.3,55.0 103.6,54.9 103.9,53.5 104.3,54.3 104.6,54.9 105.0,55.2 105.3,56.4 105.7,56.1 106.0,55.1 106.4,55.3 106.7,55.3 107.0,55.0 107.4,55.2 107.7,55.2 108.1,53.5 108.4,52.9 108.8,53.3 109.1,52.3 109.5,51.5 109.8,52.2 110.2,52.6 110.5,51.4 110.8,49.6 111.2,48.8 111.5,48.4 111.9,48.9 112.2,48.7 112.6,49.4 112.9,49.4 113.3,49.4 113.6,49.9 113.9,49.8 114.3,49.2 114.6,49.4 115.0,49.8 115.3,50.0 115.7,50.7 116.0,51.8 116.4,53.1 116.7,52.4 117.0,51.8 117.4,51.9 117.7,50.5 118.1,50.5 118.4,50.0 118.8,48.7 119.1,49.5 119.5,49.4 119.8,50.0 120.1,50.5 120.5,51.3 120.8,51.7 121.2,53.0 121.5,53.1 121.9,53.5 122.2,53.7 122.6,54.1 122.9,52.9 123.3,51.6 123.6,50.6 123.9,49.9 124.3,50.6 124.6,50.9 125.0,50.4 125.3,50.9 125.7,50.8 126.0,51.2 126.4,50.7 126.7,51.2 127.0,51.9 127.4,52.6 127.7,54.0 128.1,54.9 128.4,56.8 128.8,57.1 129.1,57.3 129.5,55.4 129.8,56.1 130.1,56.2 130.5,56.3 130.8,56.1 131.2,56.2 131.5,57.0 131.9,58.1 132.2,58.7 132.6,58.5 132.9,57.2 133.2,57.8 133.6,58.7 133.9,58.5 134.3,59.3 134.6,59.1 135.0,58.7 135.3,57.9 135.7,57.1 136.0,57.9 136.3,58.2 136.7,58.2 137.0,58.4 137.4,59.2 137.7,59.6 138.1,58.7 138.4,59.4 138.8,59.0 139.1,59.5 139.5,60.7 139.8,60.6 140.1,61.1 140.5,59.8 140.8,60.3 141.2,59.7 141.5,59.8 141.9,58.6 142.2,58.6 142.6,58.9 142.9,59.0 143.2,58.9 143.6,58.7 143.9,58.2 144.3,59.7 144.6,60.1 145.0,59.1 145.3,58.3 145.7,58.3 146.0,57.5 146.3,58.9 146.7,58.7 147.0,58.2 147.4,60.2 147.7,60.5 148.1,60.6 148.4,61.0 148.8,59.8 149.1,59.4 149.4,61.2 149.8,61.4 150.1,61.4 150.5,61.4 150.8,60.6 151.2,60.2 151.5,59.9 151.9,60.7 152.2,59.7 152.6,61.1 152.9,60.9 153.2,61.4 153.6,60.3 153.9,60.9 154.3,61.2 154.6,61.0 155.0,61.4 155.3,61.5 155.7,61.1 156.0,60.7 156.3,62.3 156.7,63.3 157.0,62.4 157.4,61.6 157.7,62.9 158.1,61.4 158.4,61.6 158.8,61.6 159.1,61.5 159.4,60.9 159.8,58.5 160.1,60.8 160.5,61.0 160.8,60.6 161.2,59.2 161.5,59.2 161.9,60.6 162.2,61.4 162.5,58.8 162.9,60.4 163.2,58.2 163.6,58.3 163.9,58.8 164.3,58.4 164.6,58.4 165.0,58.8 165.3,58.3 165.7,58.1 166.0,57.1 166.3,56.7 166.7,56.6 167.0,57.3 167.4,56.9 167.7,57.3 168.1,57.4 168.4,57.4 168.8,58.2 169.1,58.0 169.4,59.1 169.8,58.4 170.1,57.9 170.5,57.6 170.8,56.5 171.2,56.9 171.5,56.7 171.9,57.2 172.2,56.3 172.5,55.9 172.9,56.1 173.2,56.2 173.6,55.5 173.9,56.0 174.3,55.4 174.6,55.2 175.0,53.3 175.3,53.4 175.6,53.7 176.0,54.0 176.3,54.6 176.7,53.6 177.0,54.3 177.4,53.3 177.7,55.2 178.1,54.9 178.4,56.6 178.7,55.7 179.1,54.7 179.4,54.4 179.8,54.2 180.1,53.7 180.5,54.7 180.8,54.5 181.2,53.8 181.5,52.9 181.9,52.4 182.2,52.5 182.5,52.6 182.9,53.8 183.2,54.0 183.6,53.6 183.9,52.9 184.3,51.7 184.6,52.5 185.0,53.4 185.3,51.5 185.6,53.1 186.0,52.4 186.3,52.5 186.7,53.3 187.0,53.4 187.4,52.9 187.7,53.7 188.1,52.6 188.4,52.9 188.7,52.3 189.1,52.6 189.4,52.4 189.8,51.9 190.1,53.0 190.5,54.1 190.8,54.8 191.2,55.1 191.5,55.1 191.8,54.3 192.2,54.5 192.5,54.3 192.9,56.2 193.2,55.2 193.6,54.4 193.9,55.0 194.3,53.8 194.6,54.6 195.0,54.5 195.3,53.7 195.6,54.3 196.0,54.2 196.3,54.0 196.7,51.7 197.0,52.7 197.4,52.1 197.7,52.9 198.1,55.0 198.4,55.4 198.7,55.8 199.1,55.7 199.4,55.8 199.8,56.0 200.1,56.2 200.5,55.9 200.8,55.6 201.2,54.8 201.5,55.4 201.8,56.7 202.2,55.6 202.5,55.3 202.9,55.2 203.2,55.6 203.6,55.6 203.9,54.7 204.3,55.5 204.6,54.2 204.9,53.6 205.3,54.1 205.6,55.2 206.0,55.9 206.3,56.2 206.7,57.0 207.0,56.2 207.4,56.0 207.7,55.4 208.1,55.5 208.4,55.7 208.7,55.3 209.1,54.8 209.4,55.8 209.8,57.5 210.1,58.1 210.5,58.9 210.8,58.3 211.2,56.4 211.5,57.6 211.8,56.8 212.2,57.2 212.5,57.5 212.9,59.3 213.2,59.5 213.6,59.4 213.9,59.9 214.3,59.4 214.6,59.7 214.9,59.7 215.3,58.3 215.6,57.4 216.0,59.2 216.3,59.1 216.7,59.9 217.0,60.4 217.4,61.6 217.7,62.1 218.0,60.9 218.4,59.7 218.7,57.7 219.1,58.7 219.4,59.2 219.8,59.5 220.1,59.9 220.5,60.7 220.8,60.0 221.1,60.0 221.5,59.8 221.8,59.6 222.2,60.7 222.5,60.9 222.9,62.2 223.2,61.5 223.6,60.7 223.9,60.6 224.3,61.2 224.6,61.1 224.9,60.4 225.3,60.1 225.6,60.8 226.0,60.9 226.3,60.8 226.7,60.3 227.0,60.7 227.4,62.1 227.7,60.8 228.0,59.4 228.4,61.0 228.7,59.8 229.1,58.1 229.4,59.2 229.8,58.2 230.1,58.5 230.5,58.8 230.8,59.1 231.1,59.9 231.5,60.2 231.8,59.3 232.2,59.7 232.5,59.9 232.9,59.0 233.2,59.3 233.6,59.4 233.9,58.8 234.2,59.7 234.6,60.0 234.9,61.3 235.3,60.8 235.6,60.6 236.0,60.7 236.3,61.4 236.7,61.4 237.0,61.7 237.4,60.9 237.7,60.7 238.0,61.3 238.4,59.8 238.7,60.9 239.1,59.3 239.4,58.4 239.8,58.9 240.1,59.0 240.5,59.2 240.8,59.3 241.1,58.3 241.5,57.3 241.8,57.6 242.2,58.3 242.5,58.4 242.9,58.8 243.2,59.4 243.6,58.7 243.9,58.4 244.2,58.0 244.6,57.2 244.9,58.3 245.3,58.3 245.6,58.1 246.0,58.2 246.3,57.8 246.7,58.6 247.0,58.1 247.3,57.6 247.7,57.5 248.0,55.2 248.4,56.4 248.7,57.0 249.1,57.5 249.4,56.0 249.8,56.5 250.1,55.3 250.5,55.9 250.8,56.2 251.1,54.8 251.5,55.4 251.8,54.5 252.2,55.8 252.5,56.3 252.9,56.5 253.2,57.2 253.6,57.4 253.9,58.8 254.2,57.9 254.6,57.2 254.9,56.1 255.3,56.2 255.6,56.2 256.0,55.8 256.3,55.6 256.7,55.0 257.0,54.6 257.3,55.9 257.7,55.8 258.0,55.8 258.4,55.0 258.7,55.1 259.1,55.4 259.4,55.3 259.8,55.1 260.1,55.1 260.4,56.0 260.8,55.9 261.1,55.2 261.5,54.8 261.8,55.1 262.2,56.2 262.5,56.8 262.9,56.1 263.2,56.7 263.6,57.0 263.9,56.8 264.2,58.2 264.6,58.0 264.9,57.7 265.3,57.4 265.6,58.1 266.0,56.9 266.3,55.0 266.7,54.9 267.0,55.0 267.3,56.2 267.7,56.0 268.0,56.8 268.4,57.0 268.7,57.4 269.1,57.1 269.4,57.1 269.8,57.0 270.1,56.0 270.4,57.3 270.8,57.4 271.1,57.8 271.5,57.1 271.8,56.3 272.2,56.3 272.5,56.1 272.9,54.8 273.2,54.6 273.5,55.6 273.9,55.5 274.2,54.0 274.6,54.4 274.9,54.6 275.3,53.8 275.6,53.0 276.0,53.6 276.3,53.5 276.6,54.1 277.0,53.0 277.3,52.9 277.7,52.8 278.0,52.9 278.4,54.0 278.7,54.5 279.1,54.4 279.4,54.1 279.8,53.7 280.1,54.0 280.4,53.6 280.8,53.4 281.1,53.4 281.5,55.1 281.8,56.2 282.2,56.4 282.5,55.3 282.9,54.9 283.2,54.2 283.5,54.2 283.9,53.6 284.2,53.0 284.6,52.1 284.9,52.6 285.3,53.6 285.6,53.1 286.0,53.4 286.3,54.7 286.6,53.5 287.0,53.4 287.3,52.3 287.7,52.2 288.0,53.5 288.4,52.9 288.7,54.4 289.1,53.6 289.4,52.7 289.7,52.5 290.1,53.4 290.4,53.7 290.8,54.3 291.1,52.6 291.5,54.4 291.8,52.9 292.2,53.5 292.5,54.1 292.9,55.4 293.2,56.1 293.5,55.6 293.9,56.0 294.2,55.7 294.6,55.0 294.9,55.0 295.3,54.9 295.6,55.3 296.0,56.1 296.3,55.3 296.6,55.2 297.0,57.1 297.3,57.7 297.7,57.9 298.0,57.1 298.4,57.4 298.7,58.0 299.1,58.1 299.4,58.4 299.7,57.7 300.1,59.2 300.4,58.7 300.8,58.1 301.1,58.1 301.5,58.5 301.8,58.1 302.2,57.1 302.5,57.6 302.8,58.3 303.2,58.7 303.5,58.2 303.9,57.5 304.2,58.4 304.6,57.2 304.9,57.5 305.3,58.5 305.6,58.9 306.0,58.5 306.3,57.6 306.6,58.3 307.0,58.9 307.3,59.3 307.7,57.8 308.0,58.5 308.4,58.4 308.7,58.2 309.1,58.4 309.4,58.9 309.7,59.9 310.1,59.9 310.4,60.0 310.8,60.8 311.1,61.0 311.5,60.4 311.8,60.2 312.2,60.0 312.5,58.9 312.8,58.5 313.2,59.2 313.5,59.2 313.9,60.1 314.2,60.3 314.6,60.0 314.9,59.1 315.3,59.5 315.6,59.1 315.9,59.3 316.3,58.3 316.6,57.4 317.0,56.9 317.3,57.7 317.7,57.6 318.0,58.1 318.4,58.7 318.7,58.8 319.0,59.0 319.4,58.6 319.7,59.0 320.1,58.5 320.4,57.8 320.8,58.5 321.1,59.1 321.5,59.4 321.8,58.5 322.2,58.2 322.5,59.1 322.8,58.3 323.2,56.9 323.5,56.6 323.9,56.2 324.2,56.5 324.6,56.2 324.9,55.6 325.3,56.0 325.6,54.5 325.9,54.1 326.3,54.8 326.6,57.1 327.0,58.6 327.3,58.1 327.7,57.2 328.0,56.5 328.4,56.8 328.7,57.7 329.0,57.1 329.4,56.5 329.7,56.6 330.1,56.7 330.4,55.4 330.8,55.6 331.1,56.0 331.5,55.1 331.8,55.3 332.1,55.0 332.5,53.6 332.8,54.7 333.2,54.5 333.5,55.5 333.9,55.9 334.2,54.7 334.6,56.3 334.9,55.7 335.3,56.8 335.6,56.2 335.9,57.2 336.3,56.6 336.6,57.1 337.0,56.3 337.3,55.5 337.7,55.0 338.0,54.9 338.4,55.2 338.7,55.1 339.0,55.0 339.4,54.6 339.7,53.8 340.1,53.8 340.4,54.8 340.8,55.1 341.1,54.9 341.5,56.2 341.8,55.6 342.1,54.9 342.5,55.4 342.8,55.2 343.2,55.7 343.5,54.6 343.9,55.3 344.2,55.3 344.6,54.5 344.9,54.9 345.2,56.4 345.6,56.7 345.9,55.3 346.3,54.9 346.6,55.2 347.0,54.8 347.3,54.5 347.7,54.9 348.0,56.8 348.4,56.7 348.7,57.9 349.0,58.1 349.4,57.2 349.7,57.4 350.1,56.9 350.4,56.4 350.8,56.2 351.1,55.6 351.5,54.9 351.8,55.0 352.1,54.5 352.5,54.0 352.8,54.0 353.2,53.6 353.5,53.5 353.9,53.6 354.2,55.1 354.6,54.7 354.9,54.1 355.2,54.3 355.6,54.2 355.9,53.4 356.3,54.5 356.6,55.2 357.0,55.0 357.3,55.1 357.7,55.1 358.0,54.6 358.3,54.3 358.7,54.4 359.0,54.0 359.4,54.4 359.7,56.1 360.1,56.0 360.4,56.5 360.8,54.7 361.1,55.1 361.4,55.6 361.8,54.9 362.1,54.6 362.5,54.6 362.8,56.5 363.2,56.7 363.5,56.4 363.9,56.2 364.2,56.9 364.6,56.7 364.9,55.6 365.2,55.7 365.6,54.8 365.9,54.8 366.3,55.5 366.6,56.3 367.0,56.4 367.3,57.6 367.7,58.2 368.0,58.0 368.3,58.5 368.7,58.0 369.0,58.4 369.4,57.8 369.7,57.9 370.1,58.2 370.4,58.2 370.8,58.8 371.1,58.6 371.4,58.7 371.8,58.5 372.1,58.9 372.5,60.0 372.8,59.5 373.2,59.8 373.5,59.0 373.9,59.3 374.2,58.5 374.5,58.9 374.9,58.2 375.2,58.5 375.6,58.6 375.9,58.5 376.3,59.5 376.6,59.3 377.0,58.5 377.3,61.0 377.7,60.6 378.0,60.3 378.3,60.0 378.7,61.0 379.0,59.4 379.4,59.1 379.7,59.3 380.1,59.0 380.4,58.1 380.8,59.1 381.1,58.7 381.4,60.9 381.8,61.4 382.1,62.1 382.5,62.7 382.8,62.5 383.2,61.8 383.5,60.8 383.9,61.5 384.2,62.0 384.5,62.3 384.9,63.0 385.2,62.1 385.6,62.2 385.9,62.5 386.3,61.7 386.6,61.5 387.0,61.0 387.3,61.1 387.6,61.4 388.0,61.2 388.3,62.1 388.7,60.6 389.0,60.5 389.4,61.3 389.7,60.4 390.1,60.6 390.4,60.2 390.8,60.7 391.1,61.5 391.4,59.3 391.8,59.8 392.1,60.8 392.5,60.5 392.8,61.4 393.2,60.3 393.5,61.2 393.9,60.9 394.2,59.8 394.5,59.2 394.9,59.6 395.2,60.9 395.6,59.8 395.9,60.2 396.3,60.3 396.6,60.7 397.0,60.8" fill="none" stroke="#1a1aff" stroke-width="1.15" stroke-linejoin="miter"/><rect x="45.0" y="12.0" width="352.29999999999995" height="127.0" fill="none" stroke="#000" stroke-width="2"/><rect x="300.50" y="20.00" width="14.5" height="11.5" fill="#fff" stroke="#ccc" stroke-width="1"/><rect x="302.50" y="22.00" width="10.5" height="7.5" fill="#00f"/><path d="M395.80 3.00L405.50 12.70L395.80 22.40L386.10 12.70Z" fill="#0f0"/></svg>
<div class="t" style="left:763.41px;top:820.65px;font:12.6px/12.6px 'Liberation Serif', serif;color:#545454;">6000</div>
<div class="t" style="left:763.41px;top:797.21px;font:12.6px/12.6px 'Liberation Serif', serif;color:#545454;">6500</div>
<div class="t" style="left:763.41px;top:773.77px;font:12.6px/12.6px 'Liberation Serif', serif;color:#545454;">7000</div>
<div class="t" style="left:763.41px;top:750.33px;font:12.6px/12.6px 'Liberation Serif', serif;color:#545454;">7500</div>
<div class="t" style="left:763.41px;top:726.89px;font:12.6px/12.6px 'Liberation Serif', serif;color:#545454;">8000</div>
<div class="t" style="left:763.41px;top:703.45px;font:12.6px/12.6px 'Liberation Serif', serif;color:#545454;">8500</div>
<div class="t" style="left:790.35px;top:830.95px;font:12.6px/12.6px 'Liberation Serif', serif;color:#545454;">0</div>
<div class="t" style="left:853.00px;top:830.95px;font:12.6px/12.6px 'Liberation Serif', serif;color:#545454;">200</div>
<div class="t" style="left:921.94px;top:830.95px;font:12.6px/12.6px 'Liberation Serif', serif;color:#545454;">400</div>
<div class="t" style="left:990.88px;top:830.95px;font:12.6px/12.6px 'Liberation Serif', serif;color:#545454;">600</div>
<div class="t" style="left:1059.83px;top:830.95px;font:12.6px/12.6px 'Liberation Serif', serif;color:#545454;">800</div>
<div class="t" style="left:1125.62px;top:830.95px;font:12.6px/12.6px 'Liberation Serif', serif;color:#545454;">1000</div>
<div class="t" style="left:1066.50px;top:707.90px;font:12.3px/12.3px 'Liberation Serif', serif;color:#000;transform:scaleX(1.0697);">aida16 1.8.W</div>
<div class="a" style="left:6px;top:359px;width:1908px;height:2px;background:linear-gradient(#ff0000 50%,#b00000 50%);"></div>
<div class="a" style="left:6px;top:521px;width:1908px;height:2px;background:linear-gradient(#ff0000 50%,#b00000 50%);"></div>
<div class="a" style="left:6px;top:683px;width:1908px;height:2px;background:linear-gradient(#ff0000 50%,#b00000 50%);"></div>
<div class="a" style="left:6px;top:845px;width:1908px;height:2px;background:linear-gradient(#ff0000 50%,#b00000 50%);"></div>
<div class="a" style="left:6px;top:359px;width:2px;height:488px;background:linear-gradient(to right,#ff0000 50%,#b00000 50%);"></div>
<div class="a" style="left:641px;top:359px;width:2px;height:488px;background:linear-gradient(to right,#ff0000 50%,#b00000 50%);"></div>
<div class="a" style="left:1277px;top:359px;width:2px;height:488px;background:linear-gradient(to right,#ff0000 50%,#b00000 50%);"></div>
<div class="a" style="left:1912px;top:359px;width:2px;height:488px;background:linear-gradient(to right,#ff0000 50%,#b00000 50%);"></div>

<svg style="left:0;top:280px" width="600" height="40">
 <defs>
  <radialGradient id="gy" cx="0.4" cy="0.35" r="0.7"><stop offset="0" stop-color="#fff27a"/><stop offset="0.6" stop-color="#f2c200"/><stop offset="1" stop-color="#c99400"/></radialGradient>
  <radialGradient id="gb" cx="0.4" cy="0.35" r="0.7"><stop offset="0" stop-color="#777"/><stop offset="0.5" stop-color="#222"/><stop offset="1" stop-color="#000"/></radialGradient>
  <linearGradient id="gbl" x1="0" y1="0" x2="1" y2="1"><stop offset="0" stop-color="#9fd4f7"/><stop offset="1" stop-color="#1a6fd0"/></linearGradient>
  <radialGradient id="gbc" cx="0.5" cy="0.5" r="0.5"><stop offset="0" stop-color="#1fb0f5"/><stop offset="0.8" stop-color="#0e8be0"/><stop offset="1" stop-color="#0a5cae"/></radialGradient>
  <linearGradient id="ggr" x1="0" y1="0" x2="0" y2="1"><stop offset="0" stop-color="#c8e86a"/><stop offset="0.5" stop-color="#8fc41e"/><stop offset="1" stop-color="#5fa40a"/></linearGradient>
  <linearGradient id="ggh" x1="0" y1="0" x2="1" y2="0"><stop offset="0" stop-color="#6db312"/><stop offset="0.5" stop-color="#a3d03a"/><stop offset="1" stop-color="#d8ee86"/></linearGradient>
  <linearGradient id="gglass" x1="0" y1="0" x2="1" y2="1"><stop offset="0" stop-color="#fff"/><stop offset="1" stop-color="#d8d8d8"/></linearGradient>
 </defs>
 <ellipse cx="19" cy="33.5" rx="9" ry="1.5" fill="#000" opacity="0.15"/>
 <circle cx="19" cy="23.3" r="10.8" fill="url(#gy)"/>
 <path d="M19 23.3L13.6 13.95A10.8 10.8 0 0 0 8.2 23.3Z" fill="url(#gb)"/>
 <path d="M19 23.3L29.8 23.3A10.8 10.8 0 0 0 24.4 13.95Z" fill="url(#gb)"/>
 <path d="M19 23.3L24.4 32.65A10.8 10.8 0 0 1 13.6 32.65Z" fill="url(#gb)"/>
 <circle cx="19" cy="23.3" r="10.6" fill="none" stroke="#7a5a00" stroke-width="0.5" opacity="0.5"/>
 <path d="M74.3 15.8A7.3 7.3 0 0 0 73.5 30.3" stroke="url(#gbl)" stroke-width="4.3" fill="none"/>
 <path d="M67.6 21L76.6 12.4L76.4 21.6Z" fill="#5aaae8"/>
 <path d="M79.8 15.9A7.1 7.1 0 0 1 80.3 30.2" stroke="url(#gbl)" stroke-width="4.3" fill="none"/>
 <path d="M85.2 24.6L76.3 33L76.4 24Z" fill="#1566cc"/>
 <ellipse cx="76" cy="33" rx="9" ry="1.2" fill="#000" opacity="0.12"/>
 <ellipse cx="165" cy="33.5" rx="9" ry="1.3" fill="#000" opacity="0.12"/>
 <path d="M166.5 24.5L174 31.5" stroke="#111" stroke-width="3.2" stroke-linecap="round"/>
 <circle cx="160.6" cy="18.5" r="6.6" fill="url(#gglass)" stroke="#b9b9b9" stroke-width="1.6"/>
 <path d="M170.5 11.5V21.5M165.5 16.5H175.5" stroke="#5c9e00" stroke-width="3.6"/>
 <path d="M170.5 12.3V20.7M166.3 16.5H174.7" stroke="#b8e02a" stroke-width="1.8"/>
 <ellipse cx="223" cy="33.5" rx="9" ry="1.3" fill="#000" opacity="0.12"/>
 <path d="M224.3 24.5L231.8 31.5" stroke="#111" stroke-width="3.2" stroke-linecap="round"/>
 <circle cx="218.4" cy="18.5" r="6.6" fill="url(#gglass)" stroke="#b9b9b9" stroke-width="1.6"/>
 <rect x="222.6" y="14.8" width="11" height="3.2" rx="1.5" fill="#d92a2a"/>
 <circle cx="278.5" cy="22.2" r="10.2" fill="url(#gbc)"/>
 <circle cx="278.5" cy="22.2" r="8.6" fill="none" stroke="#9be0ff" stroke-width="0.7" opacity="0.7"/>
 <path d="M275.6 17.5H281.4L278.5 23Z M275.6 22.5H281.4L278.5 28Z" fill="#333"/>
 <circle cx="337.6" cy="22.2" r="10.2" fill="url(#gbc)"/>
 <circle cx="337.6" cy="22.2" r="8.6" fill="none" stroke="#9be0ff" stroke-width="0.7" opacity="0.7"/>
 <path d="M334.7 21.9H340.5L337.6 16.4Z M334.7 27H340.5L337.6 21.5Z" fill="#333"/>
 <path d="M383.5 22.4L392.2 14.6V18H404.5V27.4H392.2V30.8Z" fill="url(#ggh)" stroke="#5a9a10" stroke-width="0.9" stroke-linejoin="round"/>
 <path d="M463.5 21.6L452.6 13.1V17.2H440V26.4H452.6V30Z" fill="url(#ggr)" stroke="#5a9a10" stroke-width="0.9" stroke-linejoin="round"/>
 <ellipse cx="452" cy="31" rx="11" ry="1.2" fill="#000" opacity="0.15"/>
 <path d="M508.75 12.2L517.3 20.6H513.4V32.2H504.1V20.6H500.2Z" fill="url(#ggr)" stroke="#5a9a10" stroke-width="0.9" stroke-linejoin="round"/>
 <ellipse cx="508.5" cy="32.8" rx="8" ry="1.1" fill="#000" opacity="0.15"/>
 <path d="M565.3 34.6L574.1 22.7H569.7V10.8H560.2V22.7H556.1Z" fill="url(#ggh)" stroke="#5a9a10" stroke-width="0.9" stroke-linejoin="round"/>
</svg>


<svg style="left:1824px;top:98px" width="92" height="52">
 <rect x="1" y="0" width="51" height="50.5" fill="#f5c400"/>
 <circle cx="8.3" cy="5.5" r="4.6" fill="#0d2a6a"/>
 <path d="M5.8 7.5L8.3 3.5L10.8 7.5Z" fill="#fff"/>
 <path d="M40 3H46V7C46 9 43 10.5 43 10.5C43 10.5 40 9 40 7Z" fill="#1a3ab0"/>
 <text x="3" y="29" font-family="Liberation Serif" font-weight="bold" font-size="26" fill="#111" textLength="22" lengthAdjust="spacingAndGlyphs">M</text>
 <text x="25" y="26" font-family="Liberation Sans" font-weight="bold" font-size="13.5" fill="#111" textLength="26" lengthAdjust="spacingAndGlyphs">idas</text>
 <rect x="4.5" y="35" width="15" height="1.2" fill="#333" opacity="0.7"/>
 <rect x="27" y="31" width="11" height="17" fill="#d63b00"/>
 <path d="M32.5 34C30.5 38 31 43 32.5 46C33.5 42 34 38 32.5 34Z" fill="#2b55d0"/>
 <rect x="60" y="1" width="28.5" height="41.5" fill="#d63b00"/>
 <rect x="57.5" y="42.5" width="27.5" height="7.5" fill="#1e45c8"/>
 <path d="M60 18L57.5 43H60Z" fill="#1e45c8"/>
 <rect x="88.5" y="12" width="1.6" height="10" fill="#1e45c8"/>
 <path d="M74.5 6C70 10 68.5 20 70 30C70.5 35 72 38.5 73.5 40.5C74 34 76 24 77.5 16C78.5 11 77 7 74.5 6Z" fill="#2b55d0"/>
 <path d="M65.5 4L68.5 12M68 5L70.5 10M82 13L80 20M85 11L84 15" stroke="#f0a000" stroke-width="1.2"/>
 <text x="62" y="38.5" font-family="Liberation Sans" font-weight="bold" font-size="7" fill="#f4e0d0">TCL</text>
 <text x="60" y="48.8" font-family="Liberation Sans" font-weight="bold" font-size="6" fill="#e8e84a" textLength="23" lengthAdjust="spacingAndGlyphs">POWERED</text>
</svg>

</body></html>
